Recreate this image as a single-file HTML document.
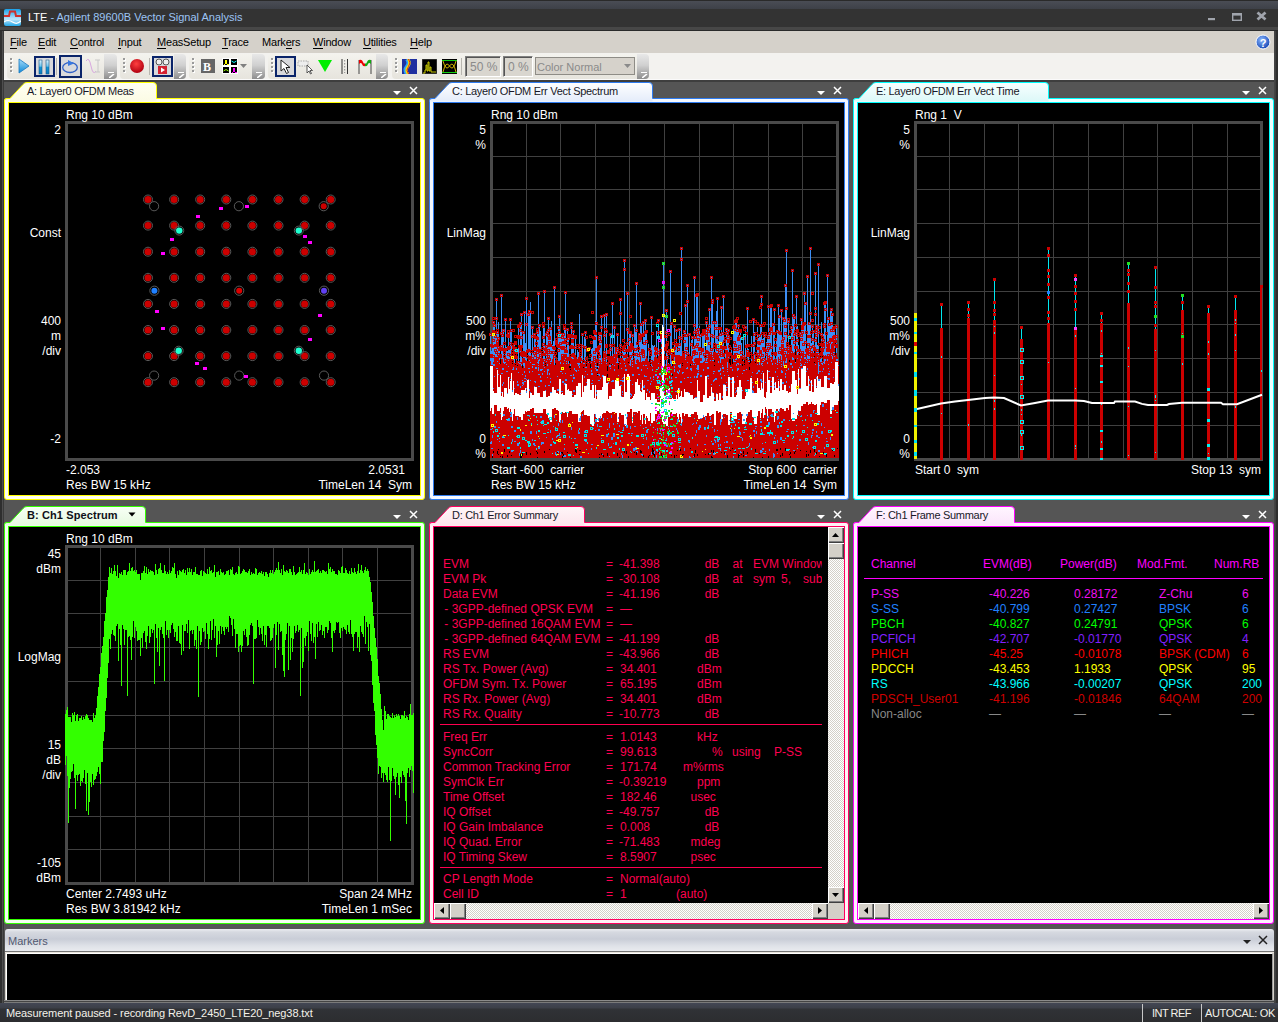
<!DOCTYPE html><html><head><meta charset="utf-8"><style>
*{box-sizing:border-box;margin:0;padding:0}
html,body{width:1278px;height:1022px;overflow:hidden;background:#555555;font-family:"Liberation Sans",sans-serif}
.t{position:absolute;white-space:pre;line-height:1;}
.a{position:absolute}
</style></head><body>

<div style="position:absolute;left:0px;top:0px;width:1278px;height:31px;background:linear-gradient(#2a2a2a 0,#2a2a2a 1px,#4a4d55 1px,#3e4148 9px,#333 9px,#333 27px,#474747 27px,#474747 30px,#2a2a2a 30px)"></div>
<svg class="a" style="left:4px;top:9px" width="17" height="17" viewBox="0 0 17 17">
<defs><linearGradient id="ig" x1="0" y1="0" x2="0" y2="1"><stop offset="0" stop-color="#1aa0e8"/><stop offset="0.6" stop-color="#bfe6fb"/><stop offset="1" stop-color="#22a8ea"/></linearGradient></defs>
<rect x="0" y="0" width="17" height="17" rx="2" fill="url(#ig)"/>
<path d="M0 7 L5 7 L6 2.5 L11 2.5 L12 7 L17 7" stroke="#d0302a" stroke-width="2" fill="none"/>
<path d="M0 13 Q4 10 8.5 13 T17 12" stroke="#fff" stroke-width="1.2" fill="none"/>
</svg>
<div class="t" style="left:28px;top:11.69px;font-size:11px;color:#ffffff;">LTE <span style="color:#9cc4f4">- Agilent 89600B Vector Signal Analysis</span></div>
<svg class="a" style="left:1200px;top:8px" width="72" height="16" viewBox="0 0 72 16">
<rect x="8" y="10" width="7" height="2.2" fill="#a0a4ac"/>
<rect x="32.7" y="5.7" width="8.6" height="6.6" fill="none" stroke="#a0a4ac" stroke-width="1.4"/><rect x="32" y="5" width="10" height="2.6" fill="#a0a4ac"/>
<path d="M57.5 4.5 L65.5 11.5 M65.5 4.5 L57.5 11.5" stroke="#a0a4ac" stroke-width="2.8"/>
</svg>
<div style="position:absolute;left:0px;top:31px;width:4px;height:991px;background:linear-gradient(90deg,#2e2e2e 0,#2e2e2e 2px,#4e4e4e 2px,#4e4e4e 3px,#3a3a3a 3px)"></div>
<div style="position:absolute;left:1274px;top:31px;width:4px;height:991px;background:linear-gradient(90deg,#3a3a3a 0,#4e4e4e 1px,#2e2e2e 2px)"></div>
<div style="position:absolute;left:4px;top:31px;width:1270px;height:22px;background:#d5d1ca"></div>
<div class="t" style="left:10px;top:36.69px;font-size:11px;color:#000;letter-spacing:-0.2px"><u style="text-decoration:none;border-bottom:1px solid #000">F</u>ile</div>
<div class="t" style="left:38px;top:36.69px;font-size:11px;color:#000;letter-spacing:-0.2px"><u style="text-decoration:none;border-bottom:1px solid #000">E</u>dit</div>
<div class="t" style="left:70px;top:36.69px;font-size:11px;color:#000;letter-spacing:-0.2px"><u style="text-decoration:none;border-bottom:1px solid #000">C</u>ontrol</div>
<div class="t" style="left:118px;top:36.69px;font-size:11px;color:#000;letter-spacing:-0.2px"><u style="text-decoration:none;border-bottom:1px solid #000">I</u>nput</div>
<div class="t" style="left:157px;top:36.69px;font-size:11px;color:#000;letter-spacing:-0.2px"><u style="text-decoration:none;border-bottom:1px solid #000">M</u>easSetup</div>
<div class="t" style="left:222px;top:36.69px;font-size:11px;color:#000;letter-spacing:-0.2px"><u style="text-decoration:none;border-bottom:1px solid #000">T</u>race</div>
<div class="t" style="left:262px;top:36.69px;font-size:11px;color:#000;letter-spacing:-0.2px">Mark<u style="text-decoration:none;border-bottom:1px solid #000">e</u>rs</div>
<div class="t" style="left:313px;top:36.69px;font-size:11px;color:#000;letter-spacing:-0.2px"><u style="text-decoration:none;border-bottom:1px solid #000">W</u>indow</div>
<div class="t" style="left:363px;top:36.69px;font-size:11px;color:#000;letter-spacing:-0.2px"><u style="text-decoration:none;border-bottom:1px solid #000">U</u>tilities</div>
<div class="t" style="left:410px;top:36.69px;font-size:11px;color:#000;letter-spacing:-0.2px"><u style="text-decoration:none;border-bottom:1px solid #000">H</u>elp</div>
<svg class="a" style="left:1255px;top:34px" width="16" height="16" viewBox="0 0 16 16">
<defs><radialGradient id="hg" cx="0.4" cy="0.35" r="0.7"><stop offset="0" stop-color="#8ab8ff"/><stop offset="1" stop-color="#1040b0"/></radialGradient></defs>
<circle cx="8" cy="8" r="7" fill="url(#hg)" stroke="#fff" stroke-width="1"/>
<text x="8" y="12.5" font-size="11" font-weight="bold" text-anchor="middle" fill="#fff" font-family="Liberation Sans">?</text></svg>
<div style="position:absolute;left:4px;top:53px;width:1270px;height:26px;background:#f3f2ef"></div>
<div style="position:absolute;left:4px;top:79px;width:1270px;height:1px;background:#fafafa"></div>
<div style="position:absolute;left:4px;top:80px;width:1270px;height:2px;background:#3e3e3e"></div>
<div style="position:absolute;left:7px;top:54px;width:110px;height:25px;background:linear-gradient(#f4f3ee,#e6e4dd);border-radius:4px"></div>
<div style="position:absolute;left:10px;top:58px;width:2px;height:2px;background:#9a9a9a;box-shadow:1px 1px 0 #fff"></div>
<div style="position:absolute;left:10px;top:62px;width:2px;height:2px;background:#9a9a9a;box-shadow:1px 1px 0 #fff"></div>
<div style="position:absolute;left:10px;top:66px;width:2px;height:2px;background:#9a9a9a;box-shadow:1px 1px 0 #fff"></div>
<div style="position:absolute;left:10px;top:70px;width:2px;height:2px;background:#9a9a9a;box-shadow:1px 1px 0 #fff"></div>
<div style="position:absolute;left:104px;top:54px;width:13px;height:25px;background:linear-gradient(#e8e8e8 0%,#d0d0d0 45%,#8e8e8e 100%);border-radius:0 4px 4px 0"></div>
<div style="position:absolute;left:108px;top:72px;width:6px;height:1px;background:#fff"></div>
<svg class="a" style="left:109px;top:74px" width="6" height="4"><path d="M0 4 L5 0" stroke="#fff" stroke-width="1.6"/></svg>
<div style="position:absolute;left:120px;top:54px;width:66px;height:25px;background:linear-gradient(#f4f3ee,#e6e4dd);border-radius:4px"></div>
<div style="position:absolute;left:123px;top:58px;width:2px;height:2px;background:#9a9a9a;box-shadow:1px 1px 0 #fff"></div>
<div style="position:absolute;left:123px;top:62px;width:2px;height:2px;background:#9a9a9a;box-shadow:1px 1px 0 #fff"></div>
<div style="position:absolute;left:123px;top:66px;width:2px;height:2px;background:#9a9a9a;box-shadow:1px 1px 0 #fff"></div>
<div style="position:absolute;left:123px;top:70px;width:2px;height:2px;background:#9a9a9a;box-shadow:1px 1px 0 #fff"></div>
<div style="position:absolute;left:174px;top:54px;width:12px;height:25px;background:linear-gradient(#e8e8e8 0%,#d0d0d0 45%,#8e8e8e 100%);border-radius:0 4px 4px 0"></div>
<div style="position:absolute;left:178px;top:72px;width:6px;height:1px;background:#fff"></div>
<svg class="a" style="left:179px;top:74px" width="6" height="4"><path d="M0 4 L5 0" stroke="#fff" stroke-width="1.6"/></svg>
<div style="position:absolute;left:189px;top:54px;width:76px;height:25px;background:linear-gradient(#f4f3ee,#e6e4dd);border-radius:4px"></div>
<div style="position:absolute;left:192px;top:58px;width:2px;height:2px;background:#9a9a9a;box-shadow:1px 1px 0 #fff"></div>
<div style="position:absolute;left:192px;top:62px;width:2px;height:2px;background:#9a9a9a;box-shadow:1px 1px 0 #fff"></div>
<div style="position:absolute;left:192px;top:66px;width:2px;height:2px;background:#9a9a9a;box-shadow:1px 1px 0 #fff"></div>
<div style="position:absolute;left:192px;top:70px;width:2px;height:2px;background:#9a9a9a;box-shadow:1px 1px 0 #fff"></div>
<div style="position:absolute;left:252px;top:54px;width:13px;height:25px;background:linear-gradient(#e8e8e8 0%,#d0d0d0 45%,#8e8e8e 100%);border-radius:0 4px 4px 0"></div>
<div style="position:absolute;left:256px;top:72px;width:6px;height:1px;background:#fff"></div>
<svg class="a" style="left:257px;top:74px" width="6" height="4"><path d="M0 4 L5 0" stroke="#fff" stroke-width="1.6"/></svg>
<div style="position:absolute;left:268px;top:54px;width:120px;height:25px;background:linear-gradient(#f4f3ee,#e6e4dd);border-radius:4px"></div>
<div style="position:absolute;left:271px;top:58px;width:2px;height:2px;background:#9a9a9a;box-shadow:1px 1px 0 #fff"></div>
<div style="position:absolute;left:271px;top:62px;width:2px;height:2px;background:#9a9a9a;box-shadow:1px 1px 0 #fff"></div>
<div style="position:absolute;left:271px;top:66px;width:2px;height:2px;background:#9a9a9a;box-shadow:1px 1px 0 #fff"></div>
<div style="position:absolute;left:271px;top:70px;width:2px;height:2px;background:#9a9a9a;box-shadow:1px 1px 0 #fff"></div>
<div style="position:absolute;left:376px;top:54px;width:12px;height:25px;background:linear-gradient(#e8e8e8 0%,#d0d0d0 45%,#8e8e8e 100%);border-radius:0 4px 4px 0"></div>
<div style="position:absolute;left:380px;top:72px;width:6px;height:1px;background:#fff"></div>
<svg class="a" style="left:381px;top:74px" width="6" height="4"><path d="M0 4 L5 0" stroke="#fff" stroke-width="1.6"/></svg>
<div style="position:absolute;left:392px;top:54px;width:257px;height:25px;background:linear-gradient(#f4f3ee,#e6e4dd);border-radius:4px"></div>
<div style="position:absolute;left:395px;top:58px;width:2px;height:2px;background:#9a9a9a;box-shadow:1px 1px 0 #fff"></div>
<div style="position:absolute;left:395px;top:62px;width:2px;height:2px;background:#9a9a9a;box-shadow:1px 1px 0 #fff"></div>
<div style="position:absolute;left:395px;top:66px;width:2px;height:2px;background:#9a9a9a;box-shadow:1px 1px 0 #fff"></div>
<div style="position:absolute;left:395px;top:70px;width:2px;height:2px;background:#9a9a9a;box-shadow:1px 1px 0 #fff"></div>
<div style="position:absolute;left:637px;top:54px;width:12px;height:25px;background:linear-gradient(#e8e8e8 0%,#d0d0d0 45%,#8e8e8e 100%);border-radius:0 4px 4px 0"></div>
<div style="position:absolute;left:641px;top:72px;width:6px;height:1px;background:#fff"></div>
<svg class="a" style="left:642px;top:74px" width="6" height="4"><path d="M0 4 L5 0" stroke="#fff" stroke-width="1.6"/></svg>
<svg class="a" style="left:18px;top:58px" width="12" height="16"><defs><linearGradient id="pl" x1="0" y1="0" x2="0" y2="1"><stop offset="0" stop-color="#a8dcfa"/><stop offset="1" stop-color="#0e8ad8"/></linearGradient></defs><path d="M1 1 L11 8 L1 15 Z" fill="url(#pl)" stroke="#1a78c0" stroke-width="0.8"/></svg>
<div style="position:absolute;left:34px;top:56px;width:21px;height:21px;border:2px solid #0a246a;background:#d8d9dc"></div>
<svg class="a" style="left:38px;top:59px" width="14" height="16"><defs><linearGradient id="pz" x1="0" y1="0" x2="0" y2="1"><stop offset="0" stop-color="#e0f4ff"/><stop offset="0.45" stop-color="#6cc4ee"/><stop offset="0.5" stop-color="#1296d6"/><stop offset="1" stop-color="#0a7cc0"/></linearGradient></defs><rect x="1" y="1" width="3" height="14" fill="url(#pz)" stroke="#1a5a8a" stroke-width="0.6"/><rect x="8" y="1" width="3" height="14" fill="url(#pz)" stroke="#1a5a8a" stroke-width="0.6"/></svg>
<div style="position:absolute;left:56px;top:58px;width:1px;height:17px;background:#b8b6b0"></div>
<div style="position:absolute;left:59px;top:55px;width:23px;height:23px;border:2px solid #0a246a;background:#d8d9dc"></div>
<svg class="a" style="left:61px;top:58px" width="18" height="16"><ellipse cx="9" cy="9.5" rx="7.3" ry="5" fill="none" stroke="#3060c8" stroke-width="1.3"/><path d="M7 2 L13 5.5 L7 8 Z" fill="#3878e0"/></svg>
<svg class="a" style="left:86px;top:58px" width="16" height="16"><path d="M0 3 Q3 -2 5 8 T10 13" fill="none" stroke="#d8a8e0" stroke-width="1"/><path d="M9 2 H14 M9 14 H14 M12 2 V14" stroke="#c8c8c8" stroke-width="1" fill="none"/></svg>
<svg class="a" style="left:129px;top:58px" width="16" height="16"><defs><radialGradient id="rc" cx="0.45" cy="0.35" r="0.65"><stop offset="0" stop-color="#ff4040"/><stop offset="1" stop-color="#b00010"/></radialGradient></defs><circle cx="8" cy="8" r="7" fill="url(#rc)"/></svg>
<div style="position:absolute;left:149px;top:58px;width:1px;height:17px;background:#b8b6b0"></div>
<div style="position:absolute;left:152px;top:56px;width:21px;height:21px;border:2px solid #0a246a;background:#d8d9dc"></div>
<svg class="a" style="left:154px;top:58px" width="17" height="17"><circle cx="5" cy="4" r="3" fill="#eee" stroke="#555" stroke-width="1"/><circle cx="12" cy="4" r="3" fill="#eee" stroke="#555" stroke-width="1"/><rect x="4" y="8" width="9" height="8" fill="#d42030"/><path d="M7 9.5 L11 12 L7 14.5Z" fill="#fff"/></svg>
<div style="position:absolute;left:201px;top:59px;width:14px;height:14px;background:#666"></div>
<div class="t" style="left:203px;top:60.84px;font-size:12px;color:#fff;font-weight:bold;font-family:Liberation Serif,serif">B</div>
<svg class="a" style="left:222px;top:58px" width="16" height="16" shape-rendering="crispEdges"><rect width="16" height="16" fill="#fff"/><rect x="1" y="1" width="6" height="6" fill="#000"/><rect x="9" y="1" width="6" height="6" fill="#000"/><rect x="1" y="9" width="6" height="6" fill="#000"/><rect x="9" y="9" width="6" height="6" fill="#000"/>
<path d="M1.5 6 H3 L4 2 L5 6 H6.5" stroke="#ff0" fill="none" stroke-width="1"/><path d="M9.5 3 Q12 6 14.5 3" stroke="#0ff" fill="none" stroke-width="1" shape-rendering="auto"/><path d="M1.5 13 Q4 10 6.5 13" stroke="#9f0" fill="none" stroke-width="1" shape-rendering="auto"/><path d="M9.5 14 H11 L12 10 L13 14 H14.5" stroke="#f0f" fill="none" stroke-width="1"/></svg>
<svg class="a" style="left:240px;top:64px" width="7" height="4"><path d="M0 0 H7 L3.5 4Z" fill="#808080"/></svg>
<div style="position:absolute;left:275px;top:56px;width:21px;height:21px;border:2px solid #0a246a;background:#d8d9dc"></div>
<svg class="a" style="left:280px;top:59px" width="12" height="16"><path d="M1 1 L1 12 L4 9.5 L6.5 14.5 L8.5 13.5 L6 8.5 L10 8.5 Z" fill="#fff" stroke="#222" stroke-width="1"/></svg>
<svg class="a" style="left:297px;top:58px" width="17" height="17"><rect x="1" y="3" width="10" height="5" fill="#eee" stroke="#aaa" stroke-dasharray="1.5 1" stroke-width="1"/><path d="M10 7 L10 15 L12 13 L13.5 16 L14.5 15.5 L13 12.5 L15.5 12.5 Z" fill="#fff" stroke="#333" stroke-width="0.8"/></svg>
<svg class="a" style="left:317px;top:59px" width="16" height="14"><path d="M1 1 H15 L8 13 Z" fill="#00ee00"/></svg>
<svg class="a" style="left:341px;top:58px" width="8" height="17"><path d="M1 1 V16 M6.5 1 V16" stroke="#333" stroke-width="1"/><path d="M3.7 2 V15" stroke="#888" stroke-width="1" stroke-dasharray="1.5 1.5"/></svg>
<svg class="a" style="left:357px;top:58px" width="17" height="17"><path d="M2 2 V16 M14 2 V16" stroke="#444" stroke-width="1"/><path d="M2 2 Q5 1 6 4 Q7 7 8 5 V8 Q6 9 5 6 Q4 4 2 6 Z" fill="#e00"/><path d="M14 2 Q11 1 10 4 Q9 7 8 5 V8 Q10 9 11 6 Q12 4 14 6 Z" fill="#1a1"/></svg>
<svg class="a" style="left:402px;top:59px" width="15" height="15"><rect width="15" height="15" fill="#2030a0"/><path d="M5 0 Q8 4 5 7.5 T5 15" stroke="#2aa0ff" stroke-width="4" fill="none"/><path d="M6 0 Q9 4 6 7.5 T6 15" stroke="#f0e000" stroke-width="2.4" fill="none"/><path d="M6.5 0 Q9.5 4 6.5 7.5 T6.5 15" stroke="#e02020" stroke-width="1" fill="none"/></svg>
<svg class="a" style="left:422px;top:59px" width="15" height="15"><rect width="15" height="15" fill="#000" stroke="#555"/><path d="M1 14 H3 V11 H4 V6 H5 V12 H6 V3 H7 V12 H8 V8 H9 V13 H14" stroke="#dddd00" fill="none" stroke-width="0.9"/></svg>
<svg class="a" style="left:442px;top:59px" width="15" height="15"><rect width="15" height="15" fill="#000"/><path d="M0 1.5 H15 M0 13.5 H15" stroke="#1c1" stroke-width="1"/><path d="M1 13 Q4 1 7.5 7 T14 2 M1 2 Q4 13 7.5 7 T14 13" stroke="#e8c800" fill="none" stroke-width="0.9"/></svg>
<div style="position:absolute;left:461px;top:58px;width:1px;height:17px;background:#b8b6b0"></div>
<div style="position:absolute;left:465px;top:56px;width:36px;height:21px;background:#d9d6cf;border:1px solid;border-color:#808080 #fff #fff #808080;box-shadow:inset 1px 1px 0 #555"></div>
<div class="t" style="left:470px;top:60.84px;font-size:12px;color:#8a8a8a;">50 %</div>
<div style="position:absolute;left:503px;top:56px;width:30px;height:21px;background:#d9d6cf;border:1px solid;border-color:#808080 #fff #fff #808080;box-shadow:inset 1px 1px 0 #555"></div>
<div class="t" style="left:508px;top:60.84px;font-size:12px;color:#8a8a8a;">0 %</div>
<div style="position:absolute;left:535px;top:57px;width:100px;height:18px;background:#d6d2cb;border:1px solid #8e8c86"></div>
<div class="t" style="left:537px;top:61.69px;font-size:11px;color:#8a8a8a;">Color Normal</div>
<svg class="a" style="left:624px;top:64px" width="7" height="4"><path d="M0 0 H7 L3.5 4Z" fill="#8a8a8a"/></svg>
<div style="position:absolute;left:4px;top:98px;width:421px;height:402px;border:1px solid #ffff00;background:#fffff0;border-radius:3px"></div>
<svg class="a" style="left:4px;top:82px" width="154" height="20">
<defs><linearGradient id="tf498" x1="0" y1="0" x2="0" y2="1"><stop offset="0" stop-color="#fffff4"/><stop offset="1" stop-color="#fbfbe4"/></linearGradient></defs>
<path d="M0.5 19.5 V18.5 Q0.5 16.5 3 16.5 H6 L19 2.5 Q20.5 0.5 23 0.5 L149 0.5 Q152.5 0.5 152.5 4 L152.5 19.5 Z" fill="url(#tf498)"/>
<path d="M0.5 19.5 V18.5 Q0.5 16.5 3 16.5 H6 L19 2.5 Q20.5 0.5 23 0.5 L149 0.5 Q152.5 0.5 152.5 4 L152.5 16.5" fill="none" stroke="#ffff00" stroke-width="1"/>
</svg>
<div style="position:absolute;left:8px;top:102px;width:413px;height:394px;border:1px solid #ffff00;background:#000"></div>
<div class="t" style="left:27px;top:85.69px;font-size:11px;color:#181828;letter-spacing:-0.3px">A: Layer0 OFDM Meas</div>
<svg class="a" style="left:393px;top:86px" width="26" height="10">
<path d="M0 5 H8 L4 9 Z" fill="#fff"/><path d="M17 1 L24 8 M24 1 L17 8" stroke="#fff" stroke-width="1.5"/></svg>
<div style="position:absolute;left:429px;top:98px;width:420px;height:402px;border:1px solid #2f7cf0;background:#f4f8ff;border-radius:3px"></div>
<svg class="a" style="left:429px;top:82px" width="225" height="20">
<defs><linearGradient id="tf42998" x1="0" y1="0" x2="0" y2="1"><stop offset="0" stop-color="#ffffff"/><stop offset="1" stop-color="#e4ecfa"/></linearGradient></defs>
<path d="M0.5 19.5 V18.5 Q0.5 16.5 3 16.5 H6 L19 2.5 Q20.5 0.5 23 0.5 L220 0.5 Q223.5 0.5 223.5 4 L223.5 19.5 Z" fill="url(#tf42998)"/>
<path d="M0.5 19.5 V18.5 Q0.5 16.5 3 16.5 H6 L19 2.5 Q20.5 0.5 23 0.5 L220 0.5 Q223.5 0.5 223.5 4 L223.5 16.5" fill="none" stroke="#2f7cf0" stroke-width="1"/>
</svg>
<div style="position:absolute;left:433px;top:102px;width:412px;height:394px;border:1px solid #2f7cf0;background:#000"></div>
<div class="t" style="left:452px;top:85.69px;font-size:11px;color:#181828;letter-spacing:-0.3px">C: Layer0 OFDM Err Vect Spectrum</div>
<svg class="a" style="left:817px;top:86px" width="26" height="10">
<path d="M0 5 H8 L4 9 Z" fill="#fff"/><path d="M17 1 L24 8 M24 1 L17 8" stroke="#fff" stroke-width="1.5"/></svg>
<div style="position:absolute;left:853px;top:98px;width:421px;height:402px;border:1px solid #00ffff;background:#f0ffff;border-radius:3px"></div>
<svg class="a" style="left:853px;top:82px" width="197" height="20">
<defs><linearGradient id="tf85398" x1="0" y1="0" x2="0" y2="1"><stop offset="0" stop-color="#f8ffff"/><stop offset="1" stop-color="#dcf8f8"/></linearGradient></defs>
<path d="M0.5 19.5 V18.5 Q0.5 16.5 3 16.5 H6 L19 2.5 Q20.5 0.5 23 0.5 L192 0.5 Q195.5 0.5 195.5 4 L195.5 19.5 Z" fill="url(#tf85398)"/>
<path d="M0.5 19.5 V18.5 Q0.5 16.5 3 16.5 H6 L19 2.5 Q20.5 0.5 23 0.5 L192 0.5 Q195.5 0.5 195.5 4 L195.5 16.5" fill="none" stroke="#00ffff" stroke-width="1"/>
</svg>
<div style="position:absolute;left:857px;top:102px;width:413px;height:394px;border:1px solid #00ffff;background:#000"></div>
<div class="t" style="left:876px;top:85.69px;font-size:11px;color:#181828;letter-spacing:-0.3px">E: Layer0 OFDM Err Vect Time</div>
<svg class="a" style="left:1242px;top:86px" width="26" height="10">
<path d="M0 5 H8 L4 9 Z" fill="#fff"/><path d="M17 1 L24 8 M24 1 L17 8" stroke="#fff" stroke-width="1.5"/></svg>
<div style="position:absolute;left:4px;top:522px;width:421px;height:402px;border:1px solid #33ff00;background:#f4fff0;border-radius:3px"></div>
<svg class="a" style="left:4px;top:506px" width="143" height="20">
<defs><linearGradient id="tf4522" x1="0" y1="0" x2="0" y2="1"><stop offset="0" stop-color="#f8fff6"/><stop offset="1" stop-color="#e6fae0"/></linearGradient></defs>
<path d="M0.5 19.5 V18.5 Q0.5 16.5 3 16.5 H6 L19 2.5 Q20.5 0.5 23 0.5 L138 0.5 Q141.5 0.5 141.5 4 L141.5 19.5 Z" fill="url(#tf4522)"/>
<path d="M0.5 19.5 V18.5 Q0.5 16.5 3 16.5 H6 L19 2.5 Q20.5 0.5 23 0.5 L138 0.5 Q141.5 0.5 141.5 4 L141.5 16.5" fill="none" stroke="#33ff00" stroke-width="1"/>
</svg>
<div style="position:absolute;left:8px;top:526px;width:413px;height:394px;border:1px solid #33ff00;background:#000"></div>
<div class="t" style="left:27px;top:509.69px;font-size:11px;color:#101018;font-weight:bold;letter-spacing:0.1px">B: Ch1 Spectrum</div>
<svg class="a" style="left:393px;top:510px" width="26" height="10">
<path d="M0 5 H8 L4 9 Z" fill="#fff"/><path d="M17 1 L24 8 M24 1 L17 8" stroke="#fff" stroke-width="1.5"/></svg>
<svg class="a" style="left:128px;top:512px" width="8" height="5"><path d="M0.5 0.5 H7.5 L4 4.5Z" fill="#000"/></svg>
<div style="position:absolute;left:429px;top:522px;width:420px;height:402px;border:1px solid #ff0060;background:#fff2f6;border-radius:3px"></div>
<svg class="a" style="left:429px;top:506px" width="157" height="20">
<defs><linearGradient id="tf429522" x1="0" y1="0" x2="0" y2="1"><stop offset="0" stop-color="#fff6f8"/><stop offset="1" stop-color="#fde4ec"/></linearGradient></defs>
<path d="M0.5 19.5 V18.5 Q0.5 16.5 3 16.5 H6 L19 2.5 Q20.5 0.5 23 0.5 L152 0.5 Q155.5 0.5 155.5 4 L155.5 19.5 Z" fill="url(#tf429522)"/>
<path d="M0.5 19.5 V18.5 Q0.5 16.5 3 16.5 H6 L19 2.5 Q20.5 0.5 23 0.5 L152 0.5 Q155.5 0.5 155.5 4 L155.5 16.5" fill="none" stroke="#ff0060" stroke-width="1"/>
</svg>
<div style="position:absolute;left:433px;top:526px;width:412px;height:394px;border:1px solid #ff0060;background:#000"></div>
<div class="t" style="left:452px;top:509.69px;font-size:11px;color:#181828;letter-spacing:-0.3px">D: Ch1 Error Summary</div>
<svg class="a" style="left:817px;top:510px" width="26" height="10">
<path d="M0 5 H8 L4 9 Z" fill="#fff"/><path d="M17 1 L24 8 M24 1 L17 8" stroke="#fff" stroke-width="1.5"/></svg>
<div style="position:absolute;left:853px;top:522px;width:421px;height:402px;border:1px solid #ff00ff;background:#fff2ff;border-radius:3px"></div>
<svg class="a" style="left:853px;top:506px" width="163" height="20">
<defs><linearGradient id="tf853522" x1="0" y1="0" x2="0" y2="1"><stop offset="0" stop-color="#fff6ff"/><stop offset="1" stop-color="#fbe4fb"/></linearGradient></defs>
<path d="M0.5 19.5 V18.5 Q0.5 16.5 3 16.5 H6 L19 2.5 Q20.5 0.5 23 0.5 L158 0.5 Q161.5 0.5 161.5 4 L161.5 19.5 Z" fill="url(#tf853522)"/>
<path d="M0.5 19.5 V18.5 Q0.5 16.5 3 16.5 H6 L19 2.5 Q20.5 0.5 23 0.5 L158 0.5 Q161.5 0.5 161.5 4 L161.5 16.5" fill="none" stroke="#ff00ff" stroke-width="1"/>
</svg>
<div style="position:absolute;left:857px;top:526px;width:413px;height:394px;border:1px solid #ff00ff;background:#000"></div>
<div class="t" style="left:876px;top:509.69px;font-size:11px;color:#181828;letter-spacing:-0.3px">F: Ch1 Frame Summary</div>
<svg class="a" style="left:1242px;top:510px" width="26" height="10">
<path d="M0 5 H8 L4 9 Z" fill="#fff"/><path d="M17 1 L24 8 M24 1 L17 8" stroke="#fff" stroke-width="1.5"/></svg>
<div style="position:absolute;left:5px;top:929px;width:1269px;height:22px;background:linear-gradient(#eceef2 0,#d6d9e0 3px,#c9cdd7 10px,#dfe2e8 17px,#e9ebef 22px);border-radius:3px 3px 0 0"></div>
<div class="t" style="left:8px;top:935.69px;font-size:11px;color:#505870;">Markers</div>
<svg class="a" style="left:1242px;top:935px" width="28" height="11">
<path d="M1 5 H9 L5 9 Z" fill="#222"/><path d="M17 1 L25 9 M25 1 L17 9" stroke="#222" stroke-width="1.5"/></svg>
<div style="position:absolute;left:5px;top:951px;width:1269px;height:1px;background:#757575"></div>
<div style="position:absolute;left:5px;top:952px;width:1269px;height:1px;background:#e8e4dc"></div>
<div style="position:absolute;left:5px;top:953px;width:1269px;height:47px;background:#d4d0c8"></div>
<div style="position:absolute;left:6px;top:953px;width:1267px;height:47px;border-top:1px solid #fff;border-left:1px solid #fff;border-right:1px solid #999;background:#000"></div>
<div style="position:absolute;left:4px;top:1000px;width:1270px;height:1px;background:#8a8a8a"></div>
<div style="position:absolute;left:4px;top:1001px;width:1270px;height:1px;background:#444"></div>
<div style="position:absolute;left:4px;top:1002px;width:1270px;height:1px;background:#7a7a7a"></div>
<div style="position:absolute;left:0px;top:1003px;width:1278px;height:19px;background:linear-gradient(#434754 0,#3c3f48 5px,#303236 6px,#2c2d30 19px)"></div>
<div class="t" style="left:6px;top:1007.69px;font-size:11px;color:#f4f2ea;letter-spacing:-0.1px">Measurement paused - recording RevD_2450_LTE20_neg38.txt</div>
<div style="position:absolute;left:1142px;top:1004px;width:1px;height:18px;background:#c8c8c8"></div>
<div style="position:absolute;left:1201px;top:1004px;width:1px;height:18px;background:#c8c8c8"></div>
<div class="t" style="left:1152px;top:1007.69px;font-size:11px;color:#f4f2ea;letter-spacing:-0.5px">INT REF</div>
<div class="t" style="left:1205px;top:1007.69px;font-size:11px;color:#f4f2ea;letter-spacing:-0.35px">AUTOCAL: OK</div>
<svg class="a" style="left:9px;top:103px" width="411" height="392" viewBox="9 103 411 392" shape-rendering="crispEdges" >
<rect x="65" y="121" width="349" height="3" fill="#4a4a4a"/><rect x="65" y="458" width="349" height="3" fill="#4a4a4a"/><rect x="65" y="121" width="3" height="340" fill="#4a4a4a"/><rect x="411" y="121" width="3" height="340" fill="#4a4a4a"/>
<g shape-rendering="auto"><circle cx="148.0" cy="199.5" r="4.5" fill="#000" stroke="#5a5a5a" stroke-width="1"/><circle cx="148.0" cy="199.5" r="3.5" fill="#cc0000"/><circle cx="148.0" cy="225.6" r="4.5" fill="#000" stroke="#5a5a5a" stroke-width="1"/><circle cx="148.0" cy="225.6" r="3.5" fill="#cc0000"/><circle cx="148.0" cy="251.7" r="4.5" fill="#000" stroke="#5a5a5a" stroke-width="1"/><circle cx="148.0" cy="251.7" r="3.5" fill="#cc0000"/><circle cx="148.0" cy="277.8" r="4.5" fill="#000" stroke="#5a5a5a" stroke-width="1"/><circle cx="148.0" cy="277.8" r="3.5" fill="#cc0000"/><circle cx="148.0" cy="303.9" r="4.5" fill="#000" stroke="#5a5a5a" stroke-width="1"/><circle cx="148.0" cy="303.9" r="3.5" fill="#cc0000"/><circle cx="148.0" cy="330.0" r="4.5" fill="#000" stroke="#5a5a5a" stroke-width="1"/><circle cx="148.0" cy="330.0" r="3.5" fill="#cc0000"/><circle cx="148.0" cy="356.1" r="4.5" fill="#000" stroke="#5a5a5a" stroke-width="1"/><circle cx="148.0" cy="356.1" r="3.5" fill="#cc0000"/><circle cx="148.0" cy="382.2" r="4.5" fill="#000" stroke="#5a5a5a" stroke-width="1"/><circle cx="148.0" cy="382.2" r="3.5" fill="#cc0000"/><circle cx="174.1" cy="199.5" r="4.5" fill="#000" stroke="#5a5a5a" stroke-width="1"/><circle cx="174.1" cy="199.5" r="3.5" fill="#cc0000"/><circle cx="174.1" cy="225.6" r="4.5" fill="#000" stroke="#5a5a5a" stroke-width="1"/><circle cx="174.1" cy="225.6" r="3.5" fill="#cc0000"/><circle cx="174.1" cy="251.7" r="4.5" fill="#000" stroke="#5a5a5a" stroke-width="1"/><circle cx="174.1" cy="251.7" r="3.5" fill="#cc0000"/><circle cx="174.1" cy="277.8" r="4.5" fill="#000" stroke="#5a5a5a" stroke-width="1"/><circle cx="174.1" cy="277.8" r="3.5" fill="#cc0000"/><circle cx="174.1" cy="303.9" r="4.5" fill="#000" stroke="#5a5a5a" stroke-width="1"/><circle cx="174.1" cy="303.9" r="3.5" fill="#cc0000"/><circle cx="174.1" cy="330.0" r="4.5" fill="#000" stroke="#5a5a5a" stroke-width="1"/><circle cx="174.1" cy="330.0" r="3.5" fill="#cc0000"/><circle cx="174.1" cy="356.1" r="4.5" fill="#000" stroke="#5a5a5a" stroke-width="1"/><circle cx="174.1" cy="356.1" r="3.5" fill="#cc0000"/><circle cx="174.1" cy="382.2" r="4.5" fill="#000" stroke="#5a5a5a" stroke-width="1"/><circle cx="174.1" cy="382.2" r="3.5" fill="#cc0000"/><circle cx="200.2" cy="199.5" r="4.5" fill="#000" stroke="#5a5a5a" stroke-width="1"/><circle cx="200.2" cy="199.5" r="3.5" fill="#cc0000"/><circle cx="200.2" cy="225.6" r="4.5" fill="#000" stroke="#5a5a5a" stroke-width="1"/><circle cx="200.2" cy="225.6" r="3.5" fill="#cc0000"/><circle cx="200.2" cy="251.7" r="4.5" fill="#000" stroke="#5a5a5a" stroke-width="1"/><circle cx="200.2" cy="251.7" r="3.5" fill="#cc0000"/><circle cx="200.2" cy="277.8" r="4.5" fill="#000" stroke="#5a5a5a" stroke-width="1"/><circle cx="200.2" cy="277.8" r="3.5" fill="#cc0000"/><circle cx="200.2" cy="303.9" r="4.5" fill="#000" stroke="#5a5a5a" stroke-width="1"/><circle cx="200.2" cy="303.9" r="3.5" fill="#cc0000"/><circle cx="200.2" cy="330.0" r="4.5" fill="#000" stroke="#5a5a5a" stroke-width="1"/><circle cx="200.2" cy="330.0" r="3.5" fill="#cc0000"/><circle cx="200.2" cy="356.1" r="4.5" fill="#000" stroke="#5a5a5a" stroke-width="1"/><circle cx="200.2" cy="356.1" r="3.5" fill="#cc0000"/><circle cx="200.2" cy="382.2" r="4.5" fill="#000" stroke="#5a5a5a" stroke-width="1"/><circle cx="200.2" cy="382.2" r="3.5" fill="#cc0000"/><circle cx="226.3" cy="199.5" r="4.5" fill="#000" stroke="#5a5a5a" stroke-width="1"/><circle cx="226.3" cy="199.5" r="3.5" fill="#cc0000"/><circle cx="226.3" cy="225.6" r="4.5" fill="#000" stroke="#5a5a5a" stroke-width="1"/><circle cx="226.3" cy="225.6" r="3.5" fill="#cc0000"/><circle cx="226.3" cy="251.7" r="4.5" fill="#000" stroke="#5a5a5a" stroke-width="1"/><circle cx="226.3" cy="251.7" r="3.5" fill="#cc0000"/><circle cx="226.3" cy="277.8" r="4.5" fill="#000" stroke="#5a5a5a" stroke-width="1"/><circle cx="226.3" cy="277.8" r="3.5" fill="#cc0000"/><circle cx="226.3" cy="303.9" r="4.5" fill="#000" stroke="#5a5a5a" stroke-width="1"/><circle cx="226.3" cy="303.9" r="3.5" fill="#cc0000"/><circle cx="226.3" cy="330.0" r="4.5" fill="#000" stroke="#5a5a5a" stroke-width="1"/><circle cx="226.3" cy="330.0" r="3.5" fill="#cc0000"/><circle cx="226.3" cy="356.1" r="4.5" fill="#000" stroke="#5a5a5a" stroke-width="1"/><circle cx="226.3" cy="356.1" r="3.5" fill="#cc0000"/><circle cx="226.3" cy="382.2" r="4.5" fill="#000" stroke="#5a5a5a" stroke-width="1"/><circle cx="226.3" cy="382.2" r="3.5" fill="#cc0000"/><circle cx="252.4" cy="199.5" r="4.5" fill="#000" stroke="#5a5a5a" stroke-width="1"/><circle cx="252.4" cy="199.5" r="3.5" fill="#cc0000"/><circle cx="252.4" cy="225.6" r="4.5" fill="#000" stroke="#5a5a5a" stroke-width="1"/><circle cx="252.4" cy="225.6" r="3.5" fill="#cc0000"/><circle cx="252.4" cy="251.7" r="4.5" fill="#000" stroke="#5a5a5a" stroke-width="1"/><circle cx="252.4" cy="251.7" r="3.5" fill="#cc0000"/><circle cx="252.4" cy="277.8" r="4.5" fill="#000" stroke="#5a5a5a" stroke-width="1"/><circle cx="252.4" cy="277.8" r="3.5" fill="#cc0000"/><circle cx="252.4" cy="303.9" r="4.5" fill="#000" stroke="#5a5a5a" stroke-width="1"/><circle cx="252.4" cy="303.9" r="3.5" fill="#cc0000"/><circle cx="252.4" cy="330.0" r="4.5" fill="#000" stroke="#5a5a5a" stroke-width="1"/><circle cx="252.4" cy="330.0" r="3.5" fill="#cc0000"/><circle cx="252.4" cy="356.1" r="4.5" fill="#000" stroke="#5a5a5a" stroke-width="1"/><circle cx="252.4" cy="356.1" r="3.5" fill="#cc0000"/><circle cx="252.4" cy="382.2" r="4.5" fill="#000" stroke="#5a5a5a" stroke-width="1"/><circle cx="252.4" cy="382.2" r="3.5" fill="#cc0000"/><circle cx="278.5" cy="199.5" r="4.5" fill="#000" stroke="#5a5a5a" stroke-width="1"/><circle cx="278.5" cy="199.5" r="3.5" fill="#cc0000"/><circle cx="278.5" cy="225.6" r="4.5" fill="#000" stroke="#5a5a5a" stroke-width="1"/><circle cx="278.5" cy="225.6" r="3.5" fill="#cc0000"/><circle cx="278.5" cy="251.7" r="4.5" fill="#000" stroke="#5a5a5a" stroke-width="1"/><circle cx="278.5" cy="251.7" r="3.5" fill="#cc0000"/><circle cx="278.5" cy="277.8" r="4.5" fill="#000" stroke="#5a5a5a" stroke-width="1"/><circle cx="278.5" cy="277.8" r="3.5" fill="#cc0000"/><circle cx="278.5" cy="303.9" r="4.5" fill="#000" stroke="#5a5a5a" stroke-width="1"/><circle cx="278.5" cy="303.9" r="3.5" fill="#cc0000"/><circle cx="278.5" cy="330.0" r="4.5" fill="#000" stroke="#5a5a5a" stroke-width="1"/><circle cx="278.5" cy="330.0" r="3.5" fill="#cc0000"/><circle cx="278.5" cy="356.1" r="4.5" fill="#000" stroke="#5a5a5a" stroke-width="1"/><circle cx="278.5" cy="356.1" r="3.5" fill="#cc0000"/><circle cx="278.5" cy="382.2" r="4.5" fill="#000" stroke="#5a5a5a" stroke-width="1"/><circle cx="278.5" cy="382.2" r="3.5" fill="#cc0000"/><circle cx="304.6" cy="199.5" r="4.5" fill="#000" stroke="#5a5a5a" stroke-width="1"/><circle cx="304.6" cy="199.5" r="3.5" fill="#cc0000"/><circle cx="304.6" cy="225.6" r="4.5" fill="#000" stroke="#5a5a5a" stroke-width="1"/><circle cx="304.6" cy="225.6" r="3.5" fill="#cc0000"/><circle cx="304.6" cy="251.7" r="4.5" fill="#000" stroke="#5a5a5a" stroke-width="1"/><circle cx="304.6" cy="251.7" r="3.5" fill="#cc0000"/><circle cx="304.6" cy="277.8" r="4.5" fill="#000" stroke="#5a5a5a" stroke-width="1"/><circle cx="304.6" cy="277.8" r="3.5" fill="#cc0000"/><circle cx="304.6" cy="303.9" r="4.5" fill="#000" stroke="#5a5a5a" stroke-width="1"/><circle cx="304.6" cy="303.9" r="3.5" fill="#cc0000"/><circle cx="304.6" cy="330.0" r="4.5" fill="#000" stroke="#5a5a5a" stroke-width="1"/><circle cx="304.6" cy="330.0" r="3.5" fill="#cc0000"/><circle cx="304.6" cy="356.1" r="4.5" fill="#000" stroke="#5a5a5a" stroke-width="1"/><circle cx="304.6" cy="356.1" r="3.5" fill="#cc0000"/><circle cx="304.6" cy="382.2" r="4.5" fill="#000" stroke="#5a5a5a" stroke-width="1"/><circle cx="304.6" cy="382.2" r="3.5" fill="#cc0000"/><circle cx="330.7" cy="199.5" r="4.5" fill="#000" stroke="#5a5a5a" stroke-width="1"/><circle cx="330.7" cy="199.5" r="3.5" fill="#cc0000"/><circle cx="330.7" cy="225.6" r="4.5" fill="#000" stroke="#5a5a5a" stroke-width="1"/><circle cx="330.7" cy="225.6" r="3.5" fill="#cc0000"/><circle cx="330.7" cy="251.7" r="4.5" fill="#000" stroke="#5a5a5a" stroke-width="1"/><circle cx="330.7" cy="251.7" r="3.5" fill="#cc0000"/><circle cx="330.7" cy="277.8" r="4.5" fill="#000" stroke="#5a5a5a" stroke-width="1"/><circle cx="330.7" cy="277.8" r="3.5" fill="#cc0000"/><circle cx="330.7" cy="303.9" r="4.5" fill="#000" stroke="#5a5a5a" stroke-width="1"/><circle cx="330.7" cy="303.9" r="3.5" fill="#cc0000"/><circle cx="330.7" cy="330.0" r="4.5" fill="#000" stroke="#5a5a5a" stroke-width="1"/><circle cx="330.7" cy="330.0" r="3.5" fill="#cc0000"/><circle cx="330.7" cy="356.1" r="4.5" fill="#000" stroke="#5a5a5a" stroke-width="1"/><circle cx="330.7" cy="356.1" r="3.5" fill="#cc0000"/><circle cx="330.7" cy="382.2" r="4.5" fill="#000" stroke="#5a5a5a" stroke-width="1"/><circle cx="330.7" cy="382.2" r="3.5" fill="#cc0000"/>
<circle cx="154.1" cy="206.2" r="4.6" fill="none" stroke="#5a5a5a" stroke-width="1"/>
<circle cx="238.9" cy="206.2" r="4.6" fill="none" stroke="#5a5a5a" stroke-width="1"/>
<circle cx="154.1" cy="375.6" r="4.6" fill="none" stroke="#5a5a5a" stroke-width="1"/>
<circle cx="239.2" cy="375.6" r="4.6" fill="none" stroke="#5a5a5a" stroke-width="1"/>
<circle cx="324" cy="375.6" r="4.6" fill="none" stroke="#5a5a5a" stroke-width="1"/>
<circle cx="323.7" cy="206.2" r="4.6" fill="none" stroke="#5a5a5a" stroke-width="1"/><circle cx="323.7" cy="206.2" r="3" fill="#cc0000"/>
<circle cx="239.2" cy="290.7" r="4.6" fill="none" stroke="#5a5a5a" stroke-width="1"/><circle cx="239.2" cy="290.7" r="3" fill="#dd0000"/>
<circle cx="154.4" cy="290.7" r="4.6" fill="none" stroke="#5a5a5a" stroke-width="1"/><circle cx="154.4" cy="290.7" r="3" fill="#2080ff"/>
<circle cx="324" cy="290.7" r="4.6" fill="none" stroke="#5a5a5a" stroke-width="1"/><circle cx="324" cy="290.7" r="3" fill="#6040f0"/>
<circle cx="179.3" cy="230.6" r="4.5" fill="none" stroke="#5a5a5a" stroke-width="1"/><circle cx="179.3" cy="230.6" r="3.2" fill="#20ffd0"/>
<circle cx="178.7" cy="350.7" r="4.5" fill="none" stroke="#5a5a5a" stroke-width="1"/><circle cx="178.7" cy="350.7" r="3.2" fill="#20ffd0"/>
<circle cx="298.8" cy="230.6" r="4.5" fill="none" stroke="#5a5a5a" stroke-width="1"/><circle cx="298.8" cy="230.6" r="3.2" fill="#20ffd0"/>
<circle cx="298.8" cy="350.7" r="4.5" fill="none" stroke="#5a5a5a" stroke-width="1"/><circle cx="298.8" cy="350.7" r="3.2" fill="#20ffd0"/>
</g>
<rect x="219" y="207" width="4" height="3" fill="#ff00ff"/>
<rect x="245" y="205" width="4" height="3" fill="#ff00ff"/>
<rect x="196" y="215" width="4" height="3" fill="#ff00ff"/>
<rect x="170" y="238" width="4" height="3" fill="#ff00ff"/>
<rect x="161" y="252" width="4" height="3" fill="#ff00ff"/>
<rect x="303" y="235" width="4" height="3" fill="#ff00ff"/>
<rect x="308" y="241" width="4" height="3" fill="#ff00ff"/>
<rect x="155" y="310" width="4" height="3" fill="#ff00ff"/>
<rect x="161" y="327" width="4" height="3" fill="#ff00ff"/>
<rect x="318" y="314" width="4" height="3" fill="#ff00ff"/>
<rect x="308" y="338" width="4" height="3" fill="#ff00ff"/>
<rect x="195" y="362" width="4" height="3" fill="#ff00ff"/>
<rect x="203" y="367" width="4" height="3" fill="#ff00ff"/>
<rect x="244" y="375" width="4" height="3" fill="#ff00ff"/>
</svg>
<div class="t" style="left:66px;top:108.84px;font-size:12px;color:#fff;">Rng 10 dBm</div>
<div class="t" style="right:1217px;top:123.84px;font-size:12px;color:#fff;">2</div>
<div class="t" style="right:1217px;top:226.84px;font-size:12px;color:#fff;">Const</div>
<div class="t" style="right:1217px;top:314.84px;font-size:12px;color:#fff;">400</div>
<div class="t" style="right:1217px;top:329.84px;font-size:12px;color:#fff;">m</div>
<div class="t" style="right:1217px;top:344.84px;font-size:12px;color:#fff;">/div</div>
<div class="t" style="right:1217px;top:432.84px;font-size:12px;color:#fff;">-2</div>
<div class="t" style="left:66px;top:463.84px;font-size:12px;color:#fff;">-2.053</div>
<div class="t" style="right:873px;top:463.84px;font-size:12px;color:#fff;">2.0531</div>
<div class="t" style="left:66px;top:478.84px;font-size:12px;color:#fff;">Res BW 15 kHz</div>
<div class="t" style="right:866px;top:478.84px;font-size:12px;color:#fff;">TimeLen 14  Sym</div>
<svg class="a" style="left:434px;top:103px" width="410" height="392" viewBox="434 103 410 392" shape-rendering="crispEdges" >
<rect x="526" y="121" width="1" height="340" fill="#404040"/><rect x="560" y="121" width="1" height="340" fill="#404040"/><rect x="595" y="121" width="1" height="340" fill="#404040"/><rect x="629" y="121" width="1" height="340" fill="#404040"/><rect x="664" y="121" width="1" height="340" fill="#404040"/><rect x="699" y="121" width="1" height="340" fill="#404040"/><rect x="733" y="121" width="1" height="340" fill="#404040"/><rect x="768" y="121" width="1" height="340" fill="#404040"/><rect x="802" y="121" width="1" height="340" fill="#404040"/><rect x="490" y="156" width="349" height="1" fill="#404040"/><rect x="490" y="189" width="349" height="1" fill="#404040"/><rect x="490" y="223" width="349" height="1" fill="#404040"/><rect x="490" y="257" width="349" height="1" fill="#404040"/><rect x="490" y="291" width="349" height="1" fill="#404040"/><rect x="490" y="324" width="349" height="1" fill="#404040"/><rect x="490" y="358" width="349" height="1" fill="#404040"/><rect x="490" y="392" width="349" height="1" fill="#404040"/><rect x="490" y="425" width="349" height="1" fill="#404040"/>
<rect x="490" y="121" width="349" height="3" fill="#4a4a4a"/><rect x="490" y="458" width="349" height="3" fill="#4a4a4a"/><rect x="490" y="121" width="3" height="340" fill="#4a4a4a"/><rect x="836" y="121" width="3" height="340" fill="#4a4a4a"/>
<path fill="#3d8ef5" d="M490 334h1v123h-1zM491 351h1v106h-1zM492 347h1v110h-1zM493 322h1v135h-1zM494 325h1v132h-1zM495 336h1v121h-1zM496 299h1v158h-1zM497 332h1v125h-1zM498 322h1v135h-1zM499 347h1v110h-1zM501 295h1v162h-1zM502 335h1v122h-1zM503 330h1v127h-1zM505 319h1v138h-1zM506 347h1v110h-1zM507 351h1v106h-1zM508 333h1v124h-1zM509 346h1v111h-1zM510 319h1v138h-1zM511 330h1v127h-1zM513 349h1v108h-1zM514 345h1v112h-1zM516 349h1v108h-1zM518 326h1v131h-1zM520 323h1v134h-1zM521 314h1v143h-1zM523 331h1v126h-1zM524 312h1v145h-1zM525 343h1v114h-1zM526 298h1v159h-1zM528 314h1v143h-1zM529 311h1v146h-1zM530 302h1v155h-1zM532 327h1v130h-1zM533 352h1v105h-1zM534 334h1v123h-1zM535 337h1v120h-1zM537 332h1v125h-1zM538 293h1v164h-1zM539 325h1v132h-1zM540 331h1v126h-1zM543 326h1v131h-1zM544 291h1v166h-1zM546 334h1v123h-1zM547 332h1v125h-1zM548 318h1v139h-1zM549 338h1v119h-1zM550 328h1v129h-1zM551 321h1v136h-1zM552 345h1v112h-1zM553 341h1v116h-1zM554 287h1v170h-1zM558 327h1v130h-1zM559 316h1v141h-1zM560 336h1v121h-1zM561 334h1v123h-1zM562 337h1v120h-1zM563 334h1v123h-1zM564 328h1v129h-1zM565 292h1v165h-1zM566 350h1v107h-1zM567 329h1v128h-1zM568 335h1v122h-1zM571 323h1v134h-1zM572 336h1v121h-1zM573 331h1v126h-1zM575 337h1v120h-1zM577 350h1v107h-1zM578 352h1v105h-1zM579 314h1v143h-1zM581 349h1v108h-1zM582 334h1v123h-1zM584 337h1v120h-1zM585 332h1v125h-1zM591 349h1v108h-1zM592 348h1v109h-1zM593 337h1v120h-1zM594 331h1v126h-1zM595 321h1v136h-1zM596 277h1v180h-1zM599 333h1v124h-1zM600 333h1v124h-1zM601 316h1v141h-1zM604 315h1v142h-1zM606 314h1v143h-1zM610 334h1v123h-1zM612 303h1v154h-1zM614 327h1v130h-1zM616 350h1v107h-1zM617 334h1v123h-1zM620 299h1v158h-1zM622 348h1v109h-1zM623 351h1v106h-1zM624 260h1v197h-1zM625 345h1v112h-1zM627 293h1v164h-1zM629 332h1v125h-1zM630 332h1v125h-1zM631 349h1v108h-1zM632 335h1v122h-1zM634 325h1v132h-1zM635 329h1v128h-1zM636 283h1v174h-1zM637 344h1v113h-1zM638 352h1v105h-1zM639 334h1v123h-1zM640 303h1v154h-1zM641 324h1v133h-1zM642 344h1v113h-1zM643 322h1v135h-1zM644 337h1v120h-1zM645 320h1v137h-1zM646 331h1v126h-1zM648 344h1v113h-1zM651 317h1v140h-1zM652 345h1v112h-1zM653 346h1v111h-1zM654 345h1v112h-1zM656 331h1v126h-1zM658 320h1v137h-1zM661 335h1v122h-1zM662 336h1v121h-1zM663 336h1v121h-1zM664 337h1v120h-1zM666 310h1v147h-1zM667 350h1v107h-1zM670 271h1v186h-1zM671 323h1v134h-1zM674 326h1v131h-1zM675 348h1v109h-1zM676 330h1v127h-1zM677 352h1v105h-1zM678 346h1v111h-1zM679 329h1v128h-1zM680 345h1v112h-1zM681 248h1v209h-1zM684 331h1v126h-1zM685 305h1v152h-1zM686 335h1v122h-1zM687 285h1v172h-1zM689 334h1v123h-1zM691 340h1v117h-1zM692 337h1v120h-1zM693 346h1v111h-1zM694 277h1v180h-1zM695 336h1v121h-1zM696 295h1v162h-1zM697 294h1v163h-1zM698 329h1v128h-1zM699 326h1v131h-1zM700 335h1v122h-1zM701 349h1v108h-1zM702 334h1v123h-1zM703 333h1v124h-1zM704 330h1v127h-1zM706 322h1v135h-1zM707 328h1v129h-1zM708 331h1v126h-1zM709 309h1v148h-1zM710 349h1v108h-1zM711 277h1v180h-1zM712 300h1v157h-1zM713 322h1v135h-1zM715 322h1v135h-1zM716 311h1v146h-1zM717 298h1v159h-1zM718 341h1v116h-1zM719 328h1v129h-1zM720 334h1v123h-1zM721 307h1v150h-1zM722 333h1v124h-1zM723 296h1v161h-1zM725 348h1v109h-1zM726 329h1v128h-1zM727 333h1v124h-1zM728 330h1v127h-1zM731 348h1v109h-1zM733 327h1v130h-1zM734 326h1v131h-1zM735 321h1v136h-1zM736 321h1v136h-1zM737 330h1v127h-1zM738 325h1v132h-1zM739 336h1v121h-1zM740 330h1v127h-1zM741 343h1v114h-1zM743 338h1v119h-1zM745 327h1v130h-1zM747 308h1v149h-1zM748 349h1v108h-1zM751 336h1v121h-1zM753 319h1v138h-1zM754 332h1v125h-1zM757 327h1v130h-1zM758 338h1v119h-1zM759 335h1v122h-1zM760 325h1v132h-1zM761 296h1v161h-1zM762 339h1v118h-1zM763 338h1v119h-1zM764 335h1v122h-1zM766 342h1v115h-1zM767 338h1v119h-1zM768 306h1v151h-1zM769 333h1v124h-1zM770 306h1v151h-1zM771 305h1v152h-1zM773 324h1v133h-1zM774 309h1v148h-1zM776 338h1v119h-1zM777 331h1v126h-1zM778 305h1v152h-1zM779 316h1v141h-1zM780 333h1v124h-1zM781 310h1v147h-1zM782 337h1v120h-1zM783 318h1v139h-1zM784 320h1v137h-1zM785 285h1v172h-1zM786 250h1v207h-1zM788 321h1v136h-1zM791 327h1v130h-1zM792 270h1v187h-1zM793 315h1v142h-1zM794 317h1v140h-1zM796 296h1v161h-1zM797 326h1v131h-1zM798 345h1v112h-1zM800 333h1v124h-1zM801 319h1v138h-1zM802 326h1v131h-1zM803 324h1v133h-1zM804 293h1v164h-1zM805 303h1v154h-1zM807 276h1v181h-1zM808 324h1v133h-1zM809 323h1v134h-1zM810 248h1v209h-1zM811 343h1v114h-1zM812 326h1v131h-1zM813 331h1v126h-1zM815 273h1v184h-1zM816 326h1v131h-1zM817 345h1v112h-1zM818 264h1v193h-1zM821 322h1v135h-1zM823 334h1v123h-1zM824 303h1v154h-1zM825 302h1v155h-1zM826 343h1v114h-1zM827 275h1v182h-1zM828 318h1v139h-1zM829 324h1v133h-1zM830 309h1v148h-1zM831 309h1v148h-1zM832 314h1v143h-1zM833 328h1v129h-1zM834 327h1v130h-1zM836 326h1v131h-1z"/>
<path fill="#cc0000" d="M490 361h1v97h-1zM491 365h1v93h-1zM492 365h1v93h-1zM493 366h1v92h-1zM494 363h1v95h-1zM495 366h1v92h-1zM496 364h1v94h-1zM497 368h1v90h-1zM498 355h1v103h-1zM499 360h1v98h-1zM500 364h1v94h-1zM501 359h1v99h-1zM502 359h1v99h-1zM503 367h1v91h-1zM504 361h1v97h-1zM505 367h1v91h-1zM506 368h1v90h-1zM507 366h1v92h-1zM508 367h1v91h-1zM509 363h1v95h-1zM510 357h1v101h-1zM511 364h1v94h-1zM512 366h1v92h-1zM513 361h1v97h-1zM514 364h1v94h-1zM515 368h1v90h-1zM516 360h1v98h-1zM517 367h1v91h-1zM518 373h1v85h-1zM519 361h1v97h-1zM520 365h1v93h-1zM521 363h1v95h-1zM522 372h1v86h-1zM523 366h1v92h-1zM524 368h1v90h-1zM525 361h1v97h-1zM526 364h1v94h-1zM527 364h1v94h-1zM528 355h1v103h-1zM529 371h1v87h-1zM530 368h1v90h-1zM531 355h1v103h-1zM532 368h1v90h-1zM533 363h1v95h-1zM534 366h1v92h-1zM535 366h1v92h-1zM536 357h1v101h-1zM537 363h1v95h-1zM538 371h1v87h-1zM539 361h1v97h-1zM540 359h1v99h-1zM541 357h1v101h-1zM542 358h1v100h-1zM543 366h1v92h-1zM544 372h1v86h-1zM545 366h1v92h-1zM546 365h1v93h-1zM547 375h1v83h-1zM548 361h1v97h-1zM549 361h1v97h-1zM550 367h1v91h-1zM551 367h1v91h-1zM552 359h1v99h-1zM553 358h1v100h-1zM554 365h1v93h-1zM555 365h1v93h-1zM556 357h1v101h-1zM557 363h1v95h-1zM558 361h1v97h-1zM559 366h1v92h-1zM560 363h1v95h-1zM561 364h1v94h-1zM562 362h1v96h-1zM563 369h1v89h-1zM564 371h1v87h-1zM565 362h1v96h-1zM566 368h1v90h-1zM567 360h1v98h-1zM568 364h1v94h-1zM569 368h1v90h-1zM570 372h1v86h-1zM571 362h1v96h-1zM572 364h1v94h-1zM573 365h1v93h-1zM574 357h1v101h-1zM575 364h1v94h-1zM576 361h1v97h-1zM577 366h1v92h-1zM578 358h1v100h-1zM579 354h1v104h-1zM580 364h1v94h-1zM581 365h1v93h-1zM582 361h1v97h-1zM583 368h1v90h-1zM584 363h1v95h-1zM585 361h1v97h-1zM586 366h1v92h-1zM587 356h1v102h-1zM588 361h1v97h-1zM589 364h1v94h-1zM590 368h1v90h-1zM591 363h1v95h-1zM592 366h1v92h-1zM593 361h1v97h-1zM594 366h1v92h-1zM595 372h1v86h-1zM596 361h1v97h-1zM597 376h1v82h-1zM598 361h1v97h-1zM599 364h1v94h-1zM600 365h1v93h-1zM601 369h1v89h-1zM602 358h1v100h-1zM603 353h1v105h-1zM604 367h1v91h-1zM605 368h1v90h-1zM606 367h1v91h-1zM607 377h1v81h-1zM608 365h1v93h-1zM609 365h1v93h-1zM610 369h1v89h-1zM611 366h1v92h-1zM612 372h1v86h-1zM613 358h1v100h-1zM614 362h1v96h-1zM615 347h1v111h-1zM616 368h1v90h-1zM617 362h1v96h-1zM618 369h1v89h-1zM619 375h1v83h-1zM620 364h1v94h-1zM621 363h1v95h-1zM622 362h1v96h-1zM623 360h1v98h-1zM624 361h1v97h-1zM625 367h1v91h-1zM626 364h1v94h-1zM627 364h1v94h-1zM628 363h1v95h-1zM629 369h1v89h-1zM630 366h1v92h-1zM631 363h1v95h-1zM632 367h1v91h-1zM633 363h1v95h-1zM634 358h1v100h-1zM635 371h1v87h-1zM636 366h1v92h-1zM637 359h1v99h-1zM638 369h1v89h-1zM639 366h1v92h-1zM640 356h1v102h-1zM641 372h1v86h-1zM642 366h1v92h-1zM643 368h1v90h-1zM644 365h1v93h-1zM645 363h1v95h-1zM646 356h1v102h-1zM647 369h1v89h-1zM648 364h1v94h-1zM649 363h1v95h-1zM650 366h1v92h-1zM651 364h1v94h-1zM652 367h1v91h-1zM653 362h1v96h-1zM654 364h1v94h-1zM655 353h1v105h-1zM656 362h1v96h-1zM657 367h1v91h-1zM658 371h1v87h-1zM659 362h1v96h-1zM660 363h1v95h-1zM661 372h1v86h-1zM662 362h1v96h-1zM663 368h1v90h-1zM664 372h1v86h-1zM665 364h1v94h-1zM666 370h1v88h-1zM667 360h1v98h-1zM668 365h1v93h-1zM669 364h1v94h-1zM670 365h1v93h-1zM671 370h1v88h-1zM672 376h1v82h-1zM673 361h1v97h-1zM674 361h1v97h-1zM675 366h1v92h-1zM676 359h1v99h-1zM677 366h1v92h-1zM678 367h1v91h-1zM679 363h1v95h-1zM680 367h1v91h-1zM681 356h1v102h-1zM682 368h1v90h-1zM683 356h1v102h-1zM684 361h1v97h-1zM685 361h1v97h-1zM686 362h1v96h-1zM687 368h1v90h-1zM688 364h1v94h-1zM689 362h1v96h-1zM690 367h1v91h-1zM691 372h1v86h-1zM692 364h1v94h-1zM693 366h1v92h-1zM694 370h1v88h-1zM695 365h1v93h-1zM696 358h1v100h-1zM697 376h1v82h-1zM698 375h1v83h-1zM699 354h1v104h-1zM700 364h1v94h-1zM701 366h1v92h-1zM702 369h1v89h-1zM703 367h1v91h-1zM704 362h1v96h-1zM705 359h1v99h-1zM706 364h1v94h-1zM707 369h1v89h-1zM708 358h1v100h-1zM709 358h1v100h-1zM710 363h1v95h-1zM711 354h1v104h-1zM712 362h1v96h-1zM713 361h1v97h-1zM714 366h1v92h-1zM715 360h1v98h-1zM716 359h1v99h-1zM717 361h1v97h-1zM718 363h1v95h-1zM719 360h1v98h-1zM720 363h1v95h-1zM721 367h1v91h-1zM722 369h1v89h-1zM723 372h1v86h-1zM724 359h1v99h-1zM725 361h1v97h-1zM726 350h1v108h-1zM727 372h1v86h-1zM728 359h1v99h-1zM729 363h1v95h-1zM730 365h1v93h-1zM731 356h1v102h-1zM732 365h1v93h-1zM733 362h1v96h-1zM734 353h1v105h-1zM735 364h1v94h-1zM736 368h1v90h-1zM737 353h1v105h-1zM738 366h1v92h-1zM739 363h1v95h-1zM740 365h1v93h-1zM741 364h1v94h-1zM742 369h1v89h-1zM743 361h1v97h-1zM744 366h1v92h-1zM745 360h1v98h-1zM746 366h1v92h-1zM747 358h1v100h-1zM748 361h1v97h-1zM749 370h1v88h-1zM750 364h1v94h-1zM751 361h1v97h-1zM752 356h1v102h-1zM753 358h1v100h-1zM754 363h1v95h-1zM755 366h1v92h-1zM756 364h1v94h-1zM757 364h1v94h-1zM758 361h1v97h-1zM759 368h1v90h-1zM760 359h1v99h-1zM761 359h1v99h-1zM762 366h1v92h-1zM763 362h1v96h-1zM764 360h1v98h-1zM765 358h1v100h-1zM766 360h1v98h-1zM767 364h1v94h-1zM768 363h1v95h-1zM769 355h1v103h-1zM770 363h1v95h-1zM771 362h1v96h-1zM772 356h1v102h-1zM773 365h1v93h-1zM774 359h1v99h-1zM775 359h1v99h-1zM776 365h1v93h-1zM777 367h1v91h-1zM778 357h1v101h-1zM779 363h1v95h-1zM780 356h1v102h-1zM781 372h1v86h-1zM782 358h1v100h-1zM783 366h1v92h-1zM784 357h1v101h-1zM785 364h1v94h-1zM786 371h1v87h-1zM787 347h1v111h-1zM788 358h1v100h-1zM789 363h1v95h-1zM790 360h1v98h-1zM791 357h1v101h-1zM792 371h1v87h-1zM793 360h1v98h-1zM794 352h1v106h-1zM795 364h1v94h-1zM796 351h1v107h-1zM797 365h1v93h-1zM798 357h1v101h-1zM799 360h1v98h-1zM800 366h1v92h-1zM801 360h1v98h-1zM802 353h1v105h-1zM803 351h1v107h-1zM804 365h1v93h-1zM805 363h1v95h-1zM806 355h1v103h-1zM807 364h1v94h-1zM808 362h1v96h-1zM809 362h1v96h-1zM810 348h1v110h-1zM811 358h1v100h-1zM812 364h1v94h-1zM813 363h1v95h-1zM814 363h1v95h-1zM815 347h1v111h-1zM816 360h1v98h-1zM817 361h1v97h-1zM818 372h1v86h-1zM819 354h1v104h-1zM820 357h1v101h-1zM821 359h1v99h-1zM822 363h1v95h-1zM823 356h1v102h-1zM824 364h1v94h-1zM825 355h1v103h-1zM826 360h1v98h-1zM827 356h1v102h-1zM828 359h1v99h-1zM829 355h1v103h-1zM830 350h1v108h-1zM831 364h1v94h-1zM832 360h1v98h-1zM833 355h1v103h-1zM834 359h1v99h-1zM835 363h1v95h-1zM836 353h1v105h-1zM837 357h1v101h-1zM838 361h1v97h-1z"/>
<path fill="#cc0000" d="M588 361h3v3h-3zM589 362v1h1v-1zM511 343h3v3h-3zM512 344v1h1v-1zM834 340h3v3h-3zM835 341v1h1v-1zM509 363h3v3h-3zM510 364v1h1v-1zM689 357h3v3h-3zM690 358v1h1v-1zM796 330h3v3h-3zM797 331v1h1v-1zM646 361h3v3h-3zM647 362v1h1v-1zM822 343h3v3h-3zM823 344v1h1v-1zM707 359h3v3h-3zM708 360v1h1v-1zM689 360h3v3h-3zM690 361v1h1v-1zM714 353h3v3h-3zM715 354v1h1v-1zM581 345h3v3h-3zM582 346v1h1v-1zM740 366h3v3h-3zM741 367v1h1v-1zM728 368h3v3h-3zM729 369v1h1v-1zM724 337h3v3h-3zM725 338v1h1v-1zM581 364h3v3h-3zM582 365v1h1v-1zM524 353h3v3h-3zM525 354v1h1v-1zM555 360h3v3h-3zM556 361v1h1v-1zM716 356h3v3h-3zM717 357v1h1v-1zM748 364h3v3h-3zM749 365v1h1v-1zM815 367h3v3h-3zM816 368v1h1v-1zM556 344h3v3h-3zM557 345v1h1v-1zM751 354h3v3h-3zM752 355v1h1v-1zM530 350h3v3h-3zM531 351v1h1v-1zM683 364h3v3h-3zM684 365v1h1v-1zM824 356h3v3h-3zM825 357v1h1v-1zM523 369h3v3h-3zM524 370v1h1v-1zM804 363h3v3h-3zM805 364v1h1v-1zM589 335h3v3h-3zM590 336v1h1v-1zM557 349h3v3h-3zM558 350v1h1v-1zM574 369h3v3h-3zM575 370v1h1v-1zM603 355h3v3h-3zM604 356v1h1v-1zM619 365h3v3h-3zM620 366v1h1v-1zM571 360h3v3h-3zM572 361v1h1v-1zM723 346h3v3h-3zM724 347v1h1v-1zM563 371h3v3h-3zM564 372v1h1v-1zM735 319h3v3h-3zM736 320v1h1v-1zM596 349h3v3h-3zM597 350v1h1v-1zM611 357h3v3h-3zM612 358v1h1v-1zM653 363h3v3h-3zM654 364v1h1v-1zM696 362h3v3h-3zM697 363v1h1v-1zM572 361h3v3h-3zM573 362v1h1v-1zM657 360h3v3h-3zM658 361v1h1v-1zM682 355h3v3h-3zM683 356v1h1v-1zM548 341h3v3h-3zM549 342v1h1v-1zM761 332h3v3h-3zM762 333v1h1v-1zM721 359h3v3h-3zM722 360v1h1v-1zM774 338h3v3h-3zM775 339v1h1v-1zM543 368h3v3h-3zM544 369v1h1v-1zM619 344h3v3h-3zM620 345v1h1v-1zM691 371h3v3h-3zM692 372v1h1v-1zM680 366h3v3h-3zM681 367v1h1v-1zM785 307h3v3h-3zM786 308v1h1v-1zM564 350h3v3h-3zM565 351v1h1v-1zM716 345h3v3h-3zM717 346v1h1v-1zM607 357h3v3h-3zM608 358v1h1v-1zM514 342h3v3h-3zM515 343v1h1v-1zM641 366h3v3h-3zM642 367v1h1v-1zM817 353h3v3h-3zM818 354v1h1v-1zM789 330h3v3h-3zM790 331v1h1v-1zM490 354h3v3h-3zM491 355v1h1v-1zM507 369h3v3h-3zM508 370v1h1v-1zM810 351h3v3h-3zM811 352v1h1v-1zM711 355h3v3h-3zM712 356v1h1v-1zM514 363h3v3h-3zM515 364v1h1v-1zM557 345h3v3h-3zM558 346v1h1v-1zM513 370h3v3h-3zM514 371v1h1v-1zM501 348h3v3h-3zM502 349v1h1v-1zM645 363h3v3h-3zM646 364v1h1v-1zM544 348h3v3h-3zM545 349v1h1v-1zM701 368h3v3h-3zM702 369v1h1v-1zM788 365h3v3h-3zM789 366v1h1v-1zM677 362h3v3h-3zM678 363v1h1v-1zM809 362h3v3h-3zM810 363v1h1v-1zM497 362h3v3h-3zM498 363v1h1v-1zM614 366h3v3h-3zM615 367v1h1v-1zM522 351h3v3h-3zM523 352v1h1v-1zM816 349h3v3h-3zM817 350v1h1v-1zM628 349h3v3h-3zM629 350v1h1v-1zM695 352h3v3h-3zM696 353v1h1v-1zM518 324h3v3h-3zM519 325v1h1v-1zM820 348h3v3h-3zM821 349v1h1v-1zM794 330h3v3h-3zM795 331v1h1v-1zM820 343h3v3h-3zM821 344v1h1v-1zM755 357h3v3h-3zM756 358v1h1v-1zM742 370h3v3h-3zM743 371v1h1v-1zM512 329h3v3h-3zM513 330v1h1v-1zM521 352h3v3h-3zM522 353v1h1v-1zM611 368h3v3h-3zM612 369v1h1v-1zM571 340h3v3h-3zM572 341v1h1v-1zM496 360h3v3h-3zM497 361v1h1v-1zM803 322h3v3h-3zM804 323v1h1v-1zM562 357h3v3h-3zM563 358v1h1v-1zM701 363h3v3h-3zM702 364v1h1v-1zM749 344h3v3h-3zM750 345v1h1v-1zM821 344h3v3h-3zM822 345v1h1v-1zM579 344h3v3h-3zM580 345v1h1v-1zM750 364h3v3h-3zM751 365v1h1v-1zM514 356h3v3h-3zM515 357v1h1v-1zM734 370h3v3h-3zM735 371v1h1v-1zM713 369h3v3h-3zM714 370v1h1v-1zM728 345h3v3h-3zM729 346v1h1v-1zM579 358h3v3h-3zM580 359v1h1v-1zM605 356h3v3h-3zM606 357v1h1v-1zM819 366h3v3h-3zM820 367v1h1v-1zM509 342h3v3h-3zM510 343v1h1v-1zM624 343h3v3h-3zM625 344v1h1v-1zM516 369h3v3h-3zM517 370v1h1v-1zM713 346h3v3h-3zM714 347v1h1v-1zM757 353h3v3h-3zM758 354v1h1v-1zM601 369h3v3h-3zM602 370v1h1v-1zM533 369h3v3h-3zM534 370v1h1v-1zM623 370h3v3h-3zM624 371v1h1v-1zM610 365h3v3h-3zM611 366v1h1v-1zM571 361h3v3h-3zM572 362v1h1v-1zM657 365h3v3h-3zM658 366v1h1v-1zM797 349h3v3h-3zM798 350v1h1v-1zM612 344h3v3h-3zM613 345v1h1v-1zM830 339h3v3h-3zM831 340v1h1v-1zM764 332h3v3h-3zM765 333v1h1v-1zM493 365h3v3h-3zM494 366v1h1v-1zM503 342h3v3h-3zM504 343v1h1v-1zM782 356h3v3h-3zM783 357v1h1v-1zM647 367h3v3h-3zM648 368v1h1v-1zM789 349h3v3h-3zM790 350v1h1v-1zM529 361h3v3h-3zM530 362v1h1v-1zM506 367h3v3h-3zM507 368v1h1v-1zM503 351h3v3h-3zM504 352v1h1v-1zM572 354h3v3h-3zM573 355v1h1v-1zM666 341h3v3h-3zM667 342v1h1v-1zM505 368h3v3h-3zM506 369v1h1v-1zM511 353h3v3h-3zM512 354v1h1v-1zM511 350h3v3h-3zM512 351v1h1v-1zM524 371h3v3h-3zM525 372v1h1v-1zM792 361h3v3h-3zM793 362v1h1v-1zM676 356h3v3h-3zM677 357v1h1v-1zM763 322h3v3h-3zM764 323v1h1v-1zM830 329h3v3h-3zM831 330v1h1v-1zM686 356h3v3h-3zM687 357v1h1v-1zM544 372h3v3h-3zM545 373v1h1v-1zM507 359h3v3h-3zM508 360v1h1v-1zM507 330h3v3h-3zM508 331v1h1v-1zM814 353h3v3h-3zM815 354v1h1v-1zM534 359h3v3h-3zM535 360v1h1v-1zM637 347h3v3h-3zM638 348v1h1v-1zM734 363h3v3h-3zM735 364v1h1v-1zM820 361h3v3h-3zM821 362v1h1v-1zM594 367h3v3h-3zM595 368v1h1v-1zM623 355h3v3h-3zM624 356v1h1v-1zM500 345h3v3h-3zM501 346v1h1v-1zM514 335h3v3h-3zM515 336v1h1v-1zM678 343h3v3h-3zM679 344v1h1v-1zM798 349h3v3h-3zM799 350v1h1v-1zM747 354h3v3h-3zM748 355v1h1v-1zM505 370h3v3h-3zM506 371v1h1v-1zM701 348h3v3h-3zM702 349v1h1v-1zM540 367h3v3h-3zM541 368v1h1v-1zM667 366h3v3h-3zM668 367v1h1v-1zM779 367h3v3h-3zM780 368v1h1v-1zM600 364h3v3h-3zM601 365v1h1v-1zM784 332h3v3h-3zM785 333v1h1v-1zM637 372h3v3h-3zM638 373v1h1v-1zM593 371h3v3h-3zM594 372v1h1v-1zM637 368h3v3h-3zM638 369v1h1v-1zM492 317h3v3h-3zM493 318v1h1v-1zM668 349h3v3h-3zM669 350v1h1v-1zM584 371h3v3h-3zM585 372v1h1v-1zM743 328h3v3h-3zM744 329v1h1v-1zM753 342h3v3h-3zM754 343v1h1v-1zM623 362h3v3h-3zM624 363v1h1v-1zM599 366h3v3h-3zM600 367v1h1v-1zM608 362h3v3h-3zM609 363v1h1v-1zM815 367h3v3h-3zM816 368v1h1v-1zM531 311h3v3h-3zM532 312v1h1v-1zM777 365h3v3h-3zM778 366v1h1v-1zM543 359h3v3h-3zM544 360v1h1v-1zM695 358h3v3h-3zM696 359v1h1v-1zM692 346h3v3h-3zM693 347v1h1v-1zM706 351h3v3h-3zM707 352v1h1v-1zM820 353h3v3h-3zM821 354v1h1v-1zM624 370h3v3h-3zM625 371v1h1v-1zM709 352h3v3h-3zM710 353v1h1v-1zM684 358h3v3h-3zM685 359v1h1v-1zM812 365h3v3h-3zM813 366v1h1v-1zM762 347h3v3h-3zM763 348v1h1v-1zM794 367h3v3h-3zM795 368v1h1v-1zM820 333h3v3h-3zM821 334v1h1v-1zM507 362h3v3h-3zM508 363v1h1v-1zM569 358h3v3h-3zM570 359v1h1v-1zM720 354h3v3h-3zM721 355v1h1v-1zM576 344h3v3h-3zM577 345v1h1v-1zM727 339h3v3h-3zM728 340v1h1v-1zM786 355h3v3h-3zM787 356v1h1v-1zM608 356h3v3h-3zM609 357v1h1v-1zM611 356h3v3h-3zM612 357v1h1v-1zM749 364h3v3h-3zM750 365v1h1v-1zM806 351h3v3h-3zM807 352v1h1v-1zM569 363h3v3h-3zM570 364v1h1v-1zM657 319h3v3h-3zM658 320v1h1v-1zM798 356h3v3h-3zM799 357v1h1v-1zM657 370h3v3h-3zM658 371v1h1v-1zM586 369h3v3h-3zM587 370v1h1v-1zM542 322h3v3h-3zM543 323v1h1v-1zM574 363h3v3h-3zM575 364v1h1v-1zM686 370h3v3h-3zM687 371v1h1v-1zM567 337h3v3h-3zM568 338v1h1v-1zM642 368h3v3h-3zM643 369v1h1v-1zM712 370h3v3h-3zM713 371v1h1v-1zM544 362h3v3h-3zM545 363v1h1v-1zM633 367h3v3h-3zM634 368v1h1v-1zM507 353h3v3h-3zM508 354v1h1v-1zM496 343h3v3h-3zM497 344v1h1v-1zM603 351h3v3h-3zM604 352v1h1v-1zM746 353h3v3h-3zM747 354v1h1v-1zM501 370h3v3h-3zM502 371v1h1v-1zM562 371h3v3h-3zM563 372v1h1v-1zM492 339h3v3h-3zM493 340v1h1v-1zM614 354h3v3h-3zM615 355v1h1v-1zM783 357h3v3h-3zM784 358v1h1v-1zM790 368h3v3h-3zM791 369v1h1v-1zM607 351h3v3h-3zM608 352v1h1v-1zM831 359h3v3h-3zM832 360v1h1v-1zM818 326h3v3h-3zM819 327v1h1v-1zM788 350h3v3h-3zM789 351v1h1v-1zM818 343h3v3h-3zM819 344v1h1v-1zM553 355h3v3h-3zM554 356v1h1v-1zM811 362h3v3h-3zM812 363v1h1v-1zM540 360h3v3h-3zM541 361v1h1v-1zM694 363h3v3h-3zM695 364v1h1v-1zM812 345h3v3h-3zM813 346v1h1v-1zM737 338h3v3h-3zM738 339v1h1v-1zM723 332h3v3h-3zM724 333v1h1v-1zM755 365h3v3h-3zM756 366v1h1v-1zM835 344h3v3h-3zM836 345v1h1v-1zM825 332h3v3h-3zM826 333v1h1v-1zM657 369h3v3h-3zM658 370v1h1v-1zM740 351h3v3h-3zM741 352v1h1v-1zM544 348h3v3h-3zM545 349v1h1v-1zM572 366h3v3h-3zM573 367v1h1v-1zM592 363h3v3h-3zM593 364v1h1v-1zM784 367h3v3h-3zM785 368v1h1v-1zM723 340h3v3h-3zM724 341v1h1v-1zM752 362h3v3h-3zM753 363v1h1v-1zM498 348h3v3h-3zM499 349v1h1v-1zM757 341h3v3h-3zM758 342v1h1v-1zM665 331h3v3h-3zM666 332v1h1v-1zM597 346h3v3h-3zM598 347v1h1v-1zM584 346h3v3h-3zM585 347v1h1v-1zM552 351h3v3h-3zM553 352v1h1v-1zM804 363h3v3h-3zM805 364v1h1v-1zM630 367h3v3h-3zM631 368v1h1v-1zM685 369h3v3h-3zM686 370v1h1v-1zM704 370h3v3h-3zM705 371v1h1v-1zM705 351h3v3h-3zM706 352v1h1v-1zM787 346h3v3h-3zM788 347v1h1v-1zM625 359h3v3h-3zM626 360v1h1v-1zM695 361h3v3h-3zM696 362v1h1v-1zM759 306h3v3h-3zM760 307v1h1v-1zM690 361h3v3h-3zM691 362v1h1v-1zM726 368h3v3h-3zM727 369v1h1v-1zM525 362h3v3h-3zM526 363v1h1v-1zM814 357h3v3h-3zM815 358v1h1v-1zM605 345h3v3h-3zM606 346v1h1v-1zM564 355h3v3h-3zM565 356v1h1v-1zM701 349h3v3h-3zM702 350v1h1v-1zM729 337h3v3h-3zM730 338v1h1v-1zM822 366h3v3h-3zM823 367v1h1v-1zM554 368h3v3h-3zM555 369v1h1v-1zM607 350h3v3h-3zM608 351v1h1v-1zM626 363h3v3h-3zM627 364v1h1v-1zM708 342h3v3h-3zM709 343v1h1v-1zM585 336h3v3h-3zM586 337v1h1v-1zM633 368h3v3h-3zM634 369v1h1v-1zM673 371h3v3h-3zM674 372v1h1v-1zM735 353h3v3h-3zM736 354v1h1v-1zM738 345h3v3h-3zM739 346v1h1v-1zM827 354h3v3h-3zM828 355v1h1v-1zM675 362h3v3h-3zM676 363v1h1v-1zM687 358h3v3h-3zM688 359v1h1v-1zM519 350h3v3h-3zM520 351v1h1v-1zM656 359h3v3h-3zM657 360v1h1v-1zM561 354h3v3h-3zM562 355v1h1v-1zM788 365h3v3h-3zM789 366v1h1v-1zM497 364h3v3h-3zM498 365v1h1v-1zM526 361h3v3h-3zM527 362v1h1v-1zM825 359h3v3h-3zM826 360v1h1v-1zM786 342h3v3h-3zM787 343v1h1v-1zM563 364h3v3h-3zM564 365v1h1v-1zM721 361h3v3h-3zM722 362v1h1v-1zM667 369h3v3h-3zM668 370v1h1v-1zM696 359h3v3h-3zM697 360v1h1v-1zM763 348h3v3h-3zM764 349v1h1v-1zM801 331h3v3h-3zM802 332v1h1v-1zM536 351h3v3h-3zM537 352v1h1v-1zM815 330h3v3h-3zM816 331v1h1v-1zM642 362h3v3h-3zM643 363v1h1v-1zM761 340h3v3h-3zM762 341v1h1v-1zM530 371h3v3h-3zM531 372v1h1v-1zM549 351h3v3h-3zM550 352v1h1v-1zM774 353h3v3h-3zM775 354v1h1v-1zM561 358h3v3h-3zM562 359v1h1v-1zM732 364h3v3h-3zM733 365v1h1v-1zM729 370h3v3h-3zM730 371v1h1v-1zM563 367h3v3h-3zM564 368v1h1v-1zM574 358h3v3h-3zM575 359v1h1v-1zM766 343h3v3h-3zM767 344v1h1v-1zM572 353h3v3h-3zM573 354v1h1v-1zM654 347h3v3h-3zM655 348v1h1v-1zM830 361h3v3h-3zM831 362v1h1v-1zM641 362h3v3h-3zM642 363v1h1v-1zM704 355h3v3h-3zM705 356v1h1v-1zM528 364h3v3h-3zM529 365v1h1v-1zM821 349h3v3h-3zM822 350v1h1v-1zM504 366h3v3h-3zM505 367v1h1v-1zM659 371h3v3h-3zM660 372v1h1v-1zM538 349h3v3h-3zM539 350v1h1v-1zM563 370h3v3h-3zM564 371v1h1v-1zM507 367h3v3h-3zM508 368v1h1v-1zM554 352h3v3h-3zM555 353v1h1v-1zM663 348h3v3h-3zM664 349v1h1v-1zM664 356h3v3h-3zM665 357v1h1v-1zM732 366h3v3h-3zM733 367v1h1v-1zM597 347h3v3h-3zM598 348v1h1v-1zM635 353h3v3h-3zM636 354v1h1v-1zM773 360h3v3h-3zM774 361v1h1v-1zM516 364h3v3h-3zM517 365v1h1v-1zM742 355h3v3h-3zM743 356v1h1v-1zM696 343h3v3h-3zM697 344v1h1v-1zM749 320h3v3h-3zM750 321v1h1v-1zM666 343h3v3h-3zM667 344v1h1v-1zM550 367h3v3h-3zM551 368v1h1v-1zM659 361h3v3h-3zM660 362v1h1v-1zM555 342h3v3h-3zM556 343v1h1v-1zM790 360h3v3h-3zM791 361v1h1v-1zM510 371h3v3h-3zM511 372v1h1v-1zM694 365h3v3h-3zM695 366v1h1v-1zM769 328h3v3h-3zM770 329v1h1v-1zM783 352h3v3h-3zM784 353v1h1v-1zM493 367h3v3h-3zM494 368v1h1v-1zM513 355h3v3h-3zM514 356v1h1v-1zM801 326h3v3h-3zM802 327v1h1v-1zM826 344h3v3h-3zM827 345v1h1v-1zM768 360h3v3h-3zM769 361v1h1v-1zM803 359h3v3h-3zM804 360v1h1v-1zM834 358h3v3h-3zM835 359v1h1v-1zM795 362h3v3h-3zM796 363v1h1v-1zM510 366h3v3h-3zM511 367v1h1v-1zM831 347h3v3h-3zM832 348v1h1v-1zM579 351h3v3h-3zM580 352v1h1v-1zM541 351h3v3h-3zM542 352v1h1v-1zM705 337h3v3h-3zM706 338v1h1v-1zM541 347h3v3h-3zM542 348v1h1v-1zM678 357h3v3h-3zM679 358v1h1v-1zM561 366h3v3h-3zM562 367v1h1v-1zM622 347h3v3h-3zM623 348v1h1v-1zM644 370h3v3h-3zM645 371v1h1v-1zM500 367h3v3h-3zM501 368v1h1v-1zM710 348h3v3h-3zM711 349v1h1v-1zM517 361h3v3h-3zM518 362v1h1v-1zM744 365h3v3h-3zM745 366v1h1v-1zM550 370h3v3h-3zM551 371v1h1v-1zM705 332h3v3h-3zM706 333v1h1v-1zM718 351h3v3h-3zM719 352v1h1v-1zM524 352h3v3h-3zM525 353v1h1v-1zM793 366h3v3h-3zM794 367v1h1v-1zM827 344h3v3h-3zM828 345v1h1v-1zM701 369h3v3h-3zM702 370v1h1v-1zM770 346h3v3h-3zM771 347v1h1v-1zM598 355h3v3h-3zM599 356v1h1v-1zM567 357h3v3h-3zM568 358v1h1v-1zM494 357h3v3h-3zM495 358v1h1v-1zM832 329h3v3h-3zM833 330v1h1v-1zM535 336h3v3h-3zM536 337v1h1v-1zM601 365h3v3h-3zM602 366v1h1v-1zM499 364h3v3h-3zM500 365v1h1v-1zM631 369h3v3h-3zM632 370v1h1v-1zM585 357h3v3h-3zM586 358v1h1v-1zM515 350h3v3h-3zM516 351v1h1v-1zM564 347h3v3h-3zM565 348v1h1v-1zM533 365h3v3h-3zM534 366v1h1v-1zM745 345h3v3h-3zM746 346v1h1v-1zM725 351h3v3h-3zM726 352v1h1v-1zM516 335h3v3h-3zM517 336v1h1v-1zM506 369h3v3h-3zM507 370v1h1v-1zM823 366h3v3h-3zM824 367v1h1v-1zM806 352h3v3h-3zM807 353v1h1v-1zM797 359h3v3h-3zM798 360v1h1v-1zM574 335h3v3h-3zM575 336v1h1v-1zM801 358h3v3h-3zM802 359v1h1v-1zM520 352h3v3h-3zM521 353v1h1v-1zM714 327h3v3h-3zM715 328v1h1v-1zM730 366h3v3h-3zM731 367v1h1v-1zM549 362h3v3h-3zM550 363v1h1v-1zM675 361h3v3h-3zM676 362v1h1v-1zM703 368h3v3h-3zM704 369v1h1v-1zM734 344h3v3h-3zM735 345v1h1v-1zM629 349h3v3h-3zM630 350v1h1v-1zM780 360h3v3h-3zM781 361v1h1v-1zM808 353h3v3h-3zM809 354v1h1v-1zM823 356h3v3h-3zM824 357v1h1v-1zM660 336h3v3h-3zM661 337v1h1v-1zM800 367h3v3h-3zM801 368v1h1v-1zM567 369h3v3h-3zM568 370v1h1v-1zM797 355h3v3h-3zM798 356v1h1v-1zM616 349h3v3h-3zM617 350v1h1v-1zM682 357h3v3h-3zM683 358v1h1v-1zM609 359h3v3h-3zM610 360v1h1v-1zM721 371h3v3h-3zM722 372v1h1v-1zM624 371h3v3h-3zM625 372v1h1v-1zM627 349h3v3h-3zM628 350v1h1v-1zM511 360h3v3h-3zM512 361v1h1v-1zM637 354h3v3h-3zM638 355v1h1v-1zM782 337h3v3h-3zM783 338v1h1v-1zM565 366h3v3h-3zM566 367v1h1v-1zM770 330h3v3h-3zM771 331v1h1v-1zM745 365h3v3h-3zM746 366v1h1v-1zM773 362h3v3h-3zM774 363v1h1v-1zM738 366h3v3h-3zM739 367v1h1v-1zM609 359h3v3h-3zM610 360v1h1v-1zM648 348h3v3h-3zM649 349v1h1v-1zM728 352h3v3h-3zM729 353v1h1v-1zM595 348h3v3h-3zM596 349v1h1v-1zM494 360h3v3h-3zM495 361v1h1v-1zM687 364h3v3h-3zM688 365v1h1v-1zM671 370h3v3h-3zM672 371v1h1v-1zM522 369h3v3h-3zM523 370v1h1v-1zM622 346h3v3h-3zM623 347v1h1v-1zM757 359h3v3h-3zM758 360v1h1v-1zM593 351h3v3h-3zM594 352v1h1v-1zM586 370h3v3h-3zM587 371v1h1v-1zM638 363h3v3h-3zM639 364v1h1v-1zM675 355h3v3h-3zM676 356v1h1v-1zM754 361h3v3h-3zM755 362v1h1v-1zM566 371h3v3h-3zM567 372v1h1v-1zM742 325h3v3h-3zM743 326v1h1v-1zM681 359h3v3h-3zM682 360v1h1v-1zM727 356h3v3h-3zM728 357v1h1v-1zM531 357h3v3h-3zM532 358v1h1v-1zM666 350h3v3h-3zM667 351v1h1v-1zM633 368h3v3h-3zM634 369v1h1v-1zM507 372h3v3h-3zM508 373v1h1v-1zM594 332h3v3h-3zM595 333v1h1v-1zM738 368h3v3h-3zM739 369v1h1v-1zM790 354h3v3h-3zM791 355v1h1v-1zM633 366h3v3h-3zM634 367v1h1v-1zM708 354h3v3h-3zM709 355v1h1v-1zM793 355h3v3h-3zM794 356v1h1v-1zM801 353h3v3h-3zM802 354v1h1v-1zM509 369h3v3h-3zM510 370v1h1v-1zM663 368h3v3h-3zM664 369v1h1v-1zM532 360h3v3h-3zM533 361v1h1v-1zM504 348h3v3h-3zM505 349v1h1v-1zM724 363h3v3h-3zM725 364v1h1v-1zM739 329h3v3h-3zM740 330v1h1v-1zM522 358h3v3h-3zM523 359v1h1v-1zM796 339h3v3h-3zM797 340v1h1v-1zM536 337h3v3h-3zM537 338v1h1v-1zM621 366h3v3h-3zM622 367v1h1v-1zM535 359h3v3h-3zM536 360v1h1v-1zM832 353h3v3h-3zM833 354v1h1v-1zM571 371h3v3h-3zM572 372v1h1v-1zM679 312h3v3h-3zM680 313v1h1v-1zM603 359h3v3h-3zM604 360v1h1v-1zM578 357h3v3h-3zM579 358v1h1v-1zM670 368h3v3h-3zM671 369v1h1v-1zM520 336h3v3h-3zM521 337v1h1v-1zM514 347h3v3h-3zM515 348v1h1v-1zM622 365h3v3h-3zM623 366v1h1v-1zM821 336h3v3h-3zM822 337v1h1v-1zM737 360h3v3h-3zM738 361v1h1v-1zM492 368h3v3h-3zM493 369v1h1v-1zM591 365h3v3h-3zM592 366v1h1v-1zM792 353h3v3h-3zM793 354v1h1v-1zM715 371h3v3h-3zM716 372v1h1v-1zM655 363h3v3h-3zM656 364v1h1v-1zM680 372h3v3h-3zM681 373v1h1v-1zM736 360h3v3h-3zM737 361v1h1v-1zM684 365h3v3h-3zM685 366v1h1v-1zM563 359h3v3h-3zM564 360v1h1v-1zM496 329h3v3h-3zM497 330v1h1v-1zM508 363h3v3h-3zM509 364v1h1v-1zM570 359h3v3h-3zM571 360v1h1v-1zM806 361h3v3h-3zM807 362v1h1v-1zM681 364h3v3h-3zM682 365v1h1v-1zM718 364h3v3h-3zM719 365v1h1v-1zM539 354h3v3h-3zM540 355v1h1v-1zM501 363h3v3h-3zM502 364v1h1v-1zM811 319h3v3h-3zM812 320v1h1v-1zM655 348h3v3h-3zM656 349v1h1v-1zM609 344h3v3h-3zM610 345v1h1v-1zM563 368h3v3h-3zM564 369v1h1v-1zM659 371h3v3h-3zM660 372v1h1v-1zM721 364h3v3h-3zM722 365v1h1v-1zM773 352h3v3h-3zM774 353v1h1v-1zM566 358h3v3h-3zM567 359v1h1v-1zM626 359h3v3h-3zM627 360v1h1v-1zM503 365h3v3h-3zM504 366v1h1v-1zM628 357h3v3h-3zM629 358v1h1v-1zM575 365h3v3h-3zM576 366v1h1v-1zM623 355h3v3h-3zM624 356v1h1v-1zM737 369h3v3h-3zM738 370v1h1v-1zM548 358h3v3h-3zM549 359v1h1v-1zM813 347h3v3h-3zM814 348v1h1v-1zM832 343h3v3h-3zM833 344v1h1v-1zM636 360h3v3h-3zM637 361v1h1v-1zM551 371h3v3h-3zM552 372v1h1v-1zM676 359h3v3h-3zM677 360v1h1v-1zM711 301h3v3h-3zM712 302v1h1v-1zM611 368h3v3h-3zM612 369v1h1v-1zM539 356h3v3h-3zM540 357v1h1v-1zM573 359h3v3h-3zM574 360v1h1v-1zM519 345h3v3h-3zM520 346v1h1v-1zM563 324h3v3h-3zM564 325v1h1v-1zM817 331h3v3h-3zM818 332v1h1v-1zM664 368h3v3h-3zM665 369v1h1v-1zM751 369h3v3h-3zM752 370v1h1v-1zM759 368h3v3h-3zM760 369v1h1v-1zM636 364h3v3h-3zM637 365v1h1v-1zM699 352h3v3h-3zM700 353v1h1v-1zM601 370h3v3h-3zM602 371v1h1v-1zM582 360h3v3h-3zM583 361v1h1v-1zM757 365h3v3h-3zM758 366v1h1v-1zM590 341h3v3h-3zM591 342v1h1v-1zM797 360h3v3h-3zM798 361v1h1v-1zM801 363h3v3h-3zM802 364v1h1v-1zM743 369h3v3h-3zM744 370v1h1v-1zM560 360h3v3h-3zM561 361v1h1v-1zM803 354h3v3h-3zM804 355v1h1v-1zM588 347h3v3h-3zM589 348v1h1v-1zM788 367h3v3h-3zM789 368v1h1v-1zM756 367h3v3h-3zM757 368v1h1v-1zM698 348h3v3h-3zM699 349v1h1v-1zM755 332h3v3h-3zM756 333v1h1v-1zM667 352h3v3h-3zM668 353v1h1v-1zM742 337h3v3h-3zM743 338v1h1v-1zM536 328h3v3h-3zM537 329v1h1v-1zM734 366h3v3h-3zM735 367v1h1v-1zM558 361h3v3h-3zM559 362v1h1v-1zM585 361h3v3h-3zM586 362v1h1v-1zM778 359h3v3h-3zM779 360v1h1v-1zM573 355h3v3h-3zM574 356v1h1v-1zM680 337h3v3h-3zM681 338v1h1v-1zM672 354h3v3h-3zM673 355v1h1v-1zM756 322h3v3h-3zM757 323v1h1v-1zM526 350h3v3h-3zM527 351v1h1v-1zM551 363h3v3h-3zM552 364v1h1v-1zM654 360h3v3h-3zM655 361v1h1v-1zM685 334h3v3h-3zM686 335v1h1v-1zM639 352h3v3h-3zM640 353v1h1v-1zM545 350h3v3h-3zM546 351v1h1v-1zM752 363h3v3h-3zM753 364v1h1v-1zM503 348h3v3h-3zM504 349v1h1v-1zM500 367h3v3h-3zM501 368v1h1v-1zM614 358h3v3h-3zM615 359v1h1v-1zM583 369h3v3h-3zM584 370v1h1v-1zM575 360h3v3h-3zM576 361v1h1v-1zM505 363h3v3h-3zM506 364v1h1v-1zM499 347h3v3h-3zM500 348v1h1v-1zM589 354h3v3h-3zM590 355v1h1v-1zM623 345h3v3h-3zM624 346v1h1v-1zM785 365h3v3h-3zM786 366v1h1v-1zM727 340h3v3h-3zM728 341v1h1v-1zM542 368h3v3h-3zM543 369v1h1v-1zM669 350h3v3h-3zM670 351v1h1v-1zM513 349h3v3h-3zM514 350v1h1v-1zM629 355h3v3h-3zM630 356v1h1v-1zM746 354h3v3h-3zM747 355v1h1v-1zM633 364h3v3h-3zM634 365v1h1v-1zM560 366h3v3h-3zM561 367v1h1v-1zM767 336h3v3h-3zM768 337v1h1v-1zM565 350h3v3h-3zM566 351v1h1v-1zM832 336h3v3h-3zM833 337v1h1v-1zM574 357h3v3h-3zM575 358v1h1v-1zM499 354h3v3h-3zM500 355v1h1v-1zM705 364h3v3h-3zM706 365v1h1v-1zM795 355h3v3h-3zM796 356v1h1v-1zM692 351h3v3h-3zM693 352v1h1v-1zM516 369h3v3h-3zM517 370v1h1v-1zM613 354h3v3h-3zM614 355v1h1v-1zM661 364h3v3h-3zM662 365v1h1v-1zM778 331h3v3h-3zM779 332v1h1v-1zM654 357h3v3h-3zM655 358v1h1v-1zM517 336h3v3h-3zM518 337v1h1v-1zM656 322h3v3h-3zM657 323v1h1v-1zM670 367h3v3h-3zM671 368v1h1v-1zM617 352h3v3h-3zM618 353v1h1v-1zM495 351h3v3h-3zM496 352v1h1v-1zM676 362h3v3h-3zM677 363v1h1v-1zM656 364h3v3h-3zM657 365v1h1v-1zM711 362h3v3h-3zM712 363v1h1v-1zM605 344h3v3h-3zM606 345v1h1v-1zM561 354h3v3h-3zM562 355v1h1v-1zM722 361h3v3h-3zM723 362v1h1v-1zM814 313h3v3h-3zM815 314v1h1v-1zM510 356h3v3h-3zM511 357v1h1v-1zM507 353h3v3h-3zM508 354v1h1v-1zM809 346h3v3h-3zM810 347v1h1v-1zM629 347h3v3h-3zM630 348v1h1v-1zM508 346h3v3h-3zM509 347v1h1v-1zM808 359h3v3h-3zM809 360v1h1v-1zM496 366h3v3h-3zM497 367v1h1v-1zM712 371h3v3h-3zM713 372v1h1v-1zM547 366h3v3h-3zM548 367v1h1v-1zM646 365h3v3h-3zM647 366v1h1v-1zM520 362h3v3h-3zM521 363v1h1v-1zM794 324h3v3h-3zM795 325v1h1v-1zM627 361h3v3h-3zM628 362v1h1v-1zM533 348h3v3h-3zM534 349v1h1v-1zM565 367h3v3h-3zM566 368v1h1v-1zM715 364h3v3h-3zM716 365v1h1v-1zM640 365h3v3h-3zM641 366v1h1v-1zM698 358h3v3h-3zM699 359v1h1v-1zM534 365h3v3h-3zM535 366v1h1v-1zM769 364h3v3h-3zM770 365v1h1v-1zM781 347h3v3h-3zM782 348v1h1v-1zM603 364h3v3h-3zM604 365v1h1v-1zM677 361h3v3h-3zM678 362v1h1v-1zM725 358h3v3h-3zM726 359v1h1v-1zM734 360h3v3h-3zM735 361v1h1v-1zM730 369h3v3h-3zM731 370v1h1v-1zM660 367h3v3h-3zM661 368v1h1v-1zM603 363h3v3h-3zM604 364v1h1v-1zM789 345h3v3h-3zM790 346v1h1v-1zM692 353h3v3h-3zM693 354v1h1v-1zM612 371h3v3h-3zM613 372v1h1v-1zM655 350h3v3h-3zM656 351v1h1v-1zM635 364h3v3h-3zM636 365v1h1v-1zM600 362h3v3h-3zM601 363v1h1v-1zM571 339h3v3h-3zM572 340v1h1v-1zM772 332h3v3h-3zM773 333v1h1v-1zM715 355h3v3h-3zM716 356v1h1v-1zM826 348h3v3h-3zM827 349v1h1v-1zM715 364h3v3h-3zM716 365v1h1v-1zM671 371h3v3h-3zM672 372v1h1v-1zM605 362h3v3h-3zM606 363v1h1v-1zM569 346h3v3h-3zM570 347v1h1v-1zM561 357h3v3h-3zM562 358v1h1v-1zM835 358h3v3h-3zM836 359v1h1v-1zM631 346h3v3h-3zM632 347v1h1v-1zM755 337h3v3h-3zM756 338v1h1v-1zM733 348h3v3h-3zM734 349v1h1v-1zM627 365h3v3h-3zM628 366v1h1v-1zM555 341h3v3h-3zM556 342v1h1v-1zM701 371h3v3h-3zM702 372v1h1v-1zM771 367h3v3h-3zM772 368v1h1v-1zM789 353h3v3h-3zM790 354v1h1v-1zM782 355h3v3h-3zM783 356v1h1v-1zM566 342h3v3h-3zM567 343v1h1v-1zM808 350h3v3h-3zM809 351v1h1v-1zM800 338h3v3h-3zM801 339v1h1v-1zM724 346h3v3h-3zM725 347v1h1v-1zM637 369h3v3h-3zM638 370v1h1v-1zM690 356h3v3h-3zM691 357v1h1v-1zM759 351h3v3h-3zM760 352v1h1v-1zM654 365h3v3h-3zM655 366v1h1v-1zM493 363h3v3h-3zM494 364v1h1v-1zM745 332h3v3h-3zM746 333v1h1v-1zM684 360h3v3h-3zM685 361v1h1v-1zM645 368h3v3h-3zM646 369v1h1v-1zM564 354h3v3h-3zM565 355v1h1v-1zM608 364h3v3h-3zM609 365v1h1v-1zM535 364h3v3h-3zM536 365v1h1v-1zM801 351h3v3h-3zM802 352v1h1v-1zM614 359h3v3h-3zM615 360v1h1v-1zM708 368h3v3h-3zM709 369v1h1v-1zM495 357h3v3h-3zM496 358v1h1v-1zM744 368h3v3h-3zM745 369v1h1v-1zM643 342h3v3h-3zM644 343v1h1v-1zM765 353h3v3h-3zM766 354v1h1v-1zM807 343h3v3h-3zM808 344v1h1v-1zM754 369h3v3h-3zM755 370v1h1v-1zM710 357h3v3h-3zM711 358v1h1v-1zM794 356h3v3h-3zM795 357v1h1v-1zM669 369h3v3h-3zM670 370v1h1v-1zM524 371h3v3h-3zM525 372v1h1v-1zM758 367h3v3h-3zM759 368v1h1v-1zM746 350h3v3h-3zM747 351v1h1v-1zM695 345h3v3h-3zM696 346v1h1v-1zM568 335h3v3h-3zM569 336v1h1v-1zM586 349h3v3h-3zM587 350v1h1v-1zM715 366h3v3h-3zM716 367v1h1v-1zM809 346h3v3h-3zM810 347v1h1v-1zM761 354h3v3h-3zM762 355v1h1v-1zM537 364h3v3h-3zM538 365v1h1v-1zM528 357h3v3h-3zM529 358v1h1v-1zM649 362h3v3h-3zM650 363v1h1v-1zM640 371h3v3h-3zM641 372v1h1v-1zM665 346h3v3h-3zM666 347v1h1v-1zM705 317h3v3h-3zM706 318v1h1v-1zM813 358h3v3h-3zM814 359v1h1v-1zM751 356h3v3h-3zM752 357v1h1v-1zM596 359h3v3h-3zM597 360v1h1v-1zM583 372h3v3h-3zM584 373v1h1v-1zM520 353h3v3h-3zM521 354v1h1v-1zM670 352h3v3h-3zM671 353v1h1v-1zM781 340h3v3h-3zM782 341v1h1v-1zM511 371h3v3h-3zM512 372v1h1v-1zM700 371h3v3h-3zM701 372v1h1v-1zM773 369h3v3h-3zM774 370v1h1v-1zM492 355h3v3h-3zM493 356v1h1v-1zM540 362h3v3h-3zM541 363v1h1v-1zM790 363h3v3h-3zM791 364v1h1v-1zM579 372h3v3h-3zM580 373v1h1v-1zM744 367h3v3h-3zM745 368v1h1v-1zM821 341h3v3h-3zM822 342v1h1v-1zM762 358h3v3h-3zM763 359v1h1v-1zM591 371h3v3h-3zM592 372v1h1v-1zM700 363h3v3h-3zM701 364v1h1v-1zM755 363h3v3h-3zM756 364v1h1v-1zM750 363h3v3h-3zM751 364v1h1v-1zM577 366h3v3h-3zM578 367v1h1v-1zM757 347h3v3h-3zM758 348v1h1v-1zM710 370h3v3h-3zM711 371v1h1v-1zM521 354h3v3h-3zM522 355v1h1v-1zM786 344h3v3h-3zM787 345v1h1v-1zM655 363h3v3h-3zM656 364v1h1v-1zM631 360h3v3h-3zM632 361v1h1v-1zM576 344h3v3h-3zM577 345v1h1v-1zM788 362h3v3h-3zM789 363v1h1v-1zM522 359h3v3h-3zM523 360v1h1v-1zM687 354h3v3h-3zM688 355v1h1v-1zM500 332h3v3h-3zM501 333v1h1v-1zM788 354h3v3h-3zM789 355v1h1v-1zM512 346h3v3h-3zM513 347v1h1v-1zM617 362h3v3h-3zM618 363v1h1v-1zM604 328h3v3h-3zM605 329v1h1v-1zM578 359h3v3h-3zM579 360v1h1v-1zM651 332h3v3h-3zM652 333v1h1v-1zM723 369h3v3h-3zM724 370v1h1v-1zM645 359h3v3h-3zM646 360v1h1v-1zM743 363h3v3h-3zM744 364v1h1v-1zM524 371h3v3h-3zM525 372v1h1v-1zM789 348h3v3h-3zM790 349v1h1v-1zM603 355h3v3h-3zM604 356v1h1v-1zM738 360h3v3h-3zM739 361v1h1v-1zM501 368h3v3h-3zM502 369v1h1v-1zM578 358h3v3h-3zM579 359v1h1v-1zM577 364h3v3h-3zM578 365v1h1v-1zM638 362h3v3h-3zM639 363v1h1v-1zM692 363h3v3h-3zM693 364v1h1v-1zM763 365h3v3h-3zM764 366v1h1v-1zM687 357h3v3h-3zM688 358v1h1v-1zM553 347h3v3h-3zM554 348v1h1v-1zM706 363h3v3h-3zM707 364v1h1v-1zM615 355h3v3h-3zM616 356v1h1v-1zM688 366h3v3h-3zM689 367v1h1v-1zM611 357h3v3h-3zM612 358v1h1v-1zM713 343h3v3h-3zM714 344v1h1v-1zM664 366h3v3h-3zM665 367v1h1v-1zM569 371h3v3h-3zM570 372v1h1v-1zM590 361h3v3h-3zM591 362v1h1v-1zM628 338h3v3h-3zM629 339v1h1v-1zM774 359h3v3h-3zM775 360v1h1v-1zM716 336h3v3h-3zM717 337v1h1v-1zM612 365h3v3h-3zM613 366v1h1v-1zM571 363h3v3h-3zM572 364v1h1v-1zM697 362h3v3h-3zM698 363v1h1v-1zM682 354h3v3h-3zM683 355v1h1v-1zM642 353h3v3h-3zM643 354v1h1v-1zM733 356h3v3h-3zM734 357v1h1v-1zM721 371h3v3h-3zM722 372v1h1v-1zM835 345h3v3h-3zM836 346v1h1v-1zM623 349h3v3h-3zM624 350v1h1v-1zM795 346h3v3h-3zM796 347v1h1v-1zM678 356h3v3h-3zM679 357v1h1v-1zM763 369h3v3h-3zM764 370v1h1v-1zM598 345h3v3h-3zM599 346v1h1v-1zM554 365h3v3h-3zM555 366v1h1v-1zM752 362h3v3h-3zM753 363v1h1v-1zM536 357h3v3h-3zM537 358v1h1v-1zM687 368h3v3h-3zM688 369v1h1v-1zM504 358h3v3h-3zM505 359v1h1v-1zM649 350h3v3h-3zM650 351v1h1v-1zM497 365h3v3h-3zM498 366v1h1v-1zM580 367h3v3h-3zM581 368v1h1v-1zM608 359h3v3h-3zM609 360v1h1v-1zM545 345h3v3h-3zM546 346v1h1v-1zM524 354h3v3h-3zM525 355v1h1v-1zM746 363h3v3h-3zM747 364v1h1v-1zM642 361h3v3h-3zM643 362v1h1v-1zM535 342h3v3h-3zM536 343v1h1v-1zM605 363h3v3h-3zM606 364v1h1v-1zM694 336h3v3h-3zM695 337v1h1v-1zM634 348h3v3h-3zM635 349v1h1v-1zM727 340h3v3h-3zM728 341v1h1v-1zM811 338h3v3h-3zM812 339v1h1v-1zM557 345h3v3h-3zM558 346v1h1v-1zM631 363h3v3h-3zM632 364v1h1v-1zM829 349h3v3h-3zM830 350v1h1v-1zM669 368h3v3h-3zM670 369v1h1v-1zM726 368h3v3h-3zM727 369v1h1v-1zM617 352h3v3h-3zM618 353v1h1v-1zM811 367h3v3h-3zM812 368v1h1v-1zM540 368h3v3h-3zM541 369v1h1v-1zM801 359h3v3h-3zM802 360v1h1v-1zM602 371h3v3h-3zM603 372v1h1v-1zM510 366h3v3h-3zM511 367v1h1v-1zM801 361h3v3h-3zM802 362v1h1v-1zM645 361h3v3h-3zM646 362v1h1v-1zM569 368h3v3h-3zM570 369v1h1v-1zM649 368h3v3h-3zM650 369v1h1v-1zM812 359h3v3h-3zM813 360v1h1v-1zM606 362h3v3h-3zM607 363v1h1v-1zM781 344h3v3h-3zM782 345v1h1v-1zM712 371h3v3h-3zM713 372v1h1v-1zM833 359h3v3h-3zM834 360v1h1v-1zM490 355h3v3h-3zM491 356v1h1v-1zM547 355h3v3h-3zM548 356v1h1v-1zM636 342h3v3h-3zM637 343v1h1v-1zM511 353h3v3h-3zM512 354v1h1v-1zM514 353h3v3h-3zM515 354v1h1v-1zM615 370h3v3h-3zM616 371v1h1v-1zM653 367h3v3h-3zM654 368v1h1v-1zM597 369h3v3h-3zM598 370v1h1v-1zM534 354h3v3h-3zM535 355v1h1v-1zM703 365h3v3h-3zM704 366v1h1v-1zM805 349h3v3h-3zM806 350v1h1v-1zM603 370h3v3h-3zM604 371v1h1v-1zM707 363h3v3h-3zM708 364v1h1v-1zM716 344h3v3h-3zM717 345v1h1v-1zM811 354h3v3h-3zM812 355v1h1v-1zM810 361h3v3h-3zM811 362v1h1v-1zM595 370h3v3h-3zM596 371v1h1v-1zM709 354h3v3h-3zM710 355v1h1v-1zM555 338h3v3h-3zM556 339v1h1v-1zM740 370h3v3h-3zM741 371v1h1v-1zM776 363h3v3h-3zM777 364v1h1v-1zM623 367h3v3h-3zM624 368v1h1v-1zM816 356h3v3h-3zM817 357v1h1v-1zM610 357h3v3h-3zM611 358v1h1v-1zM520 368h3v3h-3zM521 369v1h1v-1zM576 359h3v3h-3zM577 360v1h1v-1zM593 356h3v3h-3zM594 357v1h1v-1zM815 363h3v3h-3zM816 364v1h1v-1zM739 360h3v3h-3zM740 361v1h1v-1zM833 335h3v3h-3zM834 336v1h1v-1zM493 369h3v3h-3zM494 370v1h1v-1zM753 366h3v3h-3zM754 367v1h1v-1zM818 357h3v3h-3zM819 358v1h1v-1zM669 369h3v3h-3zM670 370v1h1v-1zM562 362h3v3h-3zM563 363v1h1v-1zM790 351h3v3h-3zM791 352v1h1v-1zM550 365h3v3h-3zM551 366v1h1v-1zM770 327h3v3h-3zM771 328v1h1v-1zM831 344h3v3h-3zM832 345v1h1v-1zM569 354h3v3h-3zM570 355v1h1v-1zM697 359h3v3h-3zM698 360v1h1v-1zM595 360h3v3h-3zM596 361v1h1v-1zM674 361h3v3h-3zM675 362v1h1v-1zM739 368h3v3h-3zM740 369v1h1v-1zM633 365h3v3h-3zM634 366v1h1v-1zM645 362h3v3h-3zM646 363v1h1v-1zM719 342h3v3h-3zM720 343v1h1v-1zM547 361h3v3h-3zM548 362v1h1v-1zM781 350h3v3h-3zM782 351v1h1v-1zM675 366h3v3h-3zM676 367v1h1v-1zM513 347h3v3h-3zM514 348v1h1v-1zM495 317h3v3h-3zM496 318v1h1v-1zM738 359h3v3h-3zM739 360v1h1v-1zM532 372h3v3h-3zM533 373v1h1v-1zM778 351h3v3h-3zM779 352v1h1v-1zM625 354h3v3h-3zM626 355v1h1v-1zM712 357h3v3h-3zM713 358v1h1v-1zM740 361h3v3h-3zM741 362v1h1v-1zM494 349h3v3h-3zM495 350v1h1v-1zM673 347h3v3h-3zM674 348v1h1v-1zM811 353h3v3h-3zM812 354v1h1v-1zM804 341h3v3h-3zM805 342v1h1v-1zM618 360h3v3h-3zM619 361v1h1v-1zM824 366h3v3h-3zM825 367v1h1v-1zM504 361h3v3h-3zM505 362v1h1v-1zM502 366h3v3h-3zM503 367v1h1v-1zM641 334h3v3h-3zM642 335v1h1v-1zM678 361h3v3h-3zM679 362v1h1v-1zM576 346h3v3h-3zM577 347v1h1v-1zM542 364h3v3h-3zM543 365v1h1v-1zM805 331h3v3h-3zM806 332v1h1v-1zM657 351h3v3h-3zM658 352v1h1v-1zM672 352h3v3h-3zM673 353v1h1v-1zM653 371h3v3h-3zM654 372v1h1v-1zM679 361h3v3h-3zM680 362v1h1v-1zM619 372h3v3h-3zM620 373v1h1v-1zM780 363h3v3h-3zM781 364v1h1v-1zM811 292h3v3h-3zM812 293v1h1v-1zM696 331h3v3h-3zM697 332v1h1v-1zM515 350h3v3h-3zM516 351v1h1v-1zM745 362h3v3h-3zM746 363v1h1v-1zM570 345h3v3h-3zM571 346v1h1v-1zM810 366h3v3h-3zM811 367v1h1v-1zM531 363h3v3h-3zM532 364v1h1v-1zM560 361h3v3h-3zM561 362v1h1v-1zM716 358h3v3h-3zM717 359v1h1v-1zM510 357h3v3h-3zM511 358v1h1v-1zM715 357h3v3h-3zM716 358v1h1v-1zM680 370h3v3h-3zM681 371v1h1v-1zM491 345h3v3h-3zM492 346v1h1v-1zM751 364h3v3h-3zM752 365v1h1v-1zM707 367h3v3h-3zM708 368v1h1v-1zM518 366h3v3h-3zM519 367v1h1v-1zM753 359h3v3h-3zM754 360v1h1v-1zM522 331h3v3h-3zM523 332v1h1v-1zM714 321h3v3h-3zM715 322v1h1v-1zM580 369h3v3h-3zM581 370v1h1v-1zM574 371h3v3h-3zM575 372v1h1v-1zM778 367h3v3h-3zM779 368v1h1v-1zM835 358h3v3h-3zM836 359v1h1v-1zM533 361h3v3h-3zM534 362v1h1v-1zM767 359h3v3h-3zM768 360v1h1v-1zM763 349h3v3h-3zM764 350v1h1v-1zM810 331h3v3h-3zM811 332v1h1v-1zM801 327h3v3h-3zM802 328v1h1v-1zM807 335h3v3h-3zM808 336v1h1v-1zM659 354h3v3h-3zM660 355v1h1v-1zM801 353h3v3h-3zM802 354v1h1v-1zM705 350h3v3h-3zM706 351v1h1v-1zM678 343h3v3h-3zM679 344v1h1v-1zM643 369h3v3h-3zM644 370v1h1v-1zM665 344h3v3h-3zM666 345v1h1v-1zM586 367h3v3h-3zM587 368v1h1v-1zM603 363h3v3h-3zM604 364v1h1v-1zM533 352h3v3h-3zM534 353v1h1v-1zM565 362h3v3h-3zM566 363v1h1v-1zM787 352h3v3h-3zM788 353v1h1v-1zM703 362h3v3h-3zM704 363v1h1v-1zM715 360h3v3h-3zM716 361v1h1v-1zM692 371h3v3h-3zM693 372v1h1v-1zM593 358h3v3h-3zM594 359v1h1v-1zM770 369h3v3h-3zM771 370v1h1v-1zM619 358h3v3h-3zM620 359v1h1v-1zM822 346h3v3h-3zM823 347v1h1v-1zM618 358h3v3h-3zM619 359v1h1v-1zM740 367h3v3h-3zM741 368v1h1v-1zM767 347h3v3h-3zM768 348v1h1v-1zM783 358h3v3h-3zM784 359v1h1v-1zM791 337h3v3h-3zM792 338v1h1v-1zM780 351h3v3h-3zM781 352v1h1v-1zM527 362h3v3h-3zM528 363v1h1v-1zM715 356h3v3h-3zM716 357v1h1v-1zM749 352h3v3h-3zM750 353v1h1v-1zM548 336h3v3h-3zM549 337v1h1v-1zM753 333h3v3h-3zM754 334v1h1v-1zM542 343h3v3h-3zM543 344v1h1v-1zM768 361h3v3h-3zM769 362v1h1v-1zM577 359h3v3h-3zM578 360v1h1v-1zM733 368h3v3h-3zM734 369v1h1v-1zM537 349h3v3h-3zM538 350v1h1v-1zM519 346h3v3h-3zM520 347v1h1v-1zM697 370h3v3h-3zM698 371v1h1v-1zM497 353h3v3h-3zM498 354v1h1v-1zM794 346h3v3h-3zM795 347v1h1v-1zM551 366h3v3h-3zM552 367v1h1v-1zM559 335h3v3h-3zM560 336v1h1v-1zM808 348h3v3h-3zM809 349v1h1v-1zM593 331h3v3h-3zM594 332v1h1v-1zM671 355h3v3h-3zM672 356v1h1v-1zM576 346h3v3h-3zM577 347v1h1v-1zM495 344h3v3h-3zM496 345v1h1v-1zM620 358h3v3h-3zM621 359v1h1v-1zM758 356h3v3h-3zM759 357v1h1v-1zM672 371h3v3h-3zM673 372v1h1v-1zM799 362h3v3h-3zM800 363v1h1v-1zM670 352h3v3h-3zM671 353v1h1v-1zM798 353h3v3h-3zM799 354v1h1v-1zM547 329h3v3h-3zM548 330v1h1v-1zM614 363h3v3h-3zM615 364v1h1v-1zM620 353h3v3h-3zM621 354v1h1v-1zM500 348h3v3h-3zM501 349v1h1v-1zM787 335h3v3h-3zM788 336v1h1v-1zM739 357h3v3h-3zM740 358v1h1v-1zM546 358h3v3h-3zM547 359v1h1v-1zM566 365h3v3h-3zM567 366v1h1v-1zM773 332h3v3h-3zM774 333v1h1v-1zM832 349h3v3h-3zM833 350v1h1v-1zM684 358h3v3h-3zM685 359v1h1v-1zM618 349h3v3h-3zM619 350v1h1v-1zM765 335h3v3h-3zM766 336v1h1v-1zM627 371h3v3h-3zM628 372v1h1v-1zM717 353h3v3h-3zM718 354v1h1v-1zM567 370h3v3h-3zM568 371v1h1v-1zM739 330h3v3h-3zM740 331v1h1v-1zM508 372h3v3h-3zM509 373v1h1v-1zM528 357h3v3h-3zM529 358v1h1v-1zM797 334h3v3h-3zM798 335v1h1v-1zM690 343h3v3h-3zM691 344v1h1v-1zM719 327h3v3h-3zM720 328v1h1v-1zM691 365h3v3h-3zM692 366v1h1v-1zM754 320h3v3h-3zM755 321v1h1v-1zM528 356h3v3h-3zM529 357v1h1v-1zM649 353h3v3h-3zM650 354v1h1v-1zM557 367h3v3h-3zM558 368v1h1v-1zM576 369h3v3h-3zM577 370v1h1v-1zM674 369h3v3h-3zM675 370v1h1v-1zM729 353h3v3h-3zM730 354v1h1v-1zM688 356h3v3h-3zM689 357v1h1v-1zM661 365h3v3h-3zM662 366v1h1v-1zM786 354h3v3h-3zM787 355v1h1v-1zM617 371h3v3h-3zM618 372v1h1v-1zM725 351h3v3h-3zM726 352v1h1v-1zM813 348h3v3h-3zM814 349v1h1v-1zM564 370h3v3h-3zM565 371v1h1v-1zM686 361h3v3h-3zM687 362v1h1v-1zM629 315h3v3h-3zM630 316v1h1v-1zM672 348h3v3h-3zM673 349v1h1v-1zM781 345h3v3h-3zM782 346v1h1v-1zM561 360h3v3h-3zM562 361v1h1v-1zM507 335h3v3h-3zM508 336v1h1v-1zM538 350h3v3h-3zM539 351v1h1v-1zM592 368h3v3h-3zM593 369v1h1v-1zM814 339h3v3h-3zM815 340v1h1v-1zM540 361h3v3h-3zM541 362v1h1v-1zM611 360h3v3h-3zM612 361v1h1v-1zM562 365h3v3h-3zM563 366v1h1v-1zM664 357h3v3h-3zM665 358v1h1v-1zM675 344h3v3h-3zM676 345v1h1v-1zM669 370h3v3h-3zM670 371v1h1v-1zM771 365h3v3h-3zM772 366v1h1v-1zM662 354h3v3h-3zM663 355v1h1v-1zM833 340h3v3h-3zM834 341v1h1v-1zM736 317h3v3h-3zM737 318v1h1v-1zM747 360h3v3h-3zM748 361v1h1v-1zM610 361h3v3h-3zM611 362v1h1v-1zM668 364h3v3h-3zM669 365v1h1v-1zM833 355h3v3h-3zM834 356v1h1v-1zM722 354h3v3h-3zM723 355v1h1v-1zM644 361h3v3h-3zM645 362v1h1v-1zM576 362h3v3h-3zM577 363v1h1v-1zM647 366h3v3h-3zM648 367v1h1v-1zM619 368h3v3h-3zM620 369v1h1v-1zM664 347h3v3h-3zM665 348v1h1v-1zM527 349h3v3h-3zM528 350v1h1v-1zM530 359h3v3h-3zM531 360v1h1v-1zM789 357h3v3h-3zM790 358v1h1v-1zM729 347h3v3h-3zM730 348v1h1v-1zM672 342h3v3h-3zM673 343v1h1v-1zM524 366h3v3h-3zM525 367v1h1v-1zM738 365h3v3h-3zM739 366v1h1v-1zM621 361h3v3h-3zM622 362v1h1v-1zM769 357h3v3h-3zM770 358v1h1v-1zM627 370h3v3h-3zM628 371v1h1v-1zM611 368h3v3h-3zM612 369v1h1v-1zM694 359h3v3h-3zM695 360v1h1v-1zM719 363h3v3h-3zM720 364v1h1v-1zM746 344h3v3h-3zM747 345v1h1v-1zM821 355h3v3h-3zM822 356v1h1v-1zM519 363h3v3h-3zM520 364v1h1v-1zM556 365h3v3h-3zM557 366v1h1v-1zM784 363h3v3h-3zM785 364v1h1v-1zM664 372h3v3h-3zM665 373v1h1v-1zM628 370h3v3h-3zM629 371v1h1v-1zM764 367h3v3h-3zM765 368v1h1v-1zM655 369h3v3h-3zM656 370v1h1v-1zM504 368h3v3h-3zM505 369v1h1v-1zM503 355h3v3h-3zM504 356v1h1v-1zM822 339h3v3h-3zM823 340v1h1v-1zM662 370h3v3h-3zM663 371v1h1v-1zM579 353h3v3h-3zM580 354v1h1v-1zM513 365h3v3h-3zM514 366v1h1v-1zM534 359h3v3h-3zM535 360v1h1v-1zM743 357h3v3h-3zM744 358v1h1v-1zM796 329h3v3h-3zM797 330v1h1v-1zM496 344h3v3h-3zM497 345v1h1v-1zM503 349h3v3h-3zM504 350v1h1v-1zM650 360h3v3h-3zM651 361v1h1v-1zM518 345h3v3h-3zM519 346v1h1v-1zM658 356h3v3h-3zM659 357v1h1v-1zM570 362h3v3h-3zM571 363v1h1v-1zM563 366h3v3h-3zM564 367v1h1v-1zM761 368h3v3h-3zM762 369v1h1v-1zM675 363h3v3h-3zM676 364v1h1v-1zM706 355h3v3h-3zM707 356v1h1v-1zM774 344h3v3h-3zM775 345v1h1v-1zM568 357h3v3h-3zM569 358v1h1v-1zM659 349h3v3h-3zM660 350v1h1v-1zM607 371h3v3h-3zM608 372v1h1v-1zM734 355h3v3h-3zM735 356v1h1v-1zM506 369h3v3h-3zM507 370v1h1v-1zM771 352h3v3h-3zM772 353v1h1v-1zM722 353h3v3h-3zM723 354v1h1v-1zM761 362h3v3h-3zM762 363v1h1v-1zM630 370h3v3h-3zM631 371v1h1v-1zM733 369h3v3h-3zM734 370v1h1v-1zM541 353h3v3h-3zM542 354v1h1v-1zM675 343h3v3h-3zM676 344v1h1v-1zM567 358h3v3h-3zM568 359v1h1v-1zM536 371h3v3h-3zM537 372v1h1v-1zM504 365h3v3h-3zM505 366v1h1v-1zM768 362h3v3h-3zM769 363v1h1v-1zM746 360h3v3h-3zM747 361v1h1v-1zM622 339h3v3h-3zM623 340v1h1v-1zM800 360h3v3h-3zM801 361v1h1v-1zM580 363h3v3h-3zM581 364v1h1v-1zM572 354h3v3h-3zM573 355v1h1v-1zM614 369h3v3h-3zM615 370v1h1v-1zM716 348h3v3h-3zM717 349v1h1v-1zM815 364h3v3h-3zM816 365v1h1v-1zM666 356h3v3h-3zM667 357v1h1v-1zM598 360h3v3h-3zM599 361v1h1v-1zM655 371h3v3h-3zM656 372v1h1v-1zM827 362h3v3h-3zM828 363v1h1v-1zM497 346h3v3h-3zM498 347v1h1v-1zM695 360h3v3h-3zM696 361v1h1v-1zM835 361h3v3h-3zM836 362v1h1v-1zM778 363h3v3h-3zM779 364v1h1v-1zM682 334h3v3h-3zM683 335v1h1v-1zM826 342h3v3h-3zM827 343v1h1v-1zM811 364h3v3h-3zM812 365v1h1v-1zM500 368h3v3h-3zM501 369v1h1v-1zM624 368h3v3h-3zM625 369v1h1v-1zM671 358h3v3h-3zM672 359v1h1v-1zM594 362h3v3h-3zM595 363v1h1v-1zM632 353h3v3h-3zM633 354v1h1v-1zM642 355h3v3h-3zM643 356v1h1v-1zM781 352h3v3h-3zM782 353v1h1v-1zM570 326h3v3h-3zM571 327v1h1v-1zM626 365h3v3h-3zM627 366v1h1v-1zM559 365h3v3h-3zM560 366v1h1v-1zM659 357h3v3h-3zM660 358v1h1v-1zM492 330h3v3h-3zM493 331v1h1v-1zM572 368h3v3h-3zM573 369v1h1v-1zM653 361h3v3h-3zM654 362v1h1v-1zM721 346h3v3h-3zM722 347v1h1v-1zM598 336h3v3h-3zM599 337v1h1v-1zM597 352h3v3h-3zM598 353v1h1v-1zM674 339h3v3h-3zM675 340v1h1v-1zM714 362h3v3h-3zM715 363v1h1v-1zM583 362h3v3h-3zM584 363v1h1v-1zM642 368h3v3h-3zM643 369v1h1v-1zM502 368h3v3h-3zM503 369v1h1v-1zM494 361h3v3h-3zM495 362v1h1v-1zM558 362h3v3h-3zM559 363v1h1v-1zM670 366h3v3h-3zM671 367v1h1v-1zM539 372h3v3h-3zM540 373v1h1v-1zM693 350h3v3h-3zM694 351v1h1v-1zM536 347h3v3h-3zM537 348v1h1v-1zM830 352h3v3h-3zM831 353v1h1v-1zM693 331h3v3h-3zM694 332v1h1v-1zM506 334h3v3h-3zM507 335v1h1v-1zM789 365h3v3h-3zM790 366v1h1v-1zM497 337h3v3h-3zM498 338v1h1v-1zM509 354h3v3h-3zM510 355v1h1v-1zM784 348h3v3h-3zM785 349v1h1v-1zM710 361h3v3h-3zM711 362v1h1v-1zM514 341h3v3h-3zM515 342v1h1v-1zM652 363h3v3h-3zM653 364v1h1v-1zM739 366h3v3h-3zM740 367v1h1v-1zM559 371h3v3h-3zM560 372v1h1v-1zM604 372h3v3h-3zM605 373v1h1v-1zM766 349h3v3h-3zM767 350v1h1v-1zM746 344h3v3h-3zM747 345v1h1v-1zM547 334h3v3h-3zM548 335v1h1v-1zM529 365h3v3h-3zM530 366v1h1v-1zM668 333h3v3h-3zM669 334v1h1v-1zM604 365h3v3h-3zM605 366v1h1v-1zM527 370h3v3h-3zM528 371v1h1v-1zM625 360h3v3h-3zM626 361v1h1v-1zM627 367h3v3h-3zM628 368v1h1v-1zM750 367h3v3h-3zM751 368v1h1v-1zM514 351h3v3h-3zM515 352v1h1v-1zM675 358h3v3h-3zM676 359v1h1v-1zM626 342h3v3h-3zM627 343v1h1v-1zM824 364h3v3h-3zM825 365v1h1v-1zM722 347h3v3h-3zM723 348v1h1v-1zM700 365h3v3h-3zM701 366v1h1v-1zM627 358h3v3h-3zM628 359v1h1v-1zM704 361h3v3h-3zM705 362v1h1v-1zM686 352h3v3h-3zM687 353v1h1v-1zM687 369h3v3h-3zM688 370v1h1v-1zM699 358h3v3h-3zM700 359v1h1v-1zM815 327h3v3h-3zM816 328v1h1v-1zM492 370h3v3h-3zM493 371v1h1v-1zM620 348h3v3h-3zM621 349v1h1v-1zM802 360h3v3h-3zM803 361v1h1v-1zM591 311h3v3h-3zM592 312v1h1v-1zM829 338h3v3h-3zM830 339v1h1v-1zM507 346h3v3h-3zM508 347v1h1v-1zM515 351h3v3h-3zM516 352v1h1v-1zM820 352h3v3h-3zM821 353v1h1v-1zM716 355h3v3h-3zM717 356v1h1v-1zM785 363h3v3h-3zM786 364v1h1v-1zM490 344h3v3h-3zM491 345v1h1v-1zM730 366h3v3h-3zM731 367v1h1v-1zM751 356h3v3h-3zM752 357v1h1v-1zM684 351h3v3h-3zM685 352v1h1v-1zM610 356h3v3h-3zM611 357v1h1v-1zM683 340h3v3h-3zM684 341v1h1v-1zM671 367h3v3h-3zM672 368v1h1v-1zM759 350h3v3h-3zM760 351v1h1v-1zM626 349h3v3h-3zM627 350v1h1v-1zM654 352h3v3h-3zM655 353v1h1v-1zM526 355h3v3h-3zM527 356v1h1v-1zM604 354h3v3h-3zM605 355v1h1v-1zM803 366h3v3h-3zM804 367v1h1v-1zM732 355h3v3h-3zM733 356v1h1v-1zM668 349h3v3h-3zM669 350v1h1v-1zM603 369h3v3h-3zM604 370v1h1v-1zM562 341h3v3h-3zM563 342v1h1v-1zM676 358h3v3h-3zM677 359v1h1v-1zM758 366h3v3h-3zM759 367v1h1v-1zM677 360h3v3h-3zM678 361v1h1v-1zM612 367h3v3h-3zM613 368v1h1v-1zM828 356h3v3h-3zM829 357v1h1v-1zM725 350h3v3h-3zM726 351v1h1v-1zM823 323h3v3h-3zM824 324v1h1v-1zM512 364h3v3h-3zM513 365v1h1v-1zM709 355h3v3h-3zM710 356v1h1v-1zM552 346h3v3h-3zM553 347v1h1v-1zM682 355h3v3h-3zM683 356v1h1v-1zM542 353h3v3h-3zM543 354v1h1v-1zM757 347h3v3h-3zM758 348v1h1v-1zM756 360h3v3h-3zM757 361v1h1v-1zM630 344h3v3h-3zM631 345v1h1v-1zM692 367h3v3h-3zM693 368v1h1v-1zM547 351h3v3h-3zM548 352v1h1v-1zM720 350h3v3h-3zM721 351v1h1v-1zM579 348h3v3h-3zM580 349v1h1v-1zM754 352h3v3h-3zM755 353v1h1v-1zM677 348h3v3h-3zM678 349v1h1v-1zM740 356h3v3h-3zM741 357v1h1v-1zM679 370h3v3h-3zM680 371v1h1v-1zM757 359h3v3h-3zM758 360v1h1v-1zM499 355h3v3h-3zM500 356v1h1v-1zM774 361h3v3h-3zM775 362v1h1v-1zM519 347h3v3h-3zM520 348v1h1v-1zM792 354h3v3h-3zM793 355v1h1v-1zM630 343h3v3h-3zM631 344v1h1v-1zM655 371h3v3h-3zM656 372v1h1v-1zM714 356h3v3h-3zM715 357v1h1v-1zM536 349h3v3h-3zM537 350v1h1v-1zM535 368h3v3h-3zM536 369v1h1v-1zM593 337h3v3h-3zM594 338v1h1v-1zM638 336h3v3h-3zM639 337v1h1v-1zM806 359h3v3h-3zM807 360v1h1v-1zM716 327h3v3h-3zM717 328v1h1v-1zM682 351h3v3h-3zM683 352v1h1v-1zM641 349h3v3h-3zM642 350v1h1v-1zM698 347h3v3h-3zM699 348v1h1v-1zM621 361h3v3h-3zM622 362v1h1v-1zM670 369h3v3h-3zM671 370v1h1v-1zM556 333h3v3h-3zM557 334v1h1v-1zM806 348h3v3h-3zM807 349v1h1v-1zM787 318h3v3h-3zM788 319v1h1v-1zM680 360h3v3h-3zM681 361v1h1v-1zM526 367h3v3h-3zM527 368v1h1v-1zM530 371h3v3h-3zM531 372v1h1v-1zM759 350h3v3h-3zM760 351v1h1v-1zM702 329h3v3h-3zM703 330v1h1v-1zM503 371h3v3h-3zM504 372v1h1v-1zM545 353h3v3h-3zM546 354v1h1v-1zM726 359h3v3h-3zM727 360v1h1v-1zM713 352h3v3h-3zM714 353v1h1v-1zM523 360h3v3h-3zM524 361v1h1v-1zM715 363h3v3h-3zM716 364v1h1v-1zM494 366h3v3h-3zM495 367v1h1v-1zM833 365h3v3h-3zM834 366v1h1v-1zM767 356h3v3h-3zM768 357v1h1v-1zM510 357h3v3h-3zM511 358v1h1v-1zM659 364h3v3h-3zM660 365v1h1v-1zM688 371h3v3h-3zM689 372v1h1v-1zM603 362h3v3h-3zM604 363v1h1v-1zM529 369h3v3h-3zM530 370v1h1v-1zM744 369h3v3h-3zM745 370v1h1v-1zM535 364h3v3h-3zM536 365v1h1v-1zM722 360h3v3h-3zM723 361v1h1v-1zM518 366h3v3h-3zM519 367v1h1v-1zM661 360h3v3h-3zM662 361v1h1v-1zM737 354h3v3h-3zM738 355v1h1v-1zM703 353h3v3h-3zM704 354v1h1v-1zM788 355h3v3h-3zM789 356v1h1v-1zM515 356h3v3h-3zM516 357v1h1v-1zM810 356h3v3h-3zM811 357v1h1v-1zM755 355h3v3h-3zM756 356v1h1v-1zM493 362h3v3h-3zM494 363v1h1v-1zM756 347h3v3h-3zM757 348v1h1v-1zM624 355h3v3h-3zM625 356v1h1v-1zM829 356h3v3h-3zM830 357v1h1v-1zM642 350h3v3h-3zM643 351v1h1v-1zM705 364h3v3h-3zM706 365v1h1v-1zM516 367h3v3h-3zM517 368v1h1v-1zM684 358h3v3h-3zM685 359v1h1v-1zM713 362h3v3h-3zM714 363v1h1v-1zM593 360h3v3h-3zM594 361v1h1v-1zM557 349h3v3h-3zM558 350v1h1v-1zM681 364h3v3h-3zM682 365v1h1v-1zM727 353h3v3h-3zM728 354v1h1v-1zM562 346h3v3h-3zM563 347v1h1v-1zM677 355h3v3h-3zM678 356v1h1v-1zM723 363h3v3h-3zM724 364v1h1v-1zM774 352h3v3h-3zM775 353v1h1v-1zM494 344h3v3h-3zM495 345v1h1v-1zM762 324h3v3h-3zM763 325v1h1v-1zM655 352h3v3h-3zM656 353v1h1v-1zM508 367h3v3h-3zM509 368v1h1v-1zM639 337h3v3h-3zM640 338v1h1v-1zM592 363h3v3h-3zM593 364v1h1v-1zM793 333h3v3h-3zM794 334v1h1v-1zM802 323h3v3h-3zM803 324v1h1v-1zM717 358h3v3h-3zM718 359v1h1v-1zM594 367h3v3h-3zM595 368v1h1v-1zM712 367h3v3h-3zM713 368v1h1v-1zM817 359h3v3h-3zM818 360v1h1v-1zM489 333h3v3h-3zM490 334v1h1v-1zM492 321h3v3h-3zM493 322v1h1v-1zM493 324h3v3h-3zM494 325v1h1v-1zM493 331h3v3h-3zM494 332v1h1v-1zM494 335h3v3h-3zM495 336v1h1v-1zM495 298h3v3h-3zM496 299v1h1v-1zM496 331h3v3h-3zM497 332v1h1v-1zM496 340h3v3h-3zM497 341v1h1v-1zM500 294h3v3h-3zM501 295v1h1v-1zM501 334h3v3h-3zM502 335v1h1v-1zM502 329h3v3h-3zM503 330v1h1v-1zM504 318h3v3h-3zM505 319v1h1v-1zM507 332h3v3h-3zM508 333v1h1v-1zM507 347h3v3h-3zM508 348v1h1v-1zM509 318h3v3h-3zM510 319v1h1v-1zM510 329h3v3h-3zM511 330v1h1v-1zM517 325h3v3h-3zM518 326v1h1v-1zM517 335h3v3h-3zM518 336v1h1v-1zM519 322h3v3h-3zM520 323v1h1v-1zM519 329h3v3h-3zM520 330v1h1v-1zM520 313h3v3h-3zM521 314v1h1v-1zM520 345h3v3h-3zM521 346v1h1v-1zM523 311h3v3h-3zM524 312v1h1v-1zM525 297h3v3h-3zM526 298v1h1v-1zM525 323h3v3h-3zM526 324v1h1v-1zM527 313h3v3h-3zM528 314v1h1v-1zM528 310h3v3h-3zM529 311v1h1v-1zM531 326h3v3h-3zM532 327v1h1v-1zM531 335h3v3h-3zM532 336v1h1v-1zM533 333h3v3h-3zM534 334v1h1v-1zM533 347h3v3h-3zM534 348v1h1v-1zM534 336h3v3h-3zM535 337v1h1v-1zM536 331h3v3h-3zM537 332v1h1v-1zM537 292h3v3h-3zM538 293v1h1v-1zM538 324h3v3h-3zM539 325v1h1v-1zM542 325h3v3h-3zM543 326v1h1v-1zM542 336h3v3h-3zM543 337v1h1v-1zM543 290h3v3h-3zM544 291v1h1v-1zM545 333h3v3h-3zM546 334v1h1v-1zM545 349h3v3h-3zM546 350v1h1v-1zM546 331h3v3h-3zM547 332v1h1v-1zM547 317h3v3h-3zM548 318v1h1v-1zM547 349h3v3h-3zM548 350v1h1v-1zM548 337h3v3h-3zM549 338v1h1v-1zM548 344h3v3h-3zM549 345v1h1v-1zM549 327h3v3h-3zM550 328v1h1v-1zM549 344h3v3h-3zM550 345v1h1v-1zM553 286h3v3h-3zM554 287v1h1v-1zM557 326h3v3h-3zM558 327v1h1v-1zM557 335h3v3h-3zM558 336v1h1v-1zM558 315h3v3h-3zM559 316v1h1v-1zM558 331h3v3h-3zM559 332v1h1v-1zM559 335h3v3h-3zM560 336v1h1v-1zM559 342h3v3h-3zM560 343v1h1v-1zM560 333h3v3h-3zM561 334v1h1v-1zM560 346h3v3h-3zM561 347v1h1v-1zM561 336h3v3h-3zM562 337v1h1v-1zM561 347h3v3h-3zM562 348v1h1v-1zM562 333h3v3h-3zM563 334v1h1v-1zM563 327h3v3h-3zM564 328v1h1v-1zM563 341h3v3h-3zM564 342v1h1v-1zM564 291h3v3h-3zM565 292v1h1v-1zM564 338h3v3h-3zM565 339v1h1v-1zM566 328h3v3h-3zM567 329v1h1v-1zM567 334h3v3h-3zM568 335v1h1v-1zM570 322h3v3h-3zM571 323v1h1v-1zM570 334h3v3h-3zM571 335v1h1v-1zM571 335h3v3h-3zM572 336v1h1v-1zM571 346h3v3h-3zM572 347v1h1v-1zM572 330h3v3h-3zM573 331v1h1v-1zM574 336h3v3h-3zM575 337v1h1v-1zM574 346h3v3h-3zM575 347v1h1v-1zM581 333h3v3h-3zM582 334v1h1v-1zM584 331h3v3h-3zM585 332v1h1v-1zM592 336h3v3h-3zM593 337v1h1v-1zM593 330h3v3h-3zM594 331v1h1v-1zM595 276h3v3h-3zM596 277v1h1v-1zM595 322h3v3h-3zM596 323v1h1v-1zM598 332h3v3h-3zM599 333v1h1v-1zM598 338h3v3h-3zM599 339v1h1v-1zM599 332h3v3h-3zM600 333v1h1v-1zM599 340h3v3h-3zM600 341v1h1v-1zM600 315h3v3h-3zM601 316v1h1v-1zM600 326h3v3h-3zM601 327v1h1v-1zM603 314h3v3h-3zM604 315v1h1v-1zM603 334h3v3h-3zM604 335v1h1v-1zM605 313h3v3h-3zM606 314v1h1v-1zM605 330h3v3h-3zM606 331v1h1v-1zM609 333h3v3h-3zM610 334v1h1v-1zM609 348h3v3h-3zM610 349v1h1v-1zM611 302h3v3h-3zM612 303v1h1v-1zM613 326h3v3h-3zM614 327v1h1v-1zM616 333h3v3h-3zM617 334v1h1v-1zM616 347h3v3h-3zM617 348v1h1v-1zM619 298h3v3h-3zM620 299v1h1v-1zM619 312h3v3h-3zM620 313v1h1v-1zM623 259h3v3h-3zM624 260v1h1v-1zM623 268h3v3h-3zM624 269v1h1v-1zM626 292h3v3h-3zM627 293v1h1v-1zM626 328h3v3h-3zM627 329v1h1v-1zM628 331h3v3h-3zM629 332v1h1v-1zM628 346h3v3h-3zM629 347v1h1v-1zM629 331h3v3h-3zM630 332v1h1v-1zM629 348h3v3h-3zM630 349v1h1v-1zM631 334h3v3h-3zM632 335v1h1v-1zM631 347h3v3h-3zM632 348v1h1v-1zM633 324h3v3h-3zM634 325v1h1v-1zM635 282h3v3h-3zM636 283v1h1v-1zM635 329h3v3h-3zM636 330v1h1v-1zM638 333h3v3h-3zM639 334v1h1v-1zM638 339h3v3h-3zM639 340v1h1v-1zM639 302h3v3h-3zM640 303v1h1v-1zM640 323h3v3h-3zM641 324v1h1v-1zM642 321h3v3h-3zM643 322v1h1v-1zM642 333h3v3h-3zM643 334v1h1v-1zM644 319h3v3h-3zM645 320v1h1v-1zM644 331h3v3h-3zM645 332v1h1v-1zM645 330h3v3h-3zM646 331v1h1v-1zM645 340h3v3h-3zM646 341v1h1v-1zM650 316h3v3h-3zM651 317v1h1v-1zM657 319h3v3h-3zM658 320v1h1v-1zM657 331h3v3h-3zM658 332v1h1v-1zM660 334h3v3h-3zM661 335v1h1v-1zM661 335h3v3h-3zM662 336v1h1v-1zM661 344h3v3h-3zM662 345v1h1v-1zM662 335h3v3h-3zM663 336v1h1v-1zM665 309h3v3h-3zM666 310v1h1v-1zM665 335h3v3h-3zM666 336v1h1v-1zM669 270h3v3h-3zM670 271v1h1v-1zM670 322h3v3h-3zM671 323v1h1v-1zM673 325h3v3h-3zM674 326v1h1v-1zM675 329h3v3h-3zM676 330v1h1v-1zM678 328h3v3h-3zM679 329v1h1v-1zM678 336h3v3h-3zM679 337v1h1v-1zM680 247h3v3h-3zM681 248v1h1v-1zM680 258h3v3h-3zM681 259v1h1v-1zM683 330h3v3h-3zM684 331v1h1v-1zM684 304h3v3h-3zM685 305v1h1v-1zM685 334h3v3h-3zM686 335v1h1v-1zM685 347h3v3h-3zM686 348v1h1v-1zM686 284h3v3h-3zM687 285v1h1v-1zM686 300h3v3h-3zM687 301v1h1v-1zM688 333h3v3h-3zM689 334v1h1v-1zM691 336h3v3h-3zM692 337v1h1v-1zM693 276h3v3h-3zM694 277v1h1v-1zM693 324h3v3h-3zM694 325v1h1v-1zM695 294h3v3h-3zM696 295v1h1v-1zM695 329h3v3h-3zM696 330v1h1v-1zM696 293h3v3h-3zM697 294v1h1v-1zM696 333h3v3h-3zM697 334v1h1v-1zM697 328h3v3h-3zM698 329v1h1v-1zM697 338h3v3h-3zM698 339v1h1v-1zM699 334h3v3h-3zM700 335v1h1v-1zM701 333h3v3h-3zM702 334v1h1v-1zM702 332h3v3h-3zM703 333v1h1v-1zM703 329h3v3h-3zM704 330v1h1v-1zM705 321h3v3h-3zM706 322v1h1v-1zM705 335h3v3h-3zM706 336v1h1v-1zM706 327h3v3h-3zM707 328v1h1v-1zM706 337h3v3h-3zM707 338v1h1v-1zM707 330h3v3h-3zM708 331v1h1v-1zM708 308h3v3h-3zM709 309v1h1v-1zM708 325h3v3h-3zM709 326v1h1v-1zM710 276h3v3h-3zM711 277v1h1v-1zM710 334h3v3h-3zM711 335v1h1v-1zM711 299h3v3h-3zM712 300v1h1v-1zM712 321h3v3h-3zM713 322v1h1v-1zM712 335h3v3h-3zM713 336v1h1v-1zM714 321h3v3h-3zM715 322v1h1v-1zM716 297h3v3h-3zM717 298v1h1v-1zM718 327h3v3h-3zM719 328v1h1v-1zM718 346h3v3h-3zM719 347v1h1v-1zM719 333h3v3h-3zM720 334v1h1v-1zM719 345h3v3h-3zM720 346v1h1v-1zM720 306h3v3h-3zM721 307v1h1v-1zM720 342h3v3h-3zM721 343v1h1v-1zM721 332h3v3h-3zM722 333v1h1v-1zM722 295h3v3h-3zM723 296v1h1v-1zM722 346h3v3h-3zM723 347v1h1v-1zM725 328h3v3h-3zM726 329v1h1v-1zM726 332h3v3h-3zM727 333v1h1v-1zM727 329h3v3h-3zM728 330v1h1v-1zM727 335h3v3h-3zM728 336v1h1v-1zM732 326h3v3h-3zM733 327v1h1v-1zM733 325h3v3h-3zM734 326v1h1v-1zM733 341h3v3h-3zM734 342v1h1v-1zM734 320h3v3h-3zM735 321v1h1v-1zM734 328h3v3h-3zM735 329v1h1v-1zM735 320h3v3h-3zM736 321v1h1v-1zM736 329h3v3h-3zM737 330v1h1v-1zM736 348h3v3h-3zM737 349v1h1v-1zM737 324h3v3h-3zM738 325v1h1v-1zM737 337h3v3h-3zM738 338v1h1v-1zM738 335h3v3h-3zM739 336v1h1v-1zM738 347h3v3h-3zM739 348v1h1v-1zM739 329h3v3h-3zM740 330v1h1v-1zM744 326h3v3h-3zM745 327v1h1v-1zM746 307h3v3h-3zM747 308v1h1v-1zM752 318h3v3h-3zM753 319v1h1v-1zM752 344h3v3h-3zM753 345v1h1v-1zM758 334h3v3h-3zM759 335v1h1v-1zM758 342h3v3h-3zM759 343v1h1v-1zM759 324h3v3h-3zM760 325v1h1v-1zM760 295h3v3h-3zM761 296v1h1v-1zM760 303h3v3h-3zM761 304v1h1v-1zM763 334h3v3h-3zM764 335v1h1v-1zM763 348h3v3h-3zM764 349v1h1v-1zM767 305h3v3h-3zM768 306v1h1v-1zM768 332h3v3h-3zM769 333v1h1v-1zM768 343h3v3h-3zM769 344v1h1v-1zM769 305h3v3h-3zM770 306v1h1v-1zM770 304h3v3h-3zM771 305v1h1v-1zM772 323h3v3h-3zM773 324v1h1v-1zM773 308h3v3h-3zM774 309v1h1v-1zM776 330h3v3h-3zM777 331v1h1v-1zM777 304h3v3h-3zM778 305v1h1v-1zM778 315h3v3h-3zM779 316v1h1v-1zM779 332h3v3h-3zM780 333v1h1v-1zM779 347h3v3h-3zM780 348v1h1v-1zM780 309h3v3h-3zM781 310v1h1v-1zM782 317h3v3h-3zM783 318v1h1v-1zM783 319h3v3h-3zM784 320v1h1v-1zM784 284h3v3h-3zM785 285v1h1v-1zM784 325h3v3h-3zM785 326v1h1v-1zM785 249h3v3h-3zM786 250v1h1v-1zM787 320h3v3h-3zM788 321v1h1v-1zM790 326h3v3h-3zM791 327v1h1v-1zM791 269h3v3h-3zM792 270v1h1v-1zM792 314h3v3h-3zM793 315v1h1v-1zM793 316h3v3h-3zM794 317v1h1v-1zM793 341h3v3h-3zM794 342v1h1v-1zM795 295h3v3h-3zM796 296v1h1v-1zM795 332h3v3h-3zM796 333v1h1v-1zM799 332h3v3h-3zM800 333v1h1v-1zM800 318h3v3h-3zM801 319v1h1v-1zM800 334h3v3h-3zM801 335v1h1v-1zM801 325h3v3h-3zM802 326v1h1v-1zM802 323h3v3h-3zM803 324v1h1v-1zM802 343h3v3h-3zM803 344v1h1v-1zM803 292h3v3h-3zM804 293v1h1v-1zM804 302h3v3h-3zM805 303v1h1v-1zM806 275h3v3h-3zM807 276v1h1v-1zM808 322h3v3h-3zM809 323v1h1v-1zM808 335h3v3h-3zM809 336v1h1v-1zM809 247h3v3h-3zM810 248v1h1v-1zM809 312h3v3h-3zM810 313v1h1v-1zM811 325h3v3h-3zM812 326v1h1v-1zM812 330h3v3h-3zM813 331v1h1v-1zM814 272h3v3h-3zM815 273v1h1v-1zM814 307h3v3h-3zM815 308v1h1v-1zM815 325h3v3h-3zM816 326v1h1v-1zM815 334h3v3h-3zM816 335v1h1v-1zM817 263h3v3h-3zM818 264v1h1v-1zM823 302h3v3h-3zM824 303v1h1v-1zM823 325h3v3h-3zM824 326v1h1v-1zM824 301h3v3h-3zM825 302v1h1v-1zM824 308h3v3h-3zM825 309v1h1v-1zM826 274h3v3h-3zM827 275v1h1v-1zM826 349h3v3h-3zM827 350v1h1v-1zM827 317h3v3h-3zM828 318v1h1v-1zM827 347h3v3h-3zM828 348v1h1v-1zM828 323h3v3h-3zM829 324v1h1v-1zM828 341h3v3h-3zM829 342v1h1v-1zM830 308h3v3h-3zM831 309v1h1v-1zM830 322h3v3h-3zM831 323v1h1v-1zM831 313h3v3h-3zM832 314v1h1v-1zM832 327h3v3h-3zM833 328v1h1v-1zM832 348h3v3h-3zM833 349v1h1v-1zM833 326h3v3h-3zM834 327v1h1v-1zM833 338h3v3h-3zM834 339v1h1v-1zM835 325h3v3h-3zM836 326v1h1v-1zM835 335h3v3h-3zM836 336v1h1v-1z"/>
<path fill="#3d8ef5" d="M669 394h2v2h-2zM647 380h2v1h-2zM573 375h1v1h-1zM579 366h1v2h-1zM779 386h1v2h-1zM836 359h2v2h-2zM559 393h1v2h-1zM528 379h1v2h-1zM626 396h1v2h-1zM828 378h2v2h-2zM757 388h1v2h-1zM742 373h1v1h-1zM550 381h1v2h-1zM752 391h2v2h-2zM507 393h1v1h-1zM493 392h1v1h-1zM586 382h2v1h-2zM690 368h2v2h-2zM811 381h1v1h-1zM705 382h1v1h-1zM836 375h1v2h-1zM632 374h2v2h-2zM514 388h1v1h-1zM592 380h1v1h-1zM647 389h1v2h-1zM517 381h1v2h-1zM585 371h1v1h-1zM807 368h1v2h-1zM545 385h1v2h-1zM653 376h1v2h-1zM547 369h2v2h-2zM746 390h2v1h-2zM651 364h1v2h-1zM828 373h2v2h-2zM529 371h1v2h-1zM761 388h2v1h-2zM622 378h1v1h-1zM762 388h2v2h-2zM671 384h1v2h-1zM614 393h2v1h-2zM798 380h1v1h-1zM647 368h1v1h-1zM696 376h2v2h-2zM694 376h1v2h-1zM585 387h1v2h-1zM832 384h1v1h-1zM599 374h1v2h-1zM524 378h2v1h-2zM785 373h1v2h-1zM837 379h1v1h-1zM603 385h1v1h-1zM634 394h2v2h-2zM637 367h2v2h-2zM803 387h2v1h-2zM798 378h2v2h-2zM801 364h1v2h-1zM538 374h2v1h-2zM674 363h2v1h-2zM552 390h1v1h-1zM491 377h1v2h-1zM630 380h1v1h-1zM510 379h1v1h-1zM737 368h2v2h-2zM659 381h1v1h-1zM774 386h1v2h-1zM785 376h1v1h-1zM578 363h2v2h-2zM707 375h2v2h-2zM535 381h1v2h-1zM752 394h1v1h-1zM831 383h1v2h-1zM762 371h1v1h-1zM818 372h1v2h-1zM722 396h2v2h-2zM587 374h1v1h-1zM696 368h1v1h-1zM754 360h1v1h-1zM625 369h2v2h-2zM501 392h2v1h-2zM522 374h1v1h-1zM818 379h2v2h-2zM775 371h1v2h-1zM671 373h1v1h-1zM671 377h1v2h-1zM542 373h1v2h-1zM731 378h1v2h-1zM653 379h1v1h-1zM760 379h2v2h-2zM597 374h2v1h-2zM588 387h2v2h-2zM686 368h1v1h-1zM560 362h1v2h-1zM504 362h1v2h-1zM512 369h2v1h-2zM655 374h2v2h-2zM738 388h1v1h-1zM614 369h1v2h-1zM543 365h1v1h-1zM715 378h2v2h-2zM524 381h2v1h-2zM730 367h2v1h-2zM822 371h1v1h-1zM550 392h2v2h-2zM522 385h1v1h-1zM690 382h2v1h-2zM814 380h2v1h-2zM614 365h1v1h-1zM509 377h1v1h-1zM602 389h1v2h-1zM624 363h1v1h-1zM735 388h1v1h-1zM585 367h2v1h-2zM805 374h1v2h-1zM491 364h1v1h-1zM747 380h2v1h-2zM517 384h2v2h-2zM724 375h1v1h-1zM502 368h2v2h-2zM596 366h2v1h-2zM833 369h1v1h-1zM769 377h2v1h-2zM534 386h1v1h-1zM678 372h1v2h-1zM565 379h2v2h-2zM588 362h1v1h-1zM548 385h2v1h-2zM756 373h1v1h-1zM530 392h1v1h-1zM833 377h1v1h-1zM582 383h1v2h-1zM620 387h1v2h-1zM668 363h1v1h-1zM573 377h2v2h-2zM809 384h1v2h-1zM617 362h2v1h-2zM664 370h1v2h-1zM490 387h1v2h-1zM530 380h1v1h-1zM650 377h1v2h-1zM522 380h1v1h-1zM598 380h2v1h-2zM698 396h2v1h-2zM821 363h1v1h-1zM623 377h1v1h-1zM802 372h2v1h-2zM635 389h1v2h-1zM621 396h1v1h-1zM818 365h2v1h-2zM825 359h1v2h-1zM645 365h2v1h-2zM764 360h1v1h-1zM562 381h2v2h-2zM821 387h2v2h-2zM720 368h1v2h-1zM645 376h2v1h-2zM717 397h1v2h-1zM665 374h1v1h-1zM688 392h1v1h-1zM596 390h2v2h-2zM632 384h1v1h-1zM535 367h2v2h-2zM828 364h1v1h-1zM736 364h1v2h-1zM620 385h2v1h-2zM521 364h1v2h-1zM556 394h1v2h-1zM767 384h1v2h-1zM618 375h1v1h-1zM617 394h1v2h-1zM684 396h1v1h-1zM822 363h1v2h-1zM677 371h1v2h-1zM493 364h2v2h-2zM679 370h1v2h-1zM714 379h1v2h-1zM774 383h1v2h-1zM550 378h1v1h-1zM708 378h1v1h-1zM524 371h1v2h-1zM612 395h2v1h-2zM526 379h1v1h-1zM778 379h1v1h-1zM520 393h2v1h-2zM612 380h2v2h-2zM598 366h1v2h-1zM729 394h1v1h-1zM528 389h2v2h-2zM540 369h2v2h-2zM524 366h1v2h-1zM621 368h1v1h-1zM819 371h2v1h-2zM765 382h1v1h-1zM823 368h1v2h-1zM511 390h1v1h-1zM606 363h1v1h-1zM720 369h1v2h-1zM714 397h1v2h-1zM650 383h1v2h-1zM502 384h1v2h-1zM737 369h1v2h-1zM751 390h2v2h-2zM834 386h2v1h-2zM588 391h1v2h-1zM723 371h1v1h-1zM698 368h1v1h-1zM781 371h1v1h-1zM490 367h1v2h-1zM733 381h2v2h-2zM560 371h2v1h-2zM630 396h1v1h-1zM757 364h1v1h-1zM575 370h1v1h-1zM789 386h1v2h-1zM781 381h1v2h-1zM698 365h1v1h-1zM498 391h1v2h-1zM579 392h1v1h-1zM761 373h1v1h-1zM718 370h2v2h-2zM757 393h1v2h-1zM528 382h1v2h-1zM582 392h1v1h-1zM700 375h2v2h-2zM836 381h2v1h-2zM809 379h1v2h-1zM494 376h1v1h-1zM728 395h1v2h-1zM535 394h1v2h-1zM695 397h2v1h-2zM679 388h1v2h-1zM829 371h1v1h-1zM603 384h1v1h-1zM508 379h1v2h-1zM820 359h2v2h-2zM660 383h1v2h-1zM713 373h1v1h-1zM836 376h1v2h-1zM679 366h2v2h-2zM771 381h2v1h-2zM793 390h1v2h-1zM644 385h1v1h-1zM797 373h2v1h-2zM591 393h2v2h-2zM777 368h1v1h-1zM578 365h1v1h-1zM578 370h1v1h-1zM499 363h1v1h-1zM591 367h1v1h-1zM757 372h1v2h-1zM735 392h1v1h-1zM532 371h1v1h-1zM522 382h2v2h-2zM557 389h2v2h-2zM664 380h1v1h-1zM799 388h2v1h-2zM568 391h1v2h-1zM641 388h1v2h-1zM526 388h1v1h-1zM790 363h2v2h-2zM729 389h1v1h-1zM829 371h1v1h-1zM496 368h2v1h-2zM545 390h1v1h-1zM622 380h2v2h-2zM519 363h2v1h-2zM603 380h1v2h-1zM804 364h1v1h-1zM649 398h1v1h-1zM570 364h1v2h-1zM838 384h1v2h-1zM651 381h1v1h-1zM801 368h1v1h-1zM656 380h1v1h-1zM812 385h1v1h-1zM591 373h2v2h-2zM733 380h1v1h-1zM827 359h1v2h-1zM737 363h2v1h-2zM720 373h1v2h-1zM680 381h2v2h-2zM806 359h1v1h-1zM816 386h1v1h-1zM775 363h1v1h-1zM643 386h2v2h-2zM713 380h1v2h-1zM538 386h2v1h-2zM506 371h2v1h-2zM761 363h1v2h-1zM573 390h2v2h-2zM576 370h1v2h-1zM663 375h1v2h-1zM772 363h1v2h-1zM732 369h1v2h-1zM728 375h1v1h-1zM589 394h1v1h-1zM752 372h1v1h-1zM620 380h2v1h-2zM805 368h1v2h-1zM586 385h1v1h-1zM608 382h1v2h-1zM800 359h1v2h-1zM606 392h1v2h-1zM644 375h1v2h-1zM683 372h1v1h-1zM836 368h2v1h-2zM819 382h2v1h-2zM567 390h1v2h-1zM684 378h1v1h-1zM612 381h1v1h-1zM666 394h1v2h-1zM561 391h2v1h-2zM770 393h1v2h-1zM726 389h1v2h-1zM674 371h1v1h-1zM657 394h1v1h-1zM679 365h1v2h-1zM516 368h1v2h-1zM649 391h1v2h-1zM816 377h2v2h-2zM653 394h2v2h-2zM670 383h1v1h-1zM737 376h1v1h-1zM596 369h2v2h-2zM827 378h1v1h-1zM726 382h1v1h-1zM557 376h1v1h-1zM758 370h2v2h-2zM541 369h2v1h-2zM602 375h2v2h-2zM570 375h2v1h-2zM703 369h1v2h-1zM753 386h1v2h-1zM769 385h1v1h-1zM799 389h2v1h-2zM583 363h2v1h-2zM781 371h1v1h-1zM748 361h2v1h-2zM751 376h1v1h-1zM563 367h1v1h-1zM707 367h2v2h-2zM799 367h1v1h-1zM752 382h1v1h-1zM492 388h2v1h-2zM611 381h1v1h-1zM608 383h1v1h-1zM726 387h2v1h-2zM629 392h1v1h-1zM740 394h1v1h-1zM525 391h2v2h-2zM562 373h1v1h-1zM768 371h2v1h-2zM591 370h1v2h-1zM806 371h1v1h-1zM815 364h1v1h-1zM588 382h1v2h-1zM584 376h1v2h-1zM732 395h1v1h-1zM731 382h1v1h-1zM609 365h2v2h-2zM525 375h1v2h-1zM661 375h2v2h-2zM820 361h2v1h-2zM511 390h2v2h-2zM671 380h2v2h-2zM711 384h1v1h-1zM564 383h2v2h-2zM657 383h2v1h-2zM664 391h1v2h-1zM823 362h1v1h-1zM503 382h1v2h-1zM743 370h2v1h-2zM669 382h1v2h-1zM549 373h1v2h-1zM498 374h1v1h-1zM675 391h2v1h-2zM631 394h1v2h-1zM572 394h1v1h-1zM528 368h1v1h-1zM565 373h1v1h-1zM713 371h2v1h-2zM563 381h1v1h-1zM712 392h1v2h-1zM687 377h2v1h-2zM795 362h1v1h-1zM533 364h1v1h-1zM501 373h2v1h-2zM547 377h1v1h-1zM591 383h2v1h-2zM674 366h1v2h-1zM690 377h1v1h-1zM737 395h2v1h-2zM574 368h1v2h-1zM810 381h1v2h-1zM761 381h1v2h-1zM770 386h2v1h-2zM721 377h1v2h-1zM828 368h1v1h-1zM777 376h1v1h-1zM686 368h2v1h-2zM746 389h2v1h-2zM675 377h2v1h-2zM781 371h2v2h-2zM660 397h2v1h-2zM651 394h1v2h-1zM598 390h2v1h-2zM786 381h1v2h-1zM802 368h2v2h-2zM630 393h1v2h-1zM513 367h1v2h-1zM640 383h1v1h-1zM534 381h1v1h-1zM682 372h1v2h-1zM716 393h1v1h-1zM719 385h1v1h-1zM742 390h1v1h-1zM523 383h1v2h-1zM595 394h2v2h-2zM782 382h2v2h-2zM723 384h1v2h-1zM732 395h1v1h-1zM837 365h2v1h-2zM670 385h1v1h-1zM622 391h1v2h-1zM734 361h1v1h-1zM600 378h1v1h-1zM638 374h2v1h-2zM559 384h1v1h-1zM746 369h1v1h-1zM604 379h1v2h-1zM622 394h1v1h-1zM803 367h1v2h-1zM762 381h1v1h-1zM540 376h1v2h-1zM520 386h1v2h-1zM736 390h1v2h-1zM572 380h1v2h-1zM697 394h1v2h-1zM730 378h1v2h-1zM540 380h2v2h-2zM573 374h1v2h-1zM684 397h1v2h-1zM788 368h1v2h-1zM785 377h1v1h-1zM652 369h1v2h-1zM723 384h2v2h-2zM736 395h2v1h-2zM768 392h2v1h-2zM674 369h1v2h-1zM640 397h1v1h-1zM705 362h2v1h-2z"/>
<path fill="#fff" d="M490 386h1v25h-1zM491 395h1v13h-1zM492 391h2v23h-2zM494 393h3v12h-3zM497 370h1v41h-1zM498 387h2v24h-2zM500 375h1v33h-1zM501 396h1v24h-1zM502 392h1v25h-1zM503 397h1v14h-1zM504 388h3v19h-3zM507 394h1v15h-1zM508 377h1v31h-1zM509 389h1v23h-1zM510 381h1v28h-1zM511 373h1v39h-1zM512 392h1v29h-1zM513 381h1v33h-1zM514 395h1v14h-1zM515 393h2v23h-2zM517 394h2v22h-2zM519 395h2v22h-2zM521 390h2v30h-2zM523 390h2v24h-2zM525 388h1v23h-1zM526 393h1v19h-1zM527 380h2v31h-2zM529 398h1v13h-1zM530 393h2v16h-2zM532 395h2v13h-2zM534 387h3v26h-3zM537 393h3v20h-3zM540 397h3v16h-3zM543 391h3v18h-3zM546 397h2v17h-2zM548 396h2v22h-2zM550 393h2v29h-2zM552 387h2v22h-2zM554 390h2v18h-2zM556 393h2v17h-2zM558 394h1v17h-1zM559 379h2v43h-2zM561 394h1v19h-1zM562 393h1v19h-1zM563 395h2v18h-2zM565 384h2v28h-2zM567 390h1v27h-1zM568 389h1v23h-1zM569 391h3v20h-3zM572 397h2v17h-2zM574 395h2v19h-2zM576 386h2v28h-2zM578 383h3v39h-3zM581 397h1v15h-1zM582 375h1v36h-1zM583 392h1v18h-1zM584 386h3v29h-3zM587 379h3v37h-3zM590 390h2v34h-2zM592 385h2v41h-2zM594 398h1v16h-1zM595 385h1v29h-1zM596 399h1v19h-1zM597 390h2v32h-2zM599 390h3v28h-3zM602 387h1v27h-1zM603 376h3v37h-3zM606 383h2v28h-2zM608 399h1v13h-1zM609 396h3v17h-3zM612 389h3v23h-3zM615 380h2v33h-2zM617 378h2v44h-2zM619 386h2v27h-2zM621 397h3v18h-3zM624 374h1v50h-1zM625 392h2v34h-2zM627 374h2v38h-2zM629 376h1v36h-1zM630 399h2v10h-2zM632 398h1v25h-1zM633 396h1v16h-1zM634 394h1v18h-1zM635 382h2v30h-2zM637 379h1v34h-1zM638 385h2v26h-2zM640 391h1v29h-1zM641 392h1v23h-1zM642 380h1v44h-1zM643 390h2v24h-2zM645 400h1v24h-1zM646 393h1v23h-1zM647 397h1v21h-1zM648 397h2v24h-2zM650 400h1v13h-1zM651 393h2v30h-2zM653 393h2v28h-2zM655 399h2v15h-2zM657 402h3v9h-3zM660 387h2v29h-2zM662 394h1v28h-1zM663 396h3v28h-3zM666 390h2v36h-2zM668 388h2v29h-2zM670 399h2v13h-2zM672 398h1v17h-1zM673 399h3v15h-3zM676 395h1v18h-1zM677 399h1v18h-1zM678 388h1v34h-1zM679 397h1v17h-1zM680 396h1v21h-1zM681 391h1v34h-1zM682 397h2v16h-2zM684 389h1v27h-1zM685 392h3v22h-3zM688 393h2v24h-2zM690 395h1v22h-1zM691 395h2v19h-2zM693 399h1v15h-1zM694 398h3v14h-3zM697 380h1v35h-1zM698 391h2v28h-2zM700 402h3v16h-3zM703 395h2v22h-2zM705 376h2v40h-2zM707 398h2v15h-2zM709 396h2v20h-2zM711 387h1v28h-1zM712 393h2v21h-2zM714 401h2v24h-2zM716 394h2v17h-2zM718 400h1v13h-1zM719 393h2v19h-2zM721 400h2v19h-2zM723 385h3v29h-3zM726 396h2v19h-2zM728 377h2v48h-2zM730 397h2v15h-2zM732 377h2v43h-2zM734 397h2v22h-2zM736 395h1v24h-1zM737 387h2v26h-2zM739 380h2v32h-2zM741 387h1v27h-1zM742 399h3v25h-3zM745 396h1v26h-1zM746 390h1v28h-1zM747 390h1v25h-1zM748 389h2v23h-2zM750 378h2v32h-2zM752 393h2v24h-2zM754 393h3v31h-3zM757 378h1v38h-1zM758 388h2v23h-2zM760 390h1v28h-1zM761 383h1v30h-1zM762 389h1v20h-1zM763 373h1v45h-1zM764 397h1v18h-1zM765 398h1v9h-1zM766 392h1v17h-1zM767 370h1v51h-1zM768 380h2v29h-2zM770 393h2v16h-2zM772 377h2v35h-2zM774 390h1v32h-1zM775 382h1v34h-1zM776 388h2v21h-2zM778 381h1v30h-1zM779 391h1v18h-1zM780 379h2v29h-2zM782 390h2v19h-2zM784 385h2v26h-2zM786 391h2v17h-2zM788 393h1v17h-1zM789 392h2v13h-2zM791 384h1v35h-1zM792 371h3v50h-3zM795 380h2v39h-2zM797 394h1v21h-1zM798 369h1v42h-1zM799 389h2v22h-2zM801 369h2v37h-2zM803 366h3v38h-3zM806 386h2v16h-2zM808 376h1v29h-1zM809 391h2v13h-2zM811 380h1v22h-1zM812 392h2v12h-2zM814 379h2v26h-2zM816 388h1v16h-1zM817 376h1v39h-1zM818 381h2v34h-2zM820 379h1v26h-1zM821 387h3v15h-3zM824 376h3v27h-3zM827 388h3v12h-3zM830 383h2v31h-2zM832 384h2v24h-2zM834 382h1v23h-1zM835 362h3v43h-3zM838 386h1v15h-1z"/>
<path fill="#3d8ef5" d="M565 455h1v2h-1zM753 430h2v2h-2zM635 447h2v3h-2zM777 425h2v3h-2zM496 421h1v2h-1zM591 448h1v2h-1zM502 444h2v2h-2zM634 414h1v1h-1zM598 429h2v2h-2zM665 419h1v2h-1zM618 417h1v2h-1zM646 430h2v3h-2zM511 426h2v2h-2zM777 418h1v2h-1zM558 423h1v3h-1zM540 422h1v1h-1zM507 420h2v1h-2zM556 436h1v2h-1zM745 429h1v1h-1zM830 437h1v3h-1zM733 421h2v2h-2zM511 414h1v1h-1zM738 419h2v1h-2zM813 410h2v1h-2zM682 419h1v3h-1zM661 434h1v2h-1zM693 423h1v1h-1zM741 452h1v1h-1zM769 433h1v3h-1zM725 447h2v1h-2zM797 445h1v1h-1zM542 420h2v3h-2zM818 421h2v1h-2zM700 418h2v1h-2zM642 454h1v2h-1zM731 425h1v2h-1zM769 449h1v2h-1zM580 416h1v3h-1zM787 429h2v1h-2zM832 407h2v3h-2zM512 439h1v3h-1zM739 432h2v3h-2zM619 425h1v2h-1zM779 422h1v2h-1zM559 433h1v3h-1zM597 424h1v3h-1zM830 439h1v1h-1zM739 431h1v2h-1zM704 444h2v1h-2zM745 455h2v1h-2zM697 444h1v2h-1zM579 419h2v2h-2zM557 435h1v2h-1zM626 417h1v2h-1zM821 423h1v3h-1zM763 434h2v1h-2zM560 413h1v1h-1zM650 424h1v2h-1zM582 414h1v2h-1zM826 441h2v1h-2zM698 427h2v3h-2zM595 419h2v3h-2zM727 447h1v1h-1zM666 438h1v2h-1zM550 445h1v1h-1zM550 444h2v2h-2zM821 431h2v3h-2zM777 416h2v3h-2zM514 441h2v1h-2zM742 438h1v3h-1zM517 417h1v3h-1zM705 417h1v3h-1zM755 428h1v1h-1zM708 425h1v3h-1zM536 431h1v3h-1zM548 429h1v1h-1zM793 413h1v1h-1zM779 409h1v3h-1zM636 451h2v2h-2zM519 453h1v3h-1zM613 433h2v2h-2zM717 430h1v1h-1zM677 419h2v3h-2zM725 453h1v2h-1zM600 416h1v3h-1zM786 431h2v1h-2zM541 443h1v2h-1zM699 425h2v3h-2zM552 438h1v2h-1zM601 438h1v1h-1zM715 440h1v3h-1zM755 426h2v1h-2zM657 451h1v1h-1zM618 431h2v1h-2zM816 431h1v2h-1zM553 426h1v1h-1zM646 437h1v3h-1zM626 425h2v3h-2zM631 433h2v1h-2zM640 425h1v1h-1zM801 415h1v2h-1zM557 451h2v2h-2zM578 430h1v2h-1zM733 456h1v2h-1zM514 430h2v2h-2zM580 456h2v2h-2zM595 430h1v1h-1zM555 452h1v3h-1zM725 436h2v1h-2zM560 420h1v3h-1zM768 422h2v3h-2zM711 422h1v1h-1zM598 418h1v3h-1zM745 426h1v2h-1zM633 448h2v3h-2zM517 443h2v3h-2zM826 409h1v1h-1zM574 438h2v1h-2zM812 435h1v1h-1zM613 435h2v2h-2zM722 415h1v2h-1zM550 430h1v3h-1zM642 444h2v1h-2zM799 439h2v2h-2zM634 426h2v1h-2zM609 456h1v1h-1zM803 425h2v1h-2zM824 427h1v1h-1zM810 414h2v3h-2zM754 434h1v3h-1zM546 437h1v1h-1zM678 436h1v1h-1zM773 455h1v3h-1zM729 420h1v1h-1zM499 441h1v1h-1zM798 410h1v1h-1zM645 427h2v1h-2zM749 443h1v3h-1zM569 436h1v2h-1zM579 418h1v2h-1zM696 422h1v2h-1zM559 437h2v1h-2zM696 430h1v3h-1zM658 440h1v3h-1zM538 446h2v3h-2zM811 435h1v3h-1zM620 440h1v2h-1zM654 451h1v3h-1zM540 416h2v2h-2zM623 427h1v3h-1zM630 444h1v2h-1zM665 442h1v2h-1zM824 447h1v2h-1zM654 444h1v3h-1zM651 452h1v3h-1zM761 429h1v3h-1zM774 437h1v2h-1zM560 452h1v3h-1zM533 443h2v2h-2zM510 412h2v2h-2zM773 453h1v2h-1zM775 435h1v1h-1zM542 442h2v2h-2zM818 437h2v1h-2zM611 415h1v3h-1zM611 446h1v2h-1zM762 451h1v1h-1zM760 450h2v3h-2zM693 456h1v1h-1zM608 443h1v3h-1zM739 454h1v2h-1zM713 452h2v3h-2zM720 419h2v3h-2zM760 426h2v1h-2zM740 437h2v1h-2zM494 426h2v2h-2zM680 438h1v3h-1zM742 414h1v2h-1zM529 415h1v2h-1zM609 425h1v3h-1zM530 431h2v3h-2zM717 439h2v3h-2zM766 426h2v1h-2zM710 417h1v3h-1zM666 445h2v2h-2zM831 448h1v1h-1zM613 423h1v2h-1zM630 426h1v3h-1zM704 427h2v3h-2zM689 440h1v3h-1zM783 442h2v1h-2zM731 433h1v2h-1zM510 415h2v2h-2zM585 441h2v1h-2zM740 451h1v2h-1zM679 446h2v1h-2zM658 414h1v2h-1zM688 440h1v2h-1zM659 453h1v2h-1zM562 420h1v3h-1zM522 432h2v2h-2zM602 454h1v1h-1zM681 423h1v3h-1zM622 455h1v3h-1zM503 414h2v2h-2zM777 440h1v3h-1zM774 454h1v3h-1zM621 453h1v2h-1zM703 415h1v2h-1zM498 427h2v1h-2zM611 437h2v3h-2zM724 417h1v1h-1zM762 443h1v1h-1zM563 455h2v2h-2zM720 448h1v3h-1zM762 448h2v2h-2zM732 442h1v2h-1zM807 434h1v1h-1zM502 436h2v1h-2zM564 448h1v2h-1zM584 431h2v2h-2zM709 422h2v1h-2zM768 416h1v2h-1zM793 450h2v1h-2zM492 456h1v3h-1zM676 428h1v2h-1zM624 424h2v1h-2zM720 422h1v3h-1zM607 418h1v1h-1zM714 439h1v2h-1zM712 427h1v1h-1zM695 434h1v2h-1zM684 448h1v3h-1zM541 442h1v2h-1zM777 453h1v1h-1zM613 443h1v1h-1zM532 439h1v2h-1zM731 429h1v3h-1zM706 435h1v2h-1zM771 414h2v3h-2zM571 427h1v3h-1zM812 447h1v1h-1zM718 444h1v3h-1zM743 432h2v1h-2zM594 423h1v1h-1zM526 425h1v1h-1zM726 441h2v2h-2zM490 429h2v1h-2zM756 431h1v3h-1zM813 411h1v2h-1zM656 455h1v3h-1zM807 415h1v1h-1zM492 454h1v3h-1zM746 414h2v2h-2zM497 439h1v1h-1zM689 456h1v3h-1zM714 429h1v3h-1zM808 442h1v3h-1zM508 418h2v3h-2zM812 429h2v2h-2zM762 432h1v2h-1zM668 415h1v2h-1zM492 435h1v3h-1zM735 449h1v1h-1zM627 414h1v3h-1zM812 432h1v2h-1zM603 418h1v3h-1zM490 442h2v2h-2zM780 437h2v3h-2zM814 455h1v1h-1zM609 423h1v2h-1zM690 457h1v2h-1zM712 443h2v2h-2zM591 444h2v1h-2zM593 428h1v1h-1zM720 444h1v2h-1zM511 450h2v2h-2zM783 419h2v2h-2zM529 415h1v2h-1zM767 416h1v3h-1zM534 445h2v1h-2zM595 414h1v3h-1zM760 421h2v2h-2zM692 424h1v1h-1zM818 450h2v2h-2zM578 432h2v2h-2zM520 450h1v3h-1zM606 434h2v3h-2zM816 435h2v2h-2zM822 404h2v3h-2zM554 415h1v3h-1zM826 438h1v1h-1zM743 419h2v2h-2zM677 430h1v2h-1zM491 448h2v1h-2zM656 420h1v2h-1zM657 428h1v3h-1zM648 446h1v3h-1zM491 441h1v2h-1zM724 442h1v1h-1z"/><path fill="#00e8e8" d="M552 453h1v1h-1zM584 439h3v2h-3zM525 440h2v1h-2zM549 419h3v1h-3zM591 424h1v1h-1zM685 431h1v1h-1zM632 420h1v1h-1zM763 453h3v1h-3zM522 437h3v3h-3zM523 438v1h1v-1zM613 452h2v2h-2zM692 437h1v2h-1zM765 451h1v1h-1zM594 422h1v1h-1zM730 422h3v1h-3zM832 448h3v3h-3zM833 449v1h1v-1zM744 427h2v1h-2zM543 433h3v1h-3zM668 434h1v1h-1zM499 438h1v1h-1zM653 427h1v1h-1zM556 454h1v2h-1zM793 436h1v2h-1zM563 435h3v3h-3zM564 436v1h1v-1zM647 429h2v1h-2zM631 435h1v1h-1zM770 415h1v1h-1zM748 446h1v1h-1zM672 434h3v3h-3zM673 435v1h1v-1zM573 442h1v1h-1zM735 424h1v2h-1zM802 420h1v1h-1zM815 413h3v1h-3zM730 413h2v1h-2zM607 429h1v1h-1zM543 425h1v1h-1zM802 430h3v3h-3zM803 431v1h1v-1zM534 440h2v1h-2zM507 447h3v2h-3zM718 448h1v1h-1zM694 418h1v1h-1zM670 419h3v1h-3zM796 430h1v2h-1zM495 414h1v1h-1zM800 416h1v1h-1zM541 421h3v3h-3zM542 422v1h1v-1zM544 424h3v1h-3zM733 453h3v1h-3zM678 442h3v1h-3zM516 436h1v1h-1zM749 423h3v2h-3zM537 424h1v1h-1zM745 422h2v2h-2zM680 424h1v1h-1zM643 428h1v1h-1zM676 423h1v1h-1zM773 441h3v3h-3zM774 442v1h1v-1zM670 426h3v1h-3zM499 433h1v1h-1zM690 415h1v1h-1zM686 433h1v1h-1zM553 441h1v2h-1zM522 452h3v1h-3zM801 434h1v1h-1zM513 450h1v1h-1zM528 446h2v1h-2zM766 425h3v2h-3zM631 452h1v1h-1zM641 434h3v3h-3zM642 435v1h1v-1zM628 433h2v1h-2zM533 415h2v1h-2zM807 427h1v1h-1zM731 418h3v1h-3zM555 428h3v3h-3zM556 429v1h1v-1zM669 430h1v2h-1zM571 438h1v1h-1zM495 429h3v3h-3zM496 430v1h1v-1zM782 440h3v1h-3zM517 427h3v2h-3zM622 448h3v3h-3zM623 449v1h1v-1zM753 420h1v1h-1zM614 428h1v2h-1zM797 448h1v1h-1zM707 427h2v2h-2zM657 423h1v1h-1zM528 419h1v1h-1zM785 438h1v1h-1zM679 448h1v2h-1zM729 448h1v1h-1zM765 413h1v2h-1zM579 428h1v2h-1zM715 436h3v1h-3zM595 419h3v1h-3zM771 416h3v1h-3zM704 427h1v2h-1zM587 442h1v2h-1zM667 416h2v1h-2zM599 426h3v1h-3zM815 440h2v2h-2zM805 438h3v3h-3zM806 439v1h1v-1zM547 432h2v1h-2zM609 447h2v1h-2zM527 441h3v2h-3zM536 448h1v2h-1zM527 415h2v1h-2zM575 448h2v1h-2zM805 419h1v2h-1zM770 432h3v2h-3zM788 449h2v1h-2zM528 420h2v1h-2zM584 434h3v3h-3zM585 435v1h1v-1zM601 440h3v3h-3zM602 441v1h1v-1zM767 432h3v2h-3zM775 411h3v2h-3zM786 449h3v2h-3zM517 435h3v3h-3zM518 436v1h1v-1zM573 455h1v1h-1zM824 453h3v2h-3zM733 416h3v1h-3zM511 442h1v2h-1zM708 453h3v1h-3zM746 447h2v1h-2zM738 448h3v1h-3zM711 441h1v1h-1zM613 433h1v1h-1zM792 418h3v2h-3zM585 430h3v3h-3zM586 431v1h1v-1zM716 452h2v1h-2zM539 438h1v1h-1zM729 447h1v1h-1zM744 429h3v1h-3zM730 428h1v1h-1zM668 426h1v1h-1zM537 420h1v1h-1zM830 417h2v1h-2zM717 437h3v3h-3zM718 438v1h1v-1zM828 430h3v3h-3zM829 431v1h1v-1zM770 430h1v2h-1zM760 419h1v1h-1zM761 429h1v2h-1zM632 417h1v2h-1zM831 410h1v1h-1zM556 420h1v1h-1zM625 414h1v2h-1zM731 418h3v3h-3zM732 419v1h1v-1zM751 448h1v2h-1zM831 430h1v2h-1zM590 427h3v3h-3zM591 428v1h1v-1zM678 438h3v3h-3zM679 439v1h1v-1zM636 435h3v2h-3zM789 420h1v1h-1zM813 446h3v3h-3zM814 447v1h1v-1zM493 431h1v2h-1zM569 423h1v1h-1zM608 433h1v2h-1zM627 425h1v2h-1zM755 453h3v1h-3zM500 413h1v1h-1zM691 451h2v2h-2zM575 444h3v2h-3zM631 442h1v1h-1zM641 454h1v1h-1zM620 432h3v1h-3zM621 435h2v2h-2zM495 415h1v1h-1zM617 437h2v2h-2zM528 443h3v3h-3zM529 444v1h1v-1zM615 442h2v2h-2zM714 437h3v1h-3zM497 435h2v2h-2zM555 427h1v2h-1zM791 431h3v3h-3zM792 432v1h1v-1zM796 425h1v1h-1zM734 450h2v1h-2zM557 435h2v1h-2zM630 451h1v1h-1zM554 442h2v1h-2zM645 434h1v2h-1zM619 448h1v2h-1zM659 452h1v2h-1zM742 448h3v1h-3zM538 430h2v2h-2zM738 422h1v1h-1zM662 450h3v2h-3zM772 434h1v1h-1zM492 428h1v1h-1zM760 433h3v2h-3zM724 450h3v1h-3zM622 430h2v1h-2zM615 444h2v1h-2zM812 420h1v1h-1zM563 432h2v1h-2zM561 412h1v2h-1zM733 433h1v1h-1zM652 442h3v3h-3zM653 443v1h1v-1zM531 423h1v2h-1zM792 438h1v1h-1zM617 423h1v1h-1zM586 449h1v1h-1zM568 454h3v2h-3zM644 418h2v2h-2zM511 412h1v1h-1zM632 442h1v1h-1zM554 443h2v1h-2zM765 442h1v1h-1zM817 423h2v2h-2zM506 419h3v1h-3zM603 449h3v1h-3zM753 417h3v1h-3zM575 451h1v1h-1zM547 413h2v2h-2zM564 444h1v1h-1zM787 435h2v2h-2zM695 451h1v2h-1zM652 436h1v1h-1zM596 447h1v2h-1zM669 452h3v2h-3zM826 444h3v3h-3zM827 445v1h1v-1zM549 417h3v3h-3zM550 418v1h1v-1zM643 438h1v1h-1zM836 412h2v1h-2zM798 415h1v1h-1zM547 422h2v2h-2zM502 437h3v1h-3zM778 427h1v1h-1zM749 436h1v1h-1zM519 442h1v2h-1zM588 453h1v1h-1zM536 416h1v2h-1zM719 448h2v1h-2zM566 412h3v1h-3zM780 425h2v2h-2zM781 421h2v2h-2zM815 453h1v2h-1zM672 431h2v1h-2zM738 427h2v2h-2zM508 435h1v1h-1zM520 447h1v2h-1zM788 336h3v3h-3zM789 337v1h1v-1zM745 389h3v3h-3zM746 390v1h1v-1zM741 337h3v3h-3zM742 338v1h1v-1zM743 334h3v3h-3zM744 335v1h1v-1zM611 335h3v3h-3zM612 336v1h1v-1zM657 336h3v3h-3zM658 337v1h1v-1zM717 345h3v3h-3zM718 346v1h1v-1zM558 334h3v3h-3zM559 335v1h1v-1zM515 349h3v3h-3zM516 350v1h1v-1z"/><path fill="#ffff00" d="M730 428h1v1h-1zM538 436h1v1h-1zM627 444h2v2h-2zM557 454h2v1h-2zM734 428h1v1h-1zM636 448h3v1h-3zM616 434h3v1h-3zM568 424h3v3h-3zM569 425v1h1v-1zM572 422h1v1h-1zM558 439h3v3h-3zM559 440v1h1v-1zM538 446h1v1h-1zM601 435h3v1h-3zM491 424h3v3h-3zM492 425v1h1v-1zM820 453h3v1h-3zM835 410h1v1h-1zM531 425h1v1h-1zM679 420h1v2h-1zM501 452h2v2h-2zM525 425h2v1h-2zM520 429h1v2h-1zM680 455h3v3h-3zM681 456v1h1v-1zM555 414h2v1h-2zM530 418h1v1h-1zM580 413h1v1h-1zM521 454h1v2h-1zM503 435h3v1h-3zM661 439h3v1h-3zM814 423h3v3h-3zM815 424v1h1v-1zM577 447h1v1h-1zM750 435h1v1h-1zM764 427h2v2h-2zM705 449h1v1h-1zM731 415h1v2h-1zM702 451h1v1h-1zM597 445h2v1h-2zM697 420h1v1h-1zM556 440h3v1h-3zM831 434h2v2h-2zM750 437h2v2h-2zM715 453h1v1h-1zM737 436h3v1h-3zM614 413h1v1h-1zM582 452h3v1h-3zM656 386h3v3h-3zM657 387v1h1v-1zM660 331h3v3h-3zM661 332v1h1v-1zM757 359h3v3h-3zM758 360v1h1v-1zM664 372h3v3h-3zM665 373v1h1v-1zM607 378h3v3h-3zM608 379v1h1v-1zM704 343h3v3h-3zM705 344v1h1v-1zM796 386h3v3h-3zM797 387v1h1v-1zM672 361h3v3h-3zM673 362v1h1v-1zM511 356h3v3h-3zM512 357v1h1v-1zM677 390h3v3h-3zM678 391v1h1v-1zM626 377h3v3h-3zM627 378v1h1v-1zM796 386h3v3h-3zM797 387v1h1v-1zM616 378h3v3h-3zM617 379v1h1v-1zM737 355h3v3h-3zM738 356v1h1v-1zM784 365h3v3h-3zM785 366v1h1v-1zM731 331h3v3h-3zM732 332v1h1v-1zM719 342h3v3h-3zM720 343v1h1v-1zM587 348h3v3h-3zM588 349v1h1v-1zM755 381h3v3h-3zM756 382v1h1v-1zM492 333h3v3h-3zM493 334v1h1v-1zM561 367h3v3h-3zM562 368v1h1v-1z"/><path fill="#000" d="M502 456h1v3h-1zM619 457h1v3h-1zM794 452h1v2h-1zM666 449h1v2h-1zM522 453h1v3h-1zM520 454h1v3h-1zM800 450h1v1h-1zM795 451h1v1h-1zM530 453h1v2h-1zM721 452h1v1h-1zM776 449h1v2h-1zM624 451h1v2h-1zM806 454h1v3h-1zM713 450h1v3h-1zM711 450h1v2h-1zM521 456h1v2h-1zM832 450h1v1h-1zM579 454h1v1h-1zM658 452h1v1h-1zM654 454h1v3h-1zM561 452h1v1h-1zM712 457h1v3h-1zM683 454h1v1h-1zM759 453h1v1h-1zM520 455h1v3h-1zM537 452h1v2h-1zM498 449h1v1h-1zM617 453h1v3h-1zM576 450h1v3h-1zM732 448h1v1h-1zM738 457h1v1h-1zM694 454h1v3h-1zM661 453h1v3h-1zM563 454h1v2h-1zM549 449h1v1h-1zM653 450h1v2h-1zM690 448h1v1h-1zM814 449h1v3h-1zM780 448h1v2h-1zM782 453h1v3h-1zM652 451h1v3h-1zM497 451h1v3h-1zM816 452h1v2h-1zM636 452h1v3h-1zM823 452h1v2h-1zM607 453h1v3h-1zM567 452h1v1h-1zM626 451h1v3h-1zM536 451h1v1h-1zM790 456h1v2h-1zM504 449h1v3h-1zM662 456h1v1h-1zM579 450h1v1h-1zM628 456h1v2h-1zM653 453h1v2h-1zM808 454h1v2h-1zM826 454h1v3h-1zM648 456h1v2h-1zM819 456h1v1h-1zM741 454h1v1h-1zM743 455h1v2h-1zM790 452h1v2h-1zM680 449h1v2h-1zM599 454h1v1h-1zM640 450h1v3h-1zM634 452h1v1h-1zM785 448h1v3h-1zM570 457h1v1h-1zM677 450h1v1h-1zM747 452h1v2h-1zM789 454h1v1h-1zM837 448h1v1h-1zM713 451h1v1h-1zM562 452h1v2h-1zM727 455h1v3h-1zM526 452h1v3h-1zM557 452h1v1h-1zM500 456h1v1h-1zM575 449h1v3h-1zM511 455h1v1h-1zM806 451h1v1h-1zM643 455h1v2h-1zM652 448h1v3h-1zM537 457h1v3h-1zM641 451h1v2h-1zM603 455h1v2h-1zM676 455h1v1h-1zM708 453h1v2h-1zM649 455h1v1h-1zM730 450h1v1h-1zM695 450h1v3h-1zM674 455h1v3h-1zM562 456h1v3h-1zM762 457h1v1h-1zM493 451h1v2h-1zM671 455h1v1h-1zM509 451h1v2h-1zM498 454h1v1h-1zM834 455h1v2h-1zM739 455h1v1h-1zM780 455h1v2h-1zM777 449h1v2h-1zM743 451h1v3h-1zM738 454h1v3h-1zM735 451h1v1h-1zM682 454h1v2h-1zM492 456h1v3h-1zM544 451h1v2h-1zM711 456h1v3h-1zM507 455h1v2h-1zM755 449h1v3h-1zM599 457h1v3h-1zM697 454h1v2h-1zM705 454h1v1h-1zM768 456h1v3h-1zM601 453h1v2h-1zM753 457h1v2h-1zM724 452h1v2h-1zM810 450h1v3h-1zM580 450h1v1h-1z"/>
<path fill="#fff" d="M662 325h2v72h-2zM490 366h3v30h-3z"/><path fill="#3d8ef5" d="M663 262h1v65h-1z"/>
<path fill="#20e020" d="M662 262h3v3h-3zM663 263v1h1v-1zM662 286h3v3h-3zM663 287v1h1v-1zM665 315h3v3h-3zM666 316v1h1v-1zM661 442h1v2h-1zM662 386h1v1h-1zM669 401h1v2h-1zM654 439h2v1h-2zM655 371h2v1h-2zM669 445h1v2h-1zM677 422h1v2h-1zM664 420h1v2h-1zM672 443h2v1h-2zM663 388h2v2h-2zM659 428h2v1h-2zM673 424h1v2h-1zM670 432h2v2h-2zM665 371h1v2h-1zM662 373h1v2h-1zM660 396h1v2h-1zM670 425h1v1h-1zM664 395h2v1h-2zM664 452h1v2h-1zM664 455h2v1h-2zM655 386h1v1h-1zM658 396h2v1h-2zM664 443h1v1h-1zM663 433h1v1h-1zM659 409h1v2h-1zM657 443h3v3h-3zM658 444v1h1v-1zM661 370h3v3h-3zM662 371v1h1v-1zM664 384h1v2h-1zM665 386h1v2h-1zM671 391h2v1h-2zM661 428h2v2h-2zM660 442h2v2h-2zM660 443h1v1h-1zM660 442h2v1h-2zM673 416h2v1h-2zM663 369h3v3h-3zM664 370v1h1v-1zM657 404h2v1h-2zM670 412h1v1h-1zM663 398h1v1h-1zM653 432h1v1h-1zM658 422h1v2h-1zM659 404h1v2h-1zM667 378h1v2h-1zM670 369h2v1h-2zM663 401h2v2h-2zM666 393h2v2h-2zM669 433h1v2h-1zM660 429h1v2h-1zM660 431h1v1h-1zM666 413h1v2h-1zM659 428h1v1h-1zM658 416h1v2h-1zM660 447h1v2h-1zM668 397h2v2h-2zM670 393h1v1h-1zM662 402h2v2h-2zM671 418h2v1h-2zM669 378h1v1h-1zM664 455h3v3h-3zM665 456v1h1v-1zM667 391h1v2h-1zM661 425h1v2h-1zM660 386h1v2h-1zM662 439h2v2h-2zM657 432h1v2h-1zM668 410h2v2h-2zM668 371h2v2h-2zM661 406h1v2h-1zM667 390h2v2h-2zM666 386h3v3h-3zM667 387v1h1v-1zM663 433h1v2h-1zM663 371h2v2h-2zM655 403h2v2h-2zM661 399h2v2h-2zM659 456h1v2h-1zM665 385h1v1h-1zM660 430h1v1h-1zM665 400h2v2h-2zM666 367h2v2h-2zM661 402h1v2h-1zM671 442h2v1h-2zM671 409h2v1h-2zM660 418h2v1h-2zM666 392h1v1h-1zM659 411h1v2h-1zM663 425h2v2h-2zM668 443h1v2h-1zM661 380h2v2h-2zM665 378h2v1h-2zM666 385h1v1h-1zM662 451h1v2h-1zM657 417h1v2h-1zM674 425h2v2h-2zM663 385h1v2h-1zM677 432h2v2h-2zM668 428h1v2h-1zM663 367h1v2h-1zM660 450h2v1h-2zM663 456h1v2h-1zM666 454h1v2h-1zM667 379h1v2h-1zM650 444h2v2h-2zM663 436h1v2h-1zM665 412h3v3h-3zM666 413v1h1v-1zM663 419h1v2h-1zM653 456h1v1h-1zM668 410h1v1h-1zM660 456h2v2h-2zM665 385h2v2h-2zM665 404h1v1h-1zM667 431h2v2h-2zM665 443h2v2h-2zM664 424h1v2h-1zM664 416h3v3h-3zM665 417v1h1v-1zM665 370h2v1h-2zM662 390h2v1h-2zM661 415h2v2h-2z"/><path fill="#ff00ff" d="M662 281h3v3h-3zM663 282v1h1v-1zM667 329h3v3h-3zM668 330v1h1v-1zM658 339h3v3h-3zM659 340v1h1v-1zM661 400h2v2h-2zM662 383h2v2h-2zM664 419h2v2h-2zM671 447h2v2h-2zM655 429h1v1h-1zM662 429h2v2h-2zM658 414h3v3h-3zM659 415v1h1v-1zM664 444h2v2h-2zM661 412h2v1h-2zM669 403h1v2h-1zM657 416h3v3h-3zM658 417v1h1v-1zM656 419h2v1h-2zM670 451h2v2h-2zM665 378h1v2h-1zM655 407h2v1h-2zM661 366h2v2h-2zM665 416h1v2h-1zM653 439h1v2h-1zM666 402h1v1h-1zM659 381h2v1h-2zM666 396h3v3h-3zM667 397v1h1v-1zM674 441h2v1h-2zM667 367h3v3h-3zM668 368v1h1v-1zM655 408h1v1h-1zM668 428h1v1h-1zM663 411h1v2h-1zM657 416h1v2h-1zM655 410h2v1h-2zM663 391h1v1h-1zM671 442h2v2h-2zM660 429h1v2h-1zM666 370h2v2h-2zM667 390h3v3h-3zM668 391v1h1v-1zM671 414h2v2h-2zM657 397h2v1h-2zM657 376h2v2h-2z"/><path fill="#ffff00" d="M662 314h3v3h-3zM663 315v1h1v-1zM673 319h3v3h-3zM674 320v1h1v-1zM671 349h3v3h-3zM672 350v1h1v-1z"/><path fill="#00e8e8" d="M656 324h3v3h-3zM657 325v1h1v-1zM668 411h1v1h-1zM668 435h1v1h-1zM659 389h1v2h-1zM659 422h1v2h-1zM668 432h1v2h-1zM659 433h2v1h-2zM671 374h1v1h-1zM667 433h1v1h-1zM674 400h2v1h-2zM666 457h1v1h-1zM658 367h1v1h-1zM657 377h1v2h-1zM657 380h3v3h-3zM658 381v1h1v-1zM659 438h2v1h-2zM656 442h3v3h-3zM657 443v1h1v-1zM656 449h2v2h-2zM661 404h3v3h-3zM662 405v1h1v-1zM658 399h1v1h-1zM659 383h2v1h-2zM671 387h2v2h-2zM659 373h2v2h-2zM662 389h1v1h-1zM669 376h1v2h-1zM665 397h2v2h-2zM669 395h3v3h-3zM670 396v1h1v-1zM669 381h1v1h-1zM662 400h2v2h-2zM664 374h1v1h-1zM660 442h1v2h-1zM663 442h2v2h-2zM663 455h1v2h-1zM665 440h2v1h-2zM664 429h1v1h-1zM656 369h2v1h-2zM667 396h2v1h-2zM664 409h3v3h-3zM665 410v1h1v-1zM663 432h1v1h-1zM661 386h1v2h-1zM659 387h1v1h-1zM670 385h2v1h-2zM651 403h2v1h-2zM665 402h2v1h-2zM670 381h2v2h-2zM666 450h2v2h-2zM663 381h2v2h-2zM659 448h1v2h-1zM660 410h1v1h-1zM670 443h2v2h-2z"/>
<rect x="490" y="458" width="349" height="3" fill="#4a4a4a"/>
</svg>
<div class="t" style="left:491px;top:108.84px;font-size:12px;color:#fff;">Rng 10 dBm</div>
<div class="t" style="right:792px;top:123.84px;font-size:12px;color:#fff;">5</div>
<div class="t" style="right:792px;top:138.84px;font-size:12px;color:#fff;">%</div>
<div class="t" style="right:792px;top:226.84px;font-size:12px;color:#fff;">LinMag</div>
<div class="t" style="right:792px;top:314.84px;font-size:12px;color:#fff;">500</div>
<div class="t" style="right:792px;top:329.84px;font-size:12px;color:#fff;">m%</div>
<div class="t" style="right:792px;top:344.84px;font-size:12px;color:#fff;">/div</div>
<div class="t" style="right:792px;top:432.84px;font-size:12px;color:#fff;">0</div>
<div class="t" style="right:792px;top:447.84px;font-size:12px;color:#fff;">%</div>
<div class="t" style="left:491px;top:463.84px;font-size:12px;color:#fff;">Start -600  carrier</div>
<div class="t" style="right:441px;top:463.84px;font-size:12px;color:#fff;">Stop 600  carrier</div>
<div class="t" style="left:491px;top:478.84px;font-size:12px;color:#fff;">Res BW 15 kHz</div>
<div class="t" style="right:441px;top:478.84px;font-size:12px;color:#fff;">TimeLen 14  Sym</div>
<svg class="a" style="left:858px;top:103px" width="411" height="392" viewBox="858 103 411 392" shape-rendering="crispEdges" >
<rect x="949" y="121" width="1" height="340" fill="#404040"/><rect x="984" y="121" width="1" height="340" fill="#404040"/><rect x="1018" y="121" width="1" height="340" fill="#404040"/><rect x="1053" y="121" width="1" height="340" fill="#404040"/><rect x="1088" y="121" width="1" height="340" fill="#404040"/><rect x="1123" y="121" width="1" height="340" fill="#404040"/><rect x="1157" y="121" width="1" height="340" fill="#404040"/><rect x="1192" y="121" width="1" height="340" fill="#404040"/><rect x="1227" y="121" width="1" height="340" fill="#404040"/><rect x="914" y="156" width="349" height="1" fill="#404040"/><rect x="914" y="189" width="349" height="1" fill="#404040"/><rect x="914" y="223" width="349" height="1" fill="#404040"/><rect x="914" y="257" width="349" height="1" fill="#404040"/><rect x="914" y="291" width="349" height="1" fill="#404040"/><rect x="914" y="324" width="349" height="1" fill="#404040"/><rect x="914" y="358" width="349" height="1" fill="#404040"/><rect x="914" y="392" width="349" height="1" fill="#404040"/><rect x="914" y="425" width="349" height="1" fill="#404040"/>
<rect x="914" y="121" width="349" height="3" fill="#4a4a4a"/><rect x="914" y="458" width="349" height="3" fill="#4a4a4a"/><rect x="914" y="121" width="3" height="340" fill="#4a4a4a"/><rect x="1260" y="121" width="3" height="340" fill="#4a4a4a"/>
<rect x="941" y="304" width="1" height="24" fill="#00e8f0"/><rect x="940" y="328" width="3" height="132" fill="#cc0000"/><rect x="940" y="303" width="3" height="3" fill="#cc0000"/><rect x="941" y="356" width="1" height="2" fill="#00f0f0"/><rect x="941" y="413" width="1" height="1" fill="#00f0f0"/><rect x="968" y="302" width="1" height="16" fill="#00e8f0"/><rect x="967" y="318" width="3" height="142" fill="#cc0000"/><rect x="967" y="301" width="3" height="3" fill="#cc0000"/><rect x="967" y="308" width="3" height="3" fill="#cc0000"/><rect x="967" y="314" width="3" height="3" fill="#cc0000"/><rect x="968" y="424" width="1" height="2" fill="#00f0f0"/><rect x="994" y="279" width="1" height="41" fill="#00e8f0"/><rect x="993" y="320" width="3" height="140" fill="#cc0000"/><rect x="993" y="278" width="3" height="3" fill="#cc0000"/><rect x="993" y="301" width="3" height="3" fill="#cc0000"/><rect x="993" y="309" width="3" height="3" fill="#cc0000"/><rect x="993" y="313" width="3" height="3" fill="#cc0000"/><rect x="994" y="332" width="1" height="2" fill="#00f0f0"/><rect x="994" y="408" width="1" height="2" fill="#00f0f0"/><rect x="994" y="375" width="1" height="1" fill="#00f0f0"/><rect x="994" y="400" width="1" height="2" fill="#00f0f0"/><rect x="994" y="326" width="1" height="1" fill="#00f0f0"/><rect x="1021" y="327" width="1" height="12" fill="#00e8f0"/><rect x="1020" y="339" width="3" height="121" fill="#cc0000"/><rect x="1020" y="326" width="3" height="3" fill="#cc0000"/><rect x="1021" y="414" width="1" height="1" fill="#00f0f0"/><rect x="1021" y="434" width="1" height="2" fill="#00f0f0"/><rect x="1021" y="384" width="1" height="1" fill="#00f0f0"/><rect x="1021" y="409" width="1" height="2" fill="#00f0f0"/><rect x="1048" y="248" width="1" height="75" fill="#00e8f0"/><rect x="1047" y="323" width="3" height="137" fill="#cc0000"/><rect x="1047" y="247" width="3" height="3" fill="#cc0000"/><rect x="1047" y="254" width="3" height="3" fill="#cc0000"/><rect x="1047" y="269" width="3" height="3" fill="#cc0000"/><rect x="1047" y="275" width="3" height="3" fill="#cc0000"/><rect x="1047" y="283" width="3" height="3" fill="#cc0000"/><rect x="1047" y="296" width="3" height="3" fill="#cc0000"/><rect x="1047" y="311" width="3" height="3" fill="#cc0000"/><rect x="1047" y="317" width="3" height="3" fill="#cc0000"/><rect x="1048" y="362" width="1" height="1" fill="#00f0f0"/><rect x="1075" y="275" width="1" height="55" fill="#00e8f0"/><rect x="1074" y="330" width="3" height="130" fill="#cc0000"/><rect x="1074" y="274" width="3" height="3" fill="#cc0000"/><rect x="1074" y="285" width="3" height="3" fill="#cc0000"/><rect x="1074" y="292" width="3" height="3" fill="#cc0000"/><rect x="1074" y="300" width="3" height="3" fill="#cc0000"/><rect x="1074" y="308" width="3" height="3" fill="#cc0000"/><rect x="1075" y="388" width="1" height="1" fill="#00f0f0"/><rect x="1075" y="335" width="1" height="2" fill="#00f0f0"/><rect x="1075" y="445" width="1" height="2" fill="#00f0f0"/><rect x="1075" y="448" width="1" height="1" fill="#00f0f0"/><rect x="1101" y="313" width="1" height="10" fill="#00e8f0"/><rect x="1100" y="323" width="3" height="137" fill="#cc0000"/><rect x="1100" y="312" width="3" height="3" fill="#cc0000"/><rect x="1100" y="319" width="3" height="3" fill="#cc0000"/><rect x="1101" y="353" width="1" height="1" fill="#00f0f0"/><rect x="1101" y="365" width="1" height="1" fill="#00f0f0"/><rect x="1101" y="441" width="1" height="2" fill="#00f0f0"/><rect x="1101" y="330" width="1" height="2" fill="#00f0f0"/><rect x="1101" y="403" width="1" height="2" fill="#00f0f0"/><rect x="1128" y="263" width="1" height="40" fill="#00e8f0"/><rect x="1127" y="303" width="3" height="157" fill="#cc0000"/><rect x="1127" y="262" width="3" height="3" fill="#cc0000"/><rect x="1127" y="269" width="3" height="3" fill="#cc0000"/><rect x="1127" y="273" width="3" height="3" fill="#cc0000"/><rect x="1127" y="282" width="3" height="3" fill="#cc0000"/><rect x="1127" y="290" width="3" height="3" fill="#cc0000"/><rect x="1128" y="455" width="1" height="1" fill="#00f0f0"/><rect x="1128" y="406" width="1" height="1" fill="#00f0f0"/><rect x="1128" y="347" width="1" height="2" fill="#00f0f0"/><rect x="1128" y="366" width="1" height="1" fill="#00f0f0"/><rect x="1155" y="267" width="1" height="62" fill="#00e8f0"/><rect x="1154" y="329" width="3" height="131" fill="#cc0000"/><rect x="1154" y="266" width="3" height="3" fill="#cc0000"/><rect x="1154" y="286" width="3" height="3" fill="#cc0000"/><rect x="1154" y="301" width="3" height="3" fill="#cc0000"/><rect x="1154" y="305" width="3" height="3" fill="#cc0000"/><rect x="1154" y="315" width="3" height="3" fill="#cc0000"/><rect x="1154" y="324" width="3" height="3" fill="#cc0000"/><rect x="1155" y="396" width="1" height="2" fill="#00f0f0"/><rect x="1155" y="400" width="1" height="1" fill="#00f0f0"/><rect x="1155" y="452" width="1" height="1" fill="#00f0f0"/><rect x="1155" y="350" width="1" height="1" fill="#00f0f0"/><rect x="1155" y="395" width="1" height="1" fill="#00f0f0"/><rect x="1182" y="295" width="1" height="18" fill="#00e8f0"/><rect x="1181" y="313" width="3" height="147" fill="#cc0000"/><rect x="1181" y="294" width="3" height="3" fill="#cc0000"/><rect x="1181" y="301" width="3" height="3" fill="#cc0000"/><rect x="1181" y="310" width="3" height="3" fill="#cc0000"/><rect x="1182" y="333" width="1" height="1" fill="#00f0f0"/><rect x="1182" y="363" width="1" height="2" fill="#00f0f0"/><rect x="1208" y="306" width="1" height="7" fill="#00e8f0"/><rect x="1207" y="313" width="3" height="147" fill="#cc0000"/><rect x="1207" y="305" width="3" height="3" fill="#cc0000"/><rect x="1208" y="453" width="1" height="1" fill="#00f0f0"/><rect x="1208" y="341" width="1" height="2" fill="#00f0f0"/><rect x="1208" y="353" width="1" height="2" fill="#00f0f0"/><rect x="1235" y="296" width="1" height="14" fill="#00e8f0"/><rect x="1234" y="310" width="3" height="150" fill="#cc0000"/><rect x="1234" y="295" width="3" height="3" fill="#cc0000"/><rect x="1235" y="350" width="1" height="1" fill="#00f0f0"/><rect x="1235" y="319" width="1" height="2" fill="#00f0f0"/><rect x="1235" y="406" width="1" height="2" fill="#00f0f0"/><rect x="1235" y="323" width="1" height="1" fill="#00f0f0"/><rect x="1235" y="334" width="1" height="2" fill="#00f0f0"/><rect x="1261" y="286" width="1" height="0" fill="#00e8f0"/><rect x="1260" y="286" width="2" height="174" fill="#cc0000"/><rect x="1260" y="285" width="3" height="3" fill="#cc0000"/><rect x="1261" y="370" width="1" height="2" fill="#00f0f0"/><rect x="1020" y="348" width="3" height="3" fill="none" stroke="#00f0f0" stroke-width="1"/><rect x="1020" y="360" width="3" height="3" fill="none" stroke="#00f0f0" stroke-width="1"/><rect x="1020" y="376" width="3" height="3" fill="none" stroke="#00f0f0" stroke-width="1"/><rect x="1020" y="395" width="3" height="3" fill="none" stroke="#00f0f0" stroke-width="1"/><rect x="1020" y="420" width="3" height="3" fill="none" stroke="#00f0f0" stroke-width="1"/><rect x="1020" y="430" width="3" height="3" fill="none" stroke="#00f0f0" stroke-width="1"/><rect x="1020" y="446" width="3" height="3" fill="none" stroke="#00f0f0" stroke-width="1"/><rect x="1207" y="388" width="3" height="3" fill="#00f0f0"/><rect x="1207" y="419" width="3" height="3" fill="#00f0f0"/><rect x="1207" y="444" width="3" height="3" fill="#00f0f0"/><rect x="1207" y="457" width="3" height="3" fill="#00f0f0"/><rect x="1100" y="355" width="3" height="2" fill="#00f0f0"/><rect x="1100" y="365" width="3" height="2" fill="#00f0f0"/><rect x="1100" y="381" width="3" height="2" fill="#00f0f0"/><rect x="1100" y="430" width="3" height="2" fill="#00f0f0"/><rect x="1100" y="448" width="3" height="2" fill="#00f0f0"/><rect x="1100" y="458" width="3" height="2" fill="#00f0f0"/><rect x="1127" y="262" width="3" height="3" fill="#20e020"/><rect x="1154" y="315" width="3" height="3" fill="#20e020"/><rect x="1181" y="294" width="3" height="3" fill="#20e020"/><rect x="1181" y="335" width="3" height="3" fill="#20e020"/><rect x="1047" y="291" width="3" height="3" fill="#2080ff"/><rect x="1074" y="278" width="3" height="3" fill="#ff40ff"/><rect x="1074" y="327" width="3" height="3" fill="#ff40ff"/><rect x="914" y="313" width="3" height="146" fill="#f0f000"/><rect x="914" y="318" width="3" height="3" fill="#00e0f0"/><rect x="914" y="332" width="3" height="2" fill="#00e0f0"/><rect x="914" y="352" width="3" height="2" fill="#00e0f0"/><rect x="914" y="372" width="3" height="5" fill="#00e0f0"/><rect x="914" y="390" width="3" height="6" fill="#00e0f0"/><rect x="914" y="408" width="3" height="4" fill="#00e0f0"/><rect x="914" y="425" width="3" height="2" fill="#00e0f0"/><rect x="914" y="440" width="3" height="3" fill="#00e0f0"/><rect x="914" y="452" width="3" height="4" fill="#00e0f0"/><rect x="914" y="342" width="3" height="4" fill="#dd0000"/>
<path d="M917 409 L941 403.5 L955 401.5 L968 400 L985 398 L994 397.5 L1004 398 L1021 405.5 L1035 403 L1048 400.5 L1075 400.5 L1084 401 L1092 403 L1114 403 L1115 401.5 L1135 401.5 L1142 403.9 L1148 405 L1167 405 L1169 404 L1182 402.7 L1221 402.7 L1223 404.2 L1237 404.2 L1262 394.8" fill="none" stroke="#fff" stroke-width="2" shape-rendering="auto"/>
</svg>
<div class="t" style="left:915px;top:108.84px;font-size:12px;color:#fff;">Rng 1  V</div>
<div class="t" style="right:368px;top:123.84px;font-size:12px;color:#fff;">5</div>
<div class="t" style="right:368px;top:138.84px;font-size:12px;color:#fff;">%</div>
<div class="t" style="right:368px;top:226.84px;font-size:12px;color:#fff;">LinMag</div>
<div class="t" style="right:368px;top:314.84px;font-size:12px;color:#fff;">500</div>
<div class="t" style="right:368px;top:329.84px;font-size:12px;color:#fff;">m%</div>
<div class="t" style="right:368px;top:344.84px;font-size:12px;color:#fff;">/div</div>
<div class="t" style="right:368px;top:432.84px;font-size:12px;color:#fff;">0</div>
<div class="t" style="right:368px;top:447.84px;font-size:12px;color:#fff;">%</div>
<div class="t" style="left:915px;top:463.84px;font-size:12px;color:#fff;">Start 0  sym</div>
<div class="t" style="right:17px;top:463.84px;font-size:12px;color:#fff;">Stop 13  sym</div>
<svg class="a" style="left:9px;top:527px" width="411" height="392" viewBox="9 527 411 392" shape-rendering="crispEdges" >
<rect x="100" y="545" width="1" height="340" fill="#404040"/><rect x="135" y="545" width="1" height="340" fill="#404040"/><rect x="169" y="545" width="1" height="340" fill="#404040"/><rect x="204" y="545" width="1" height="340" fill="#404040"/><rect x="239" y="545" width="1" height="340" fill="#404040"/><rect x="273" y="545" width="1" height="340" fill="#404040"/><rect x="308" y="545" width="1" height="340" fill="#404040"/><rect x="342" y="545" width="1" height="340" fill="#404040"/><rect x="377" y="545" width="1" height="340" fill="#404040"/><rect x="65" y="580" width="349" height="1" fill="#404040"/><rect x="65" y="613" width="349" height="1" fill="#404040"/><rect x="65" y="647" width="349" height="1" fill="#404040"/><rect x="65" y="681" width="349" height="1" fill="#404040"/><rect x="65" y="715" width="349" height="1" fill="#404040"/><rect x="65" y="748" width="349" height="1" fill="#404040"/><rect x="65" y="782" width="349" height="1" fill="#404040"/><rect x="65" y="816" width="349" height="1" fill="#404040"/><rect x="65" y="849" width="349" height="1" fill="#404040"/>
<rect x="65" y="545" width="349" height="3" fill="#4a4a4a"/><rect x="65" y="882" width="349" height="3" fill="#4a4a4a"/><rect x="65" y="545" width="3" height="340" fill="#4a4a4a"/><rect x="411" y="545" width="3" height="340" fill="#4a4a4a"/>
<rect x="65" y="714" width="1" height="51" fill="#33ff00"/><rect x="66" y="710" width="1" height="46" fill="#33ff00"/><rect x="67" y="707" width="1" height="69" fill="#33ff00"/><rect x="68" y="717" width="1" height="106" fill="#33ff00"/><rect x="69" y="717" width="1" height="71" fill="#33ff00"/><rect x="70" y="717" width="1" height="62" fill="#33ff00"/><rect x="71" y="722" width="1" height="50" fill="#33ff00"/><rect x="72" y="713" width="1" height="58" fill="#33ff00"/><rect x="73" y="715" width="1" height="49" fill="#33ff00"/><rect x="74" y="712" width="1" height="66" fill="#33ff00"/><rect x="75" y="721" width="1" height="88" fill="#33ff00"/><rect x="76" y="715" width="1" height="60" fill="#33ff00"/><rect x="77" y="714" width="1" height="67" fill="#33ff00"/><rect x="78" y="721" width="1" height="54" fill="#33ff00"/><rect x="79" y="718" width="1" height="56" fill="#33ff00"/><rect x="80" y="718" width="1" height="68" fill="#33ff00"/><rect x="81" y="716" width="1" height="65" fill="#33ff00"/><rect x="82" y="720" width="1" height="62" fill="#33ff00"/><rect x="83" y="717" width="1" height="61" fill="#33ff00"/><rect x="84" y="719" width="1" height="51" fill="#33ff00"/><rect x="85" y="716" width="1" height="68" fill="#33ff00"/><rect x="86" y="714" width="1" height="97" fill="#33ff00"/><rect x="87" y="715" width="1" height="58" fill="#33ff00"/><rect x="88" y="718" width="1" height="97" fill="#33ff00"/><rect x="89" y="720" width="1" height="82" fill="#33ff00"/><rect x="90" y="720" width="1" height="62" fill="#33ff00"/><rect x="91" y="720" width="1" height="67" fill="#33ff00"/><rect x="92" y="722" width="1" height="52" fill="#33ff00"/><rect x="93" y="713" width="1" height="72" fill="#33ff00"/><rect x="94" y="718" width="1" height="62" fill="#33ff00"/><rect x="95" y="715" width="1" height="64" fill="#33ff00"/><rect x="96" y="708" width="1" height="68" fill="#33ff00"/><rect x="97" y="696" width="1" height="76" fill="#33ff00"/><rect x="98" y="687" width="1" height="80" fill="#33ff00"/><rect x="99" y="674" width="1" height="100" fill="#33ff00"/><rect x="100" y="667" width="1" height="117" fill="#33ff00"/><rect x="101" y="653" width="1" height="109" fill="#33ff00"/><rect x="102" y="646" width="1" height="116" fill="#33ff00"/><rect x="103" y="637" width="1" height="104" fill="#33ff00"/><rect x="104" y="621" width="1" height="111" fill="#33ff00"/><rect x="105" y="613" width="1" height="98" fill="#33ff00"/><rect x="106" y="597" width="1" height="101" fill="#33ff00"/><rect x="107" y="590" width="1" height="88" fill="#33ff00"/><rect x="108" y="577" width="1" height="86" fill="#33ff00"/><rect x="109" y="567" width="1" height="72" fill="#33ff00"/><rect x="110" y="573" width="1" height="76" fill="#33ff00"/><rect x="111" y="568" width="1" height="66" fill="#33ff00"/><rect x="112" y="574" width="1" height="56" fill="#33ff00"/><rect x="113" y="571" width="1" height="64" fill="#33ff00"/><rect x="114" y="565" width="1" height="71" fill="#33ff00"/><rect x="115" y="571" width="1" height="70" fill="#33ff00"/><rect x="116" y="576" width="1" height="50" fill="#33ff00"/><rect x="117" y="565" width="1" height="59" fill="#33ff00"/><rect x="118" y="578" width="1" height="83" fill="#33ff00"/><rect x="119" y="573" width="1" height="56" fill="#33ff00"/><rect x="120" y="574" width="1" height="71" fill="#33ff00"/><rect x="121" y="572" width="1" height="114" fill="#33ff00"/><rect x="122" y="575" width="1" height="50" fill="#33ff00"/><rect x="123" y="570" width="1" height="59" fill="#33ff00"/><rect x="124" y="570" width="1" height="75" fill="#33ff00"/><rect x="125" y="570" width="1" height="60" fill="#33ff00"/><rect x="126" y="575" width="1" height="55" fill="#33ff00"/><rect x="127" y="572" width="1" height="124" fill="#33ff00"/><rect x="128" y="571" width="1" height="66" fill="#33ff00"/><rect x="129" y="563" width="1" height="73" fill="#33ff00"/><rect x="130" y="571" width="1" height="69" fill="#33ff00"/><rect x="131" y="568" width="1" height="92" fill="#33ff00"/><rect x="132" y="567" width="1" height="70" fill="#33ff00"/><rect x="133" y="571" width="1" height="50" fill="#33ff00"/><rect x="134" y="570" width="1" height="68" fill="#33ff00"/><rect x="135" y="572" width="1" height="55" fill="#33ff00"/><rect x="136" y="570" width="1" height="61" fill="#33ff00"/><rect x="137" y="574" width="1" height="67" fill="#33ff00"/><rect x="138" y="574" width="1" height="66" fill="#33ff00"/><rect x="139" y="574" width="1" height="66" fill="#33ff00"/><rect x="140" y="580" width="1" height="76" fill="#33ff00"/><rect x="141" y="573" width="1" height="65" fill="#33ff00"/><rect x="142" y="573" width="1" height="75" fill="#33ff00"/><rect x="143" y="571" width="1" height="62" fill="#33ff00"/><rect x="144" y="566" width="1" height="65" fill="#33ff00"/><rect x="145" y="573" width="1" height="69" fill="#33ff00"/><rect x="146" y="567" width="1" height="82" fill="#33ff00"/><rect x="147" y="574" width="1" height="62" fill="#33ff00"/><rect x="148" y="569" width="1" height="57" fill="#33ff00"/><rect x="149" y="572" width="1" height="71" fill="#33ff00"/><rect x="150" y="570" width="1" height="67" fill="#33ff00"/><rect x="151" y="571" width="1" height="58" fill="#33ff00"/><rect x="152" y="571" width="1" height="62" fill="#33ff00"/><rect x="153" y="572" width="1" height="58" fill="#33ff00"/><rect x="154" y="575" width="1" height="109" fill="#33ff00"/><rect x="155" y="564" width="1" height="60" fill="#33ff00"/><rect x="156" y="570" width="1" height="68" fill="#33ff00"/><rect x="157" y="574" width="1" height="78" fill="#33ff00"/><rect x="158" y="569" width="1" height="59" fill="#33ff00"/><rect x="159" y="568" width="1" height="98" fill="#33ff00"/><rect x="160" y="563" width="1" height="67" fill="#33ff00"/><rect x="161" y="570" width="1" height="57" fill="#33ff00"/><rect x="162" y="573" width="1" height="61" fill="#33ff00"/><rect x="163" y="573" width="1" height="65" fill="#33ff00"/><rect x="164" y="565" width="1" height="116" fill="#33ff00"/><rect x="165" y="571" width="1" height="50" fill="#33ff00"/><rect x="166" y="574" width="1" height="61" fill="#33ff00"/><rect x="167" y="572" width="1" height="58" fill="#33ff00"/><rect x="168" y="574" width="1" height="64" fill="#33ff00"/><rect x="169" y="570" width="1" height="60" fill="#33ff00"/><rect x="170" y="573" width="1" height="60" fill="#33ff00"/><rect x="171" y="571" width="1" height="54" fill="#33ff00"/><rect x="172" y="567" width="1" height="56" fill="#33ff00"/><rect x="173" y="568" width="1" height="61" fill="#33ff00"/><rect x="174" y="563" width="1" height="74" fill="#33ff00"/><rect x="175" y="574" width="1" height="58" fill="#33ff00"/><rect x="176" y="578" width="1" height="63" fill="#33ff00"/><rect x="177" y="571" width="1" height="70" fill="#33ff00"/><rect x="178" y="575" width="1" height="51" fill="#33ff00"/><rect x="179" y="570" width="1" height="73" fill="#33ff00"/><rect x="180" y="571" width="1" height="73" fill="#33ff00"/><rect x="181" y="572" width="1" height="83" fill="#33ff00"/><rect x="182" y="570" width="1" height="55" fill="#33ff00"/><rect x="183" y="569" width="1" height="82" fill="#33ff00"/><rect x="184" y="573" width="1" height="58" fill="#33ff00"/><rect x="185" y="570" width="1" height="61" fill="#33ff00"/><rect x="186" y="575" width="1" height="49" fill="#33ff00"/><rect x="187" y="568" width="1" height="65" fill="#33ff00"/><rect x="188" y="572" width="1" height="48" fill="#33ff00"/><rect x="189" y="568" width="1" height="81" fill="#33ff00"/><rect x="190" y="572" width="1" height="59" fill="#33ff00"/><rect x="191" y="569" width="1" height="61" fill="#33ff00"/><rect x="192" y="575" width="1" height="59" fill="#33ff00"/><rect x="193" y="572" width="1" height="58" fill="#33ff00"/><rect x="194" y="572" width="1" height="74" fill="#33ff00"/><rect x="195" y="567" width="1" height="73" fill="#33ff00"/><rect x="196" y="574" width="1" height="75" fill="#33ff00"/><rect x="197" y="574" width="1" height="52" fill="#33ff00"/><rect x="198" y="575" width="1" height="122" fill="#33ff00"/><rect x="199" y="575" width="1" height="56" fill="#33ff00"/><rect x="200" y="571" width="1" height="74" fill="#33ff00"/><rect x="201" y="570" width="1" height="72" fill="#33ff00"/><rect x="202" y="576" width="1" height="52" fill="#33ff00"/><rect x="203" y="571" width="1" height="61" fill="#33ff00"/><rect x="204" y="572" width="1" height="59" fill="#33ff00"/><rect x="205" y="573" width="1" height="66" fill="#33ff00"/><rect x="206" y="574" width="1" height="49" fill="#33ff00"/><rect x="207" y="569" width="1" height="65" fill="#33ff00"/><rect x="208" y="574" width="1" height="75" fill="#33ff00"/><rect x="209" y="567" width="1" height="72" fill="#33ff00"/><rect x="210" y="571" width="1" height="50" fill="#33ff00"/><rect x="211" y="570" width="1" height="70" fill="#33ff00"/><rect x="212" y="573" width="1" height="57" fill="#33ff00"/><rect x="213" y="572" width="1" height="47" fill="#33ff00"/><rect x="214" y="565" width="1" height="73" fill="#33ff00"/><rect x="215" y="577" width="1" height="49" fill="#33ff00"/><rect x="216" y="572" width="1" height="85" fill="#33ff00"/><rect x="217" y="572" width="1" height="73" fill="#33ff00"/><rect x="218" y="571" width="1" height="60" fill="#33ff00"/><rect x="219" y="575" width="1" height="69" fill="#33ff00"/><rect x="220" y="569" width="1" height="57" fill="#33ff00"/><rect x="221" y="572" width="1" height="62" fill="#33ff00"/><rect x="222" y="573" width="1" height="54" fill="#33ff00"/><rect x="223" y="572" width="1" height="59" fill="#33ff00"/><rect x="224" y="575" width="1" height="60" fill="#33ff00"/><rect x="225" y="574" width="1" height="53" fill="#33ff00"/><rect x="226" y="571" width="1" height="58" fill="#33ff00"/><rect x="227" y="571" width="1" height="56" fill="#33ff00"/><rect x="228" y="570" width="1" height="62" fill="#33ff00"/><rect x="229" y="575" width="1" height="41" fill="#33ff00"/><rect x="230" y="569" width="1" height="49" fill="#33ff00"/><rect x="231" y="570" width="1" height="55" fill="#33ff00"/><rect x="232" y="567" width="1" height="69" fill="#33ff00"/><rect x="233" y="574" width="1" height="45" fill="#33ff00"/><rect x="234" y="575" width="1" height="54" fill="#33ff00"/><rect x="235" y="573" width="1" height="75" fill="#33ff00"/><rect x="236" y="572" width="1" height="62" fill="#33ff00"/><rect x="237" y="574" width="1" height="60" fill="#33ff00"/><rect x="238" y="566" width="1" height="86" fill="#33ff00"/><rect x="239" y="567" width="1" height="79" fill="#33ff00"/><rect x="240" y="574" width="1" height="71" fill="#33ff00"/><rect x="241" y="573" width="1" height="79" fill="#33ff00"/><rect x="242" y="571" width="1" height="75" fill="#33ff00"/><rect x="243" y="569" width="1" height="62" fill="#33ff00"/><rect x="244" y="570" width="1" height="65" fill="#33ff00"/><rect x="245" y="572" width="1" height="57" fill="#33ff00"/><rect x="246" y="572" width="1" height="65" fill="#33ff00"/><rect x="247" y="573" width="1" height="73" fill="#33ff00"/><rect x="248" y="571" width="1" height="74" fill="#33ff00"/><rect x="249" y="569" width="1" height="66" fill="#33ff00"/><rect x="250" y="575" width="1" height="50" fill="#33ff00"/><rect x="251" y="572" width="1" height="51" fill="#33ff00"/><rect x="252" y="574" width="1" height="52" fill="#33ff00"/><rect x="253" y="573" width="1" height="111" fill="#33ff00"/><rect x="254" y="574" width="1" height="65" fill="#33ff00"/><rect x="255" y="568" width="1" height="71" fill="#33ff00"/><rect x="256" y="569" width="1" height="69" fill="#33ff00"/><rect x="257" y="575" width="1" height="45" fill="#33ff00"/><rect x="258" y="573" width="1" height="54" fill="#33ff00"/><rect x="259" y="572" width="1" height="63" fill="#33ff00"/><rect x="260" y="573" width="1" height="55" fill="#33ff00"/><rect x="261" y="571" width="1" height="63" fill="#33ff00"/><rect x="262" y="574" width="1" height="67" fill="#33ff00"/><rect x="263" y="572" width="1" height="54" fill="#33ff00"/><rect x="264" y="576" width="1" height="69" fill="#33ff00"/><rect x="265" y="572" width="1" height="63" fill="#33ff00"/><rect x="266" y="572" width="1" height="75" fill="#33ff00"/><rect x="267" y="574" width="1" height="52" fill="#33ff00"/><rect x="268" y="577" width="1" height="49" fill="#33ff00"/><rect x="269" y="573" width="1" height="55" fill="#33ff00"/><rect x="270" y="570" width="1" height="71" fill="#33ff00"/><rect x="271" y="573" width="1" height="67" fill="#33ff00"/><rect x="272" y="570" width="1" height="68" fill="#33ff00"/><rect x="273" y="574" width="1" height="54" fill="#33ff00"/><rect x="274" y="572" width="1" height="52" fill="#33ff00"/><rect x="275" y="570" width="1" height="98" fill="#33ff00"/><rect x="276" y="568" width="1" height="67" fill="#33ff00"/><rect x="277" y="570" width="1" height="52" fill="#33ff00"/><rect x="278" y="562" width="1" height="88" fill="#33ff00"/><rect x="279" y="570" width="1" height="54" fill="#33ff00"/><rect x="280" y="573" width="1" height="59" fill="#33ff00"/><rect x="281" y="569" width="1" height="62" fill="#33ff00"/><rect x="282" y="575" width="1" height="80" fill="#33ff00"/><rect x="283" y="565" width="1" height="106" fill="#33ff00"/><rect x="284" y="571" width="1" height="106" fill="#33ff00"/><rect x="285" y="572" width="1" height="68" fill="#33ff00"/><rect x="286" y="570" width="1" height="64" fill="#33ff00"/><rect x="287" y="571" width="1" height="52" fill="#33ff00"/><rect x="288" y="573" width="1" height="97" fill="#33ff00"/><rect x="289" y="569" width="1" height="57" fill="#33ff00"/><rect x="290" y="569" width="1" height="91" fill="#33ff00"/><rect x="291" y="572" width="1" height="66" fill="#33ff00"/><rect x="292" y="575" width="1" height="77" fill="#33ff00"/><rect x="293" y="566" width="1" height="73" fill="#33ff00"/><rect x="294" y="572" width="1" height="54" fill="#33ff00"/><rect x="295" y="575" width="1" height="58" fill="#33ff00"/><rect x="296" y="574" width="1" height="57" fill="#33ff00"/><rect x="297" y="573" width="1" height="52" fill="#33ff00"/><rect x="298" y="572" width="1" height="60" fill="#33ff00"/><rect x="299" y="567" width="1" height="63" fill="#33ff00"/><rect x="300" y="572" width="1" height="124" fill="#33ff00"/><rect x="301" y="570" width="1" height="58" fill="#33ff00"/><rect x="302" y="574" width="1" height="94" fill="#33ff00"/><rect x="303" y="570" width="1" height="92" fill="#33ff00"/><rect x="304" y="563" width="1" height="75" fill="#33ff00"/><rect x="305" y="574" width="1" height="72" fill="#33ff00"/><rect x="306" y="572" width="1" height="64" fill="#33ff00"/><rect x="307" y="573" width="1" height="59" fill="#33ff00"/><rect x="308" y="575" width="1" height="76" fill="#33ff00"/><rect x="309" y="569" width="1" height="52" fill="#33ff00"/><rect x="310" y="574" width="1" height="60" fill="#33ff00"/><rect x="311" y="572" width="1" height="69" fill="#33ff00"/><rect x="312" y="570" width="1" height="53" fill="#33ff00"/><rect x="313" y="572" width="1" height="71" fill="#33ff00"/><rect x="314" y="561" width="1" height="76" fill="#33ff00"/><rect x="315" y="572" width="1" height="87" fill="#33ff00"/><rect x="316" y="571" width="1" height="53" fill="#33ff00"/><rect x="317" y="570" width="1" height="67" fill="#33ff00"/><rect x="318" y="569" width="1" height="53" fill="#33ff00"/><rect x="319" y="573" width="1" height="58" fill="#33ff00"/><rect x="320" y="571" width="1" height="59" fill="#33ff00"/><rect x="321" y="573" width="1" height="52" fill="#33ff00"/><rect x="322" y="570" width="1" height="65" fill="#33ff00"/><rect x="323" y="570" width="1" height="61" fill="#33ff00"/><rect x="324" y="571" width="1" height="67" fill="#33ff00"/><rect x="325" y="572" width="1" height="55" fill="#33ff00"/><rect x="326" y="571" width="1" height="56" fill="#33ff00"/><rect x="327" y="574" width="1" height="59" fill="#33ff00"/><rect x="328" y="563" width="1" height="67" fill="#33ff00"/><rect x="329" y="569" width="1" height="52" fill="#33ff00"/><rect x="330" y="567" width="1" height="56" fill="#33ff00"/><rect x="331" y="572" width="1" height="66" fill="#33ff00"/><rect x="332" y="569" width="1" height="83" fill="#33ff00"/><rect x="333" y="571" width="1" height="60" fill="#33ff00"/><rect x="334" y="571" width="1" height="62" fill="#33ff00"/><rect x="335" y="574" width="1" height="56" fill="#33ff00"/><rect x="336" y="574" width="1" height="48" fill="#33ff00"/><rect x="337" y="575" width="1" height="48" fill="#33ff00"/><rect x="338" y="570" width="1" height="52" fill="#33ff00"/><rect x="339" y="571" width="1" height="62" fill="#33ff00"/><rect x="340" y="573" width="1" height="65" fill="#33ff00"/><rect x="341" y="567" width="1" height="61" fill="#33ff00"/><rect x="342" y="566" width="1" height="65" fill="#33ff00"/><rect x="343" y="573" width="1" height="54" fill="#33ff00"/><rect x="344" y="573" width="1" height="56" fill="#33ff00"/><rect x="345" y="568" width="1" height="62" fill="#33ff00"/><rect x="346" y="570" width="1" height="64" fill="#33ff00"/><rect x="347" y="573" width="1" height="52" fill="#33ff00"/><rect x="348" y="574" width="1" height="58" fill="#33ff00"/><rect x="349" y="571" width="1" height="63" fill="#33ff00"/><rect x="350" y="574" width="1" height="46" fill="#33ff00"/><rect x="351" y="568" width="1" height="66" fill="#33ff00"/><rect x="352" y="572" width="1" height="65" fill="#33ff00"/><rect x="353" y="573" width="1" height="78" fill="#33ff00"/><rect x="354" y="568" width="1" height="66" fill="#33ff00"/><rect x="355" y="572" width="1" height="60" fill="#33ff00"/><rect x="356" y="574" width="1" height="58" fill="#33ff00"/><rect x="357" y="571" width="1" height="77" fill="#33ff00"/><rect x="358" y="564" width="1" height="73" fill="#33ff00"/><rect x="359" y="573" width="1" height="79" fill="#33ff00"/><rect x="360" y="570" width="1" height="56" fill="#33ff00"/><rect x="361" y="565" width="1" height="67" fill="#33ff00"/><rect x="362" y="571" width="1" height="63" fill="#33ff00"/><rect x="363" y="573" width="1" height="64" fill="#33ff00"/><rect x="364" y="570" width="1" height="46" fill="#33ff00"/><rect x="365" y="567" width="1" height="77" fill="#33ff00"/><rect x="366" y="571" width="1" height="51" fill="#33ff00"/><rect x="367" y="569" width="1" height="58" fill="#33ff00"/><rect x="368" y="571" width="1" height="80" fill="#33ff00"/><rect x="369" y="577" width="1" height="47" fill="#33ff00"/><rect x="370" y="582" width="1" height="73" fill="#33ff00"/><rect x="371" y="592" width="1" height="69" fill="#33ff00"/><rect x="372" y="602" width="1" height="83" fill="#33ff00"/><rect x="373" y="616" width="1" height="87" fill="#33ff00"/><rect x="374" y="628" width="1" height="83" fill="#33ff00"/><rect x="375" y="638" width="1" height="97" fill="#33ff00"/><rect x="376" y="647" width="1" height="98" fill="#33ff00"/><rect x="377" y="659" width="1" height="99" fill="#33ff00"/><rect x="378" y="676" width="1" height="98" fill="#33ff00"/><rect x="379" y="683" width="1" height="83" fill="#33ff00"/><rect x="380" y="694" width="1" height="73" fill="#33ff00"/><rect x="381" y="709" width="1" height="69" fill="#33ff00"/><rect x="382" y="720" width="1" height="53" fill="#33ff00"/><rect x="383" y="730" width="1" height="52" fill="#33ff00"/><rect x="384" y="706" width="1" height="67" fill="#33ff00"/><rect x="385" y="711" width="1" height="64" fill="#33ff00"/><rect x="386" y="719" width="1" height="61" fill="#33ff00"/><rect x="387" y="714" width="1" height="68" fill="#33ff00"/><rect x="388" y="714" width="1" height="53" fill="#33ff00"/><rect x="389" y="716" width="1" height="64" fill="#33ff00"/><rect x="390" y="717" width="1" height="124" fill="#33ff00"/><rect x="391" y="718" width="1" height="63" fill="#33ff00"/><rect x="392" y="713" width="1" height="55" fill="#33ff00"/><rect x="393" y="718" width="1" height="58" fill="#33ff00"/><rect x="394" y="715" width="1" height="64" fill="#33ff00"/><rect x="395" y="717" width="1" height="78" fill="#33ff00"/><rect x="396" y="714" width="1" height="63" fill="#33ff00"/><rect x="397" y="716" width="1" height="57" fill="#33ff00"/><rect x="398" y="714" width="1" height="71" fill="#33ff00"/><rect x="399" y="716" width="1" height="82" fill="#33ff00"/><rect x="400" y="719" width="1" height="58" fill="#33ff00"/><rect x="401" y="715" width="1" height="68" fill="#33ff00"/><rect x="402" y="715" width="1" height="56" fill="#33ff00"/><rect x="403" y="716" width="1" height="59" fill="#33ff00"/><rect x="404" y="711" width="1" height="66" fill="#33ff00"/><rect x="405" y="718" width="1" height="83" fill="#33ff00"/><rect x="406" y="716" width="1" height="108" fill="#33ff00"/><rect x="407" y="717" width="1" height="56" fill="#33ff00"/><rect x="408" y="720" width="1" height="48" fill="#33ff00"/><rect x="409" y="714" width="1" height="63" fill="#33ff00"/><rect x="410" y="704" width="1" height="66" fill="#33ff00"/><rect x="411" y="715" width="1" height="51" fill="#33ff00"/><rect x="412" y="715" width="1" height="56" fill="#33ff00"/><rect x="413" y="713" width="1" height="80" fill="#33ff00"/>
</svg>
<div class="t" style="left:66px;top:532.84px;font-size:12px;color:#fff;">Rng 10 dBm</div>
<div class="t" style="right:1217px;top:547.84px;font-size:12px;color:#fff;">45</div>
<div class="t" style="right:1217px;top:562.84px;font-size:12px;color:#fff;">dBm</div>
<div class="t" style="right:1217px;top:650.84px;font-size:12px;color:#fff;">LogMag</div>
<div class="t" style="right:1217px;top:738.84px;font-size:12px;color:#fff;">15</div>
<div class="t" style="right:1217px;top:753.84px;font-size:12px;color:#fff;">dB</div>
<div class="t" style="right:1217px;top:768.84px;font-size:12px;color:#fff;">/div</div>
<div class="t" style="right:1217px;top:856.84px;font-size:12px;color:#fff;">-105</div>
<div class="t" style="right:1217px;top:871.84px;font-size:12px;color:#fff;">dBm</div>
<div class="t" style="left:66px;top:887.84px;font-size:12px;color:#fff;">Center 2.7493 uHz</div>
<div class="t" style="right:866px;top:887.84px;font-size:12px;color:#fff;">Span 24 MHz</div>
<div class="t" style="left:66px;top:902.84px;font-size:12px;color:#fff;">Res BW 3.81942 kHz</div>
<div class="t" style="right:866px;top:902.84px;font-size:12px;color:#fff;">TimeLen 1 mSec</div>
<div style="position:absolute;left:828px;top:527px;width:16px;height:376px;background:repeating-conic-gradient(#d4d0c8 0 25%,#ffffff 0 50%) 0 0/2px 2px"></div>
<div style="position:absolute;left:828px;top:527px;width:16px;height:16px;background:#d4d0c8;box-shadow:inset 1px 1px 0 #fff,inset -1px -1px 0 #404040,inset -2px -2px 0 #808080"></div>
<svg class="a" style="left:832px;top:533px" width="8" height="4"><path d="M0 4 H7 L3.5 0Z" fill="#000"/></svg>
<div style="position:absolute;left:828px;top:543px;width:16px;height:16px;background:#d4d0c8;box-shadow:inset 1px 1px 0 #fff,inset -1px -1px 0 #404040,inset -2px -2px 0 #808080"></div>
<div style="position:absolute;left:828px;top:887px;width:16px;height:16px;background:#d4d0c8;box-shadow:inset 1px 1px 0 #fff,inset -1px -1px 0 #404040,inset -2px -2px 0 #808080"></div>
<svg class="a" style="left:832px;top:893px" width="8" height="4"><path d="M0 0 H7 L3.5 4Z" fill="#000"/></svg>
<div style="position:absolute;left:434px;top:903px;width:394px;height:16px;background:repeating-conic-gradient(#d4d0c8 0 25%,#ffffff 0 50%) 0 0/2px 2px"></div>
<div style="position:absolute;left:434px;top:903px;width:16px;height:16px;background:#d4d0c8;box-shadow:inset 1px 1px 0 #fff,inset -1px -1px 0 #404040,inset -2px -2px 0 #808080"></div>
<svg class="a" style="left:440px;top:907px" width="4" height="8"><path d="M4 0 V7 L0 3.5Z" fill="#000"/></svg>
<div style="position:absolute;left:450px;top:903px;width:16px;height:16px;background:#d4d0c8;box-shadow:inset 1px 1px 0 #fff,inset -1px -1px 0 #404040,inset -2px -2px 0 #808080"></div>
<div style="position:absolute;left:812px;top:903px;width:16px;height:16px;background:#d4d0c8;box-shadow:inset 1px 1px 0 #fff,inset -1px -1px 0 #404040,inset -2px -2px 0 #808080"></div>
<svg class="a" style="left:818px;top:907px" width="4" height="8"><path d="M0 0 V7 L4 3.5Z" fill="#000"/></svg>
<div style="position:absolute;left:828px;top:903px;width:16px;height:16px;background:#d4d0c8"></div>
<div style="position:absolute;left:858px;top:903px;width:411px;height:16px;background:repeating-conic-gradient(#d4d0c8 0 25%,#ffffff 0 50%) 0 0/2px 2px"></div>
<div style="position:absolute;left:858px;top:903px;width:16px;height:16px;background:#d4d0c8;box-shadow:inset 1px 1px 0 #fff,inset -1px -1px 0 #404040,inset -2px -2px 0 #808080"></div>
<svg class="a" style="left:864px;top:907px" width="4" height="8"><path d="M4 0 V7 L0 3.5Z" fill="#000"/></svg>
<div style="position:absolute;left:874px;top:903px;width:16px;height:16px;background:#d4d0c8;box-shadow:inset 1px 1px 0 #fff,inset -1px -1px 0 #404040,inset -2px -2px 0 #808080"></div>
<div style="position:absolute;left:1253px;top:903px;width:16px;height:16px;background:#d4d0c8;box-shadow:inset 1px 1px 0 #fff,inset -1px -1px 0 #404040,inset -2px -2px 0 #808080"></div>
<svg class="a" style="left:1259px;top:907px" width="4" height="8"><path d="M0 0 V7 L4 3.5Z" fill="#000"/></svg>
<div class="a" style="left:434px;top:527px;width:388px;height:376px;overflow:hidden">
<div class="t" style="left:9px;top:30.84px;font-size:12px;color:#ff0050">EVM</div>
<div class="t" style="left:172px;top:30.84px;font-size:12px;color:#ff0050">=</div>
<div class="t" style="left:185px;top:30.84px;font-size:12px;color:#ff0050">-41.398</div>
<div class="t" style="left:270.70000000000005px;top:30.84px;font-size:12px;color:#ff0050">dB</div>
<div class="t" style="left:298.5px;top:30.84px;font-size:12px;color:#ff0050">at</div>
<div class="t" style="left:319px;top:30.84px;font-size:12px;color:#ff0050">EVM Window</div>
<div class="t" style="left:9px;top:45.84px;font-size:12px;color:#ff0050">EVM Pk</div>
<div class="t" style="left:172px;top:45.84px;font-size:12px;color:#ff0050">=</div>
<div class="t" style="left:185px;top:45.84px;font-size:12px;color:#ff0050">-30.108</div>
<div class="t" style="left:270.70000000000005px;top:45.84px;font-size:12px;color:#ff0050">dB</div>
<div class="t" style="left:298.5px;top:45.84px;font-size:12px;color:#ff0050">at</div>
<div class="t" style="left:319px;top:45.84px;font-size:12px;color:#ff0050">sym</div>
<div class="t" style="left:347px;top:45.84px;font-size:12px;color:#ff0050">5,</div>
<div class="t" style="left:369px;top:45.84px;font-size:12px;color:#ff0050">sub</div>
<div class="t" style="left:9px;top:60.84px;font-size:12px;color:#ff0050">Data EVM</div>
<div class="t" style="left:172px;top:60.84px;font-size:12px;color:#ff0050">=</div>
<div class="t" style="left:185px;top:60.84px;font-size:12px;color:#ff0050">-41.196</div>
<div class="t" style="left:270.70000000000005px;top:60.84px;font-size:12px;color:#ff0050">dB</div>
<div class="t" style="left:7px;top:75.84px;font-size:12px;color:#ff0050"> - 3GPP-defined QPSK EVM</div>
<div class="t" style="left:172px;top:75.84px;font-size:12px;color:#ff0050">=</div>
<div class="t" style="left:186px;top:75.84px;font-size:12px;color:#ff0050">&#8212;</div>
<div class="t" style="left:7px;top:90.84px;font-size:12px;color:#ff0050"> - 3GPP-defined 16QAM EVM</div>
<div class="t" style="left:172px;top:90.84px;font-size:12px;color:#ff0050">=</div>
<div class="t" style="left:186px;top:90.84px;font-size:12px;color:#ff0050">&#8212;</div>
<div class="t" style="left:7px;top:105.84px;font-size:12px;color:#ff0050"> - 3GPP-defined 64QAM EVM</div>
<div class="t" style="left:172px;top:105.84px;font-size:12px;color:#ff0050">=</div>
<div class="t" style="left:185px;top:105.84px;font-size:12px;color:#ff0050">-41.199</div>
<div class="t" style="left:270.70000000000005px;top:105.84px;font-size:12px;color:#ff0050">dB</div>
<div class="t" style="left:9px;top:120.84px;font-size:12px;color:#ff0050">RS EVM</div>
<div class="t" style="left:172px;top:120.84px;font-size:12px;color:#ff0050">=</div>
<div class="t" style="left:185px;top:120.84px;font-size:12px;color:#ff0050">-43.966</div>
<div class="t" style="left:270.70000000000005px;top:120.84px;font-size:12px;color:#ff0050">dB</div>
<div class="t" style="left:9px;top:135.84px;font-size:12px;color:#ff0050">RS Tx. Power (Avg)</div>
<div class="t" style="left:172px;top:135.84px;font-size:12px;color:#ff0050">=</div>
<div class="t" style="left:186px;top:135.84px;font-size:12px;color:#ff0050">34.401</div>
<div class="t" style="left:263px;top:135.84px;font-size:12px;color:#ff0050">dBm</div>
<div class="t" style="left:9px;top:150.84px;font-size:12px;color:#ff0050">OFDM Sym. Tx. Power</div>
<div class="t" style="left:172px;top:150.84px;font-size:12px;color:#ff0050">=</div>
<div class="t" style="left:186px;top:150.84px;font-size:12px;color:#ff0050">65.195</div>
<div class="t" style="left:263px;top:150.84px;font-size:12px;color:#ff0050">dBm</div>
<div class="t" style="left:9px;top:165.84px;font-size:12px;color:#ff0050">RS Rx. Power (Avg)</div>
<div class="t" style="left:172px;top:165.84px;font-size:12px;color:#ff0050">=</div>
<div class="t" style="left:186px;top:165.84px;font-size:12px;color:#ff0050">34.401</div>
<div class="t" style="left:263px;top:165.84px;font-size:12px;color:#ff0050">dBm</div>
<div class="t" style="left:9px;top:180.84px;font-size:12px;color:#ff0050">RS Rx. Quality</div>
<div class="t" style="left:172px;top:180.84px;font-size:12px;color:#ff0050">=</div>
<div class="t" style="left:185px;top:180.84px;font-size:12px;color:#ff0050">-10.773</div>
<div class="t" style="left:270.70000000000005px;top:180.84px;font-size:12px;color:#ff0050">dB</div>
<div class="t" style="left:9px;top:203.84px;font-size:12px;color:#ff0050">Freq Err</div>
<div class="t" style="left:172px;top:203.84px;font-size:12px;color:#ff0050">=</div>
<div class="t" style="left:186px;top:203.84px;font-size:12px;color:#ff0050">1.0143</div>
<div class="t" style="left:263px;top:203.84px;font-size:12px;color:#ff0050">kHz</div>
<div class="t" style="left:9px;top:218.84px;font-size:12px;color:#ff0050">SyncCorr</div>
<div class="t" style="left:172px;top:218.84px;font-size:12px;color:#ff0050">=</div>
<div class="t" style="left:186px;top:218.84px;font-size:12px;color:#ff0050">99.613</div>
<div class="t" style="left:278px;top:218.84px;font-size:12px;color:#ff0050">%</div>
<div class="t" style="left:298px;top:218.84px;font-size:12px;color:#ff0050">using</div>
<div class="t" style="left:340px;top:218.84px;font-size:12px;color:#ff0050">P-SS</div>
<div class="t" style="left:9px;top:233.84px;font-size:12px;color:#ff0050">Common Tracking Error</div>
<div class="t" style="left:172px;top:233.84px;font-size:12px;color:#ff0050">=</div>
<div class="t" style="left:186px;top:233.84px;font-size:12px;color:#ff0050">171.74</div>
<div class="t" style="left:249px;top:233.84px;font-size:12px;color:#ff0050">m%rms</div>
<div class="t" style="left:9px;top:248.84px;font-size:12px;color:#ff0050">SymClk Err</div>
<div class="t" style="left:172px;top:248.84px;font-size:12px;color:#ff0050">=</div>
<div class="t" style="left:185px;top:248.84px;font-size:12px;color:#ff0050">-0.39219</div>
<div class="t" style="left:263px;top:248.84px;font-size:12px;color:#ff0050">ppm</div>
<div class="t" style="left:9px;top:263.84px;font-size:12px;color:#ff0050">Time Offset</div>
<div class="t" style="left:172px;top:263.84px;font-size:12px;color:#ff0050">=</div>
<div class="t" style="left:186px;top:263.84px;font-size:12px;color:#ff0050">182.46</div>
<div class="t" style="left:256.5px;top:263.84px;font-size:12px;color:#ff0050">usec</div>
<div class="t" style="left:9px;top:278.84px;font-size:12px;color:#ff0050">IQ Offset</div>
<div class="t" style="left:172px;top:278.84px;font-size:12px;color:#ff0050">=</div>
<div class="t" style="left:185px;top:278.84px;font-size:12px;color:#ff0050">-49.757</div>
<div class="t" style="left:270.70000000000005px;top:278.84px;font-size:12px;color:#ff0050">dB</div>
<div class="t" style="left:9px;top:293.84px;font-size:12px;color:#ff0050">IQ Gain Imbalance</div>
<div class="t" style="left:172px;top:293.84px;font-size:12px;color:#ff0050">=</div>
<div class="t" style="left:186px;top:293.84px;font-size:12px;color:#ff0050">0.008</div>
<div class="t" style="left:270.70000000000005px;top:293.84px;font-size:12px;color:#ff0050">dB</div>
<div class="t" style="left:9px;top:308.84px;font-size:12px;color:#ff0050">IQ Quad. Error</div>
<div class="t" style="left:172px;top:308.84px;font-size:12px;color:#ff0050">=</div>
<div class="t" style="left:185px;top:308.84px;font-size:12px;color:#ff0050">-71.483</div>
<div class="t" style="left:256.5px;top:308.84px;font-size:12px;color:#ff0050">mdeg</div>
<div class="t" style="left:9px;top:323.84px;font-size:12px;color:#ff0050">IQ Timing Skew</div>
<div class="t" style="left:172px;top:323.84px;font-size:12px;color:#ff0050">=</div>
<div class="t" style="left:186px;top:323.84px;font-size:12px;color:#ff0050">8.5907</div>
<div class="t" style="left:256.5px;top:323.84px;font-size:12px;color:#ff0050">psec</div>
<div class="t" style="left:9px;top:345.84px;font-size:12px;color:#ff0050">CP Length Mode</div>
<div class="t" style="left:172px;top:345.84px;font-size:12px;color:#ff0050">=</div>
<div class="t" style="left:186px;top:345.84px;font-size:12px;color:#ff0050">Normal(auto)</div>
<div class="t" style="left:9px;top:360.84px;font-size:12px;color:#ff0050">Cell ID</div>
<div class="t" style="left:172px;top:360.84px;font-size:12px;color:#ff0050">=</div>
<div class="t" style="left:186px;top:360.84px;font-size:12px;color:#ff0050">1</div>
<div class="t" style="left:242px;top:360.84px;font-size:12px;color:#ff0050">(auto)</div>
<div class="a" style="left:6px;top:197px;width:383px;height:1px;background:#ff0050"></div>
<div class="a" style="left:6px;top:340px;width:383px;height:1px;background:#ff0050"></div>
</div>
<div class="t" style="left:871px;top:557.84px;font-size:12px;color:#ff00ff;">Channel</div>
<div class="t" style="left:983px;top:557.84px;font-size:12px;color:#ff00ff;">EVM(dB)</div>
<div class="t" style="left:1060px;top:557.84px;font-size:12px;color:#ff00ff;">Power(dB)</div>
<div class="t" style="left:1137px;top:557.84px;font-size:12px;color:#ff00ff;">Mod.Fmt.</div>
<div class="t" style="left:1214px;top:557.84px;font-size:12px;color:#ff00ff;">Num.RB</div>
<div style="position:absolute;left:864px;top:578px;width:399px;height:1px;background:#ff00ff"></div>
<div class="t" style="left:871px;top:587.84px;font-size:12px;color:#f010f0;">P-SS</div>
<div class="t" style="left:989px;top:587.84px;font-size:12px;color:#f010f0;">-40.226</div>
<div class="t" style="left:1074px;top:587.84px;font-size:12px;color:#f010f0;">0.28172</div>
<div class="t" style="left:1159px;top:587.84px;font-size:12px;color:#f010f0;">Z-Chu</div>
<div class="t" style="left:1242px;top:587.84px;font-size:12px;color:#f010f0;">6</div>
<div class="t" style="left:871px;top:602.84px;font-size:12px;color:#2080ff;">S-SS</div>
<div class="t" style="left:989px;top:602.84px;font-size:12px;color:#2080ff;">-40.799</div>
<div class="t" style="left:1074px;top:602.84px;font-size:12px;color:#2080ff;">0.27427</div>
<div class="t" style="left:1159px;top:602.84px;font-size:12px;color:#2080ff;">BPSK</div>
<div class="t" style="left:1242px;top:602.84px;font-size:12px;color:#2080ff;">6</div>
<div class="t" style="left:871px;top:617.84px;font-size:12px;color:#00ff00;">PBCH</div>
<div class="t" style="left:989px;top:617.84px;font-size:12px;color:#00ff00;">-40.827</div>
<div class="t" style="left:1074px;top:617.84px;font-size:12px;color:#00ff00;">0.24791</div>
<div class="t" style="left:1159px;top:617.84px;font-size:12px;color:#00ff00;">QPSK</div>
<div class="t" style="left:1242px;top:617.84px;font-size:12px;color:#00ff00;">6</div>
<div class="t" style="left:871px;top:632.84px;font-size:12px;color:#8020ff;">PCFICH</div>
<div class="t" style="left:989px;top:632.84px;font-size:12px;color:#8020ff;">-42.707</div>
<div class="t" style="left:1074px;top:632.84px;font-size:12px;color:#8020ff;">-0.01770</div>
<div class="t" style="left:1159px;top:632.84px;font-size:12px;color:#8020ff;">QPSK</div>
<div class="t" style="left:1242px;top:632.84px;font-size:12px;color:#8020ff;">4</div>
<div class="t" style="left:871px;top:647.84px;font-size:12px;color:#ff0000;">PHICH</div>
<div class="t" style="left:989px;top:647.84px;font-size:12px;color:#ff0000;">-45.25</div>
<div class="t" style="left:1074px;top:647.84px;font-size:12px;color:#ff0000;">-0.01078</div>
<div class="t" style="left:1159px;top:647.84px;font-size:12px;color:#ff0000;">BPSK (CDM)</div>
<div class="t" style="left:1242px;top:647.84px;font-size:12px;color:#ff0000;">6</div>
<div class="t" style="left:871px;top:662.84px;font-size:12px;color:#ffff00;">PDCCH</div>
<div class="t" style="left:989px;top:662.84px;font-size:12px;color:#ffff00;">-43.453</div>
<div class="t" style="left:1074px;top:662.84px;font-size:12px;color:#ffff00;">1.1933</div>
<div class="t" style="left:1159px;top:662.84px;font-size:12px;color:#ffff00;">QPSK</div>
<div class="t" style="left:1242px;top:662.84px;font-size:12px;color:#ffff00;">95</div>
<div class="t" style="left:871px;top:677.84px;font-size:12px;color:#00ffff;">RS</div>
<div class="t" style="left:989px;top:677.84px;font-size:12px;color:#00ffff;">-43.966</div>
<div class="t" style="left:1074px;top:677.84px;font-size:12px;color:#00ffff;">-0.00207</div>
<div class="t" style="left:1159px;top:677.84px;font-size:12px;color:#00ffff;">QPSK</div>
<div class="t" style="left:1242px;top:677.84px;font-size:12px;color:#00ffff;">200</div>
<div class="t" style="left:871px;top:692.84px;font-size:12px;color:#d00000;">PDSCH_User01</div>
<div class="t" style="left:989px;top:692.84px;font-size:12px;color:#d00000;">-41.196</div>
<div class="t" style="left:1074px;top:692.84px;font-size:12px;color:#d00000;">-0.01846</div>
<div class="t" style="left:1159px;top:692.84px;font-size:12px;color:#d00000;">64QAM</div>
<div class="t" style="left:1242px;top:692.84px;font-size:12px;color:#d00000;">200</div>
<div class="t" style="left:871px;top:707.84px;font-size:12px;color:#888888;">Non-alloc</div>
<div class="t" style="left:989px;top:707.84px;font-size:12px;color:#888888;">&#8212;</div>
<div class="t" style="left:1074px;top:707.84px;font-size:12px;color:#888888;">&#8212;</div>
<div class="t" style="left:1159px;top:707.84px;font-size:12px;color:#888888;">&#8212;</div>
<div class="t" style="left:1242px;top:707.84px;font-size:12px;color:#888888;">&#8212;</div>
</body></html>
